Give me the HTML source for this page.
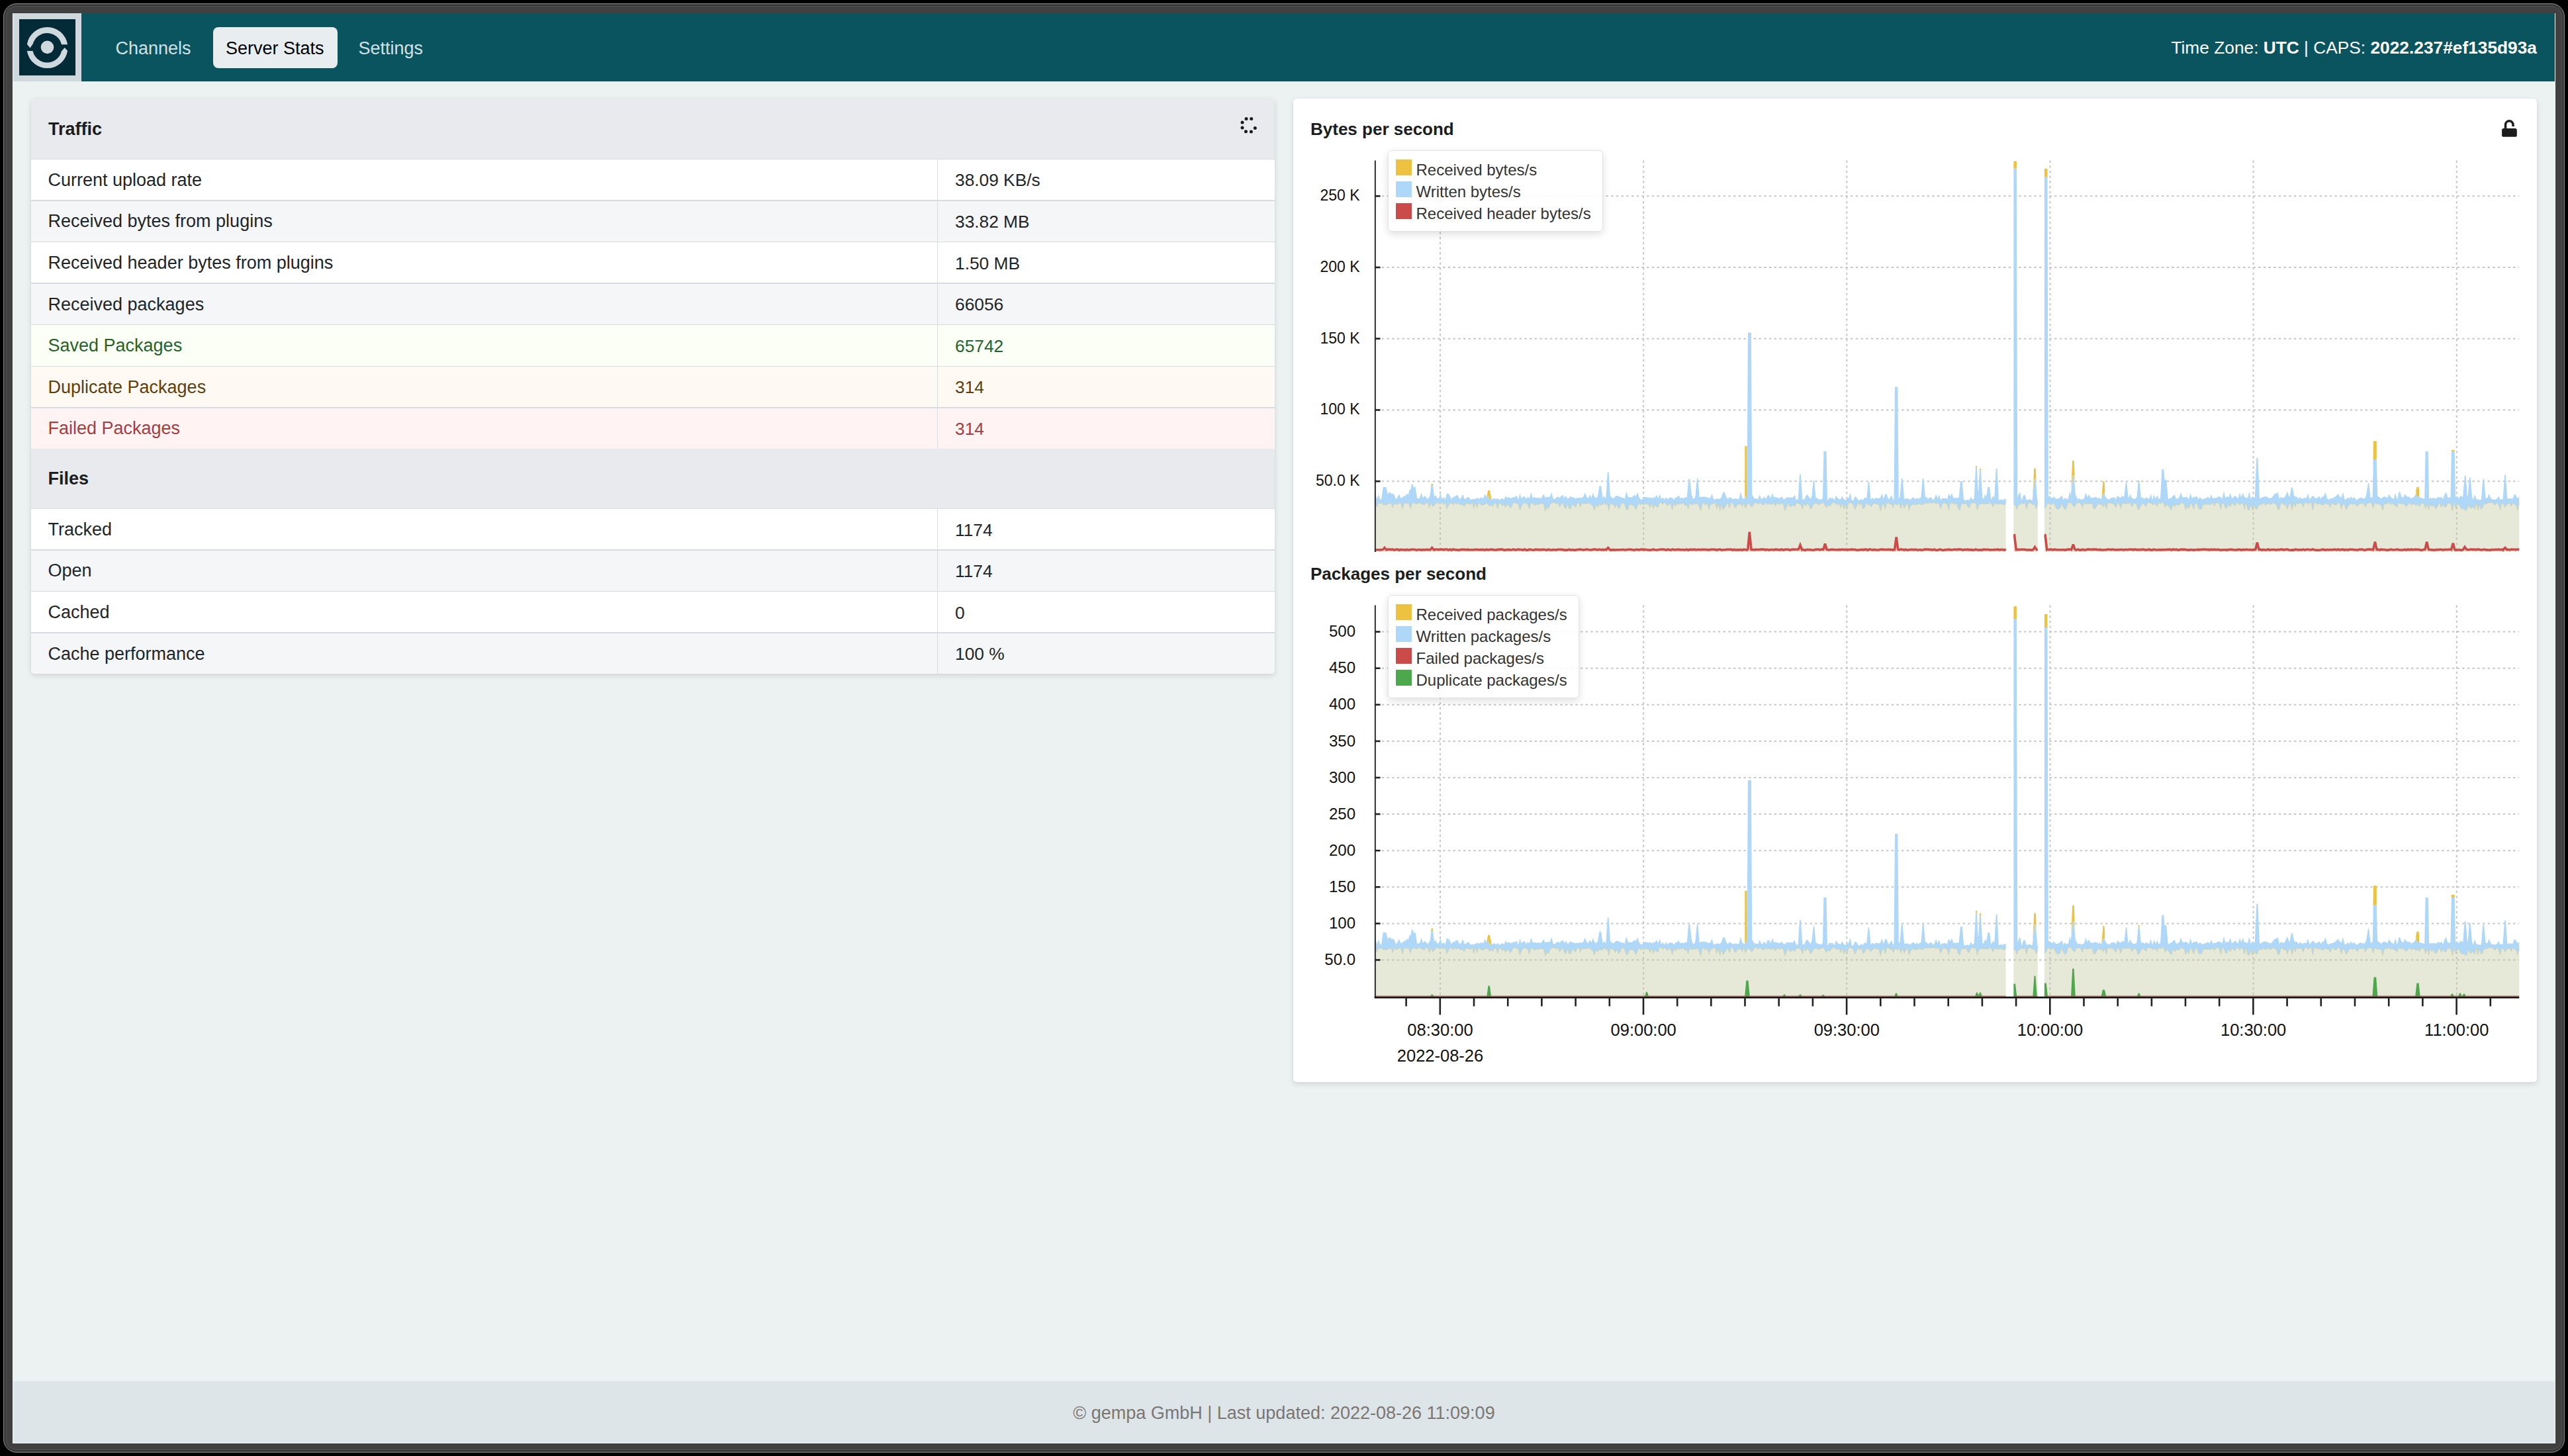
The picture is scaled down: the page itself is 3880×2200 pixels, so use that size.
<!DOCTYPE html>
<html><head><meta charset="utf-8"><style>
html,body{margin:0;padding:0;width:3880px;height:2200px;overflow:hidden;background:#000;}
body{position:relative;font-family:"Liberation Sans",sans-serif;}
.t{position:absolute;white-space:nowrap;}
.r{position:absolute;}
</style></head><body>
<div class="r" style="left:4.60px;top:4.60px;width:3870.80px;height:2190.80px;background:#404040;border-radius:20px;border:1.2px solid #808080;box-sizing:border-box;"></div>
<div class="r" style="left:7.60px;top:7.60px;width:3864.80px;height:2184.80px;background:transparent;border-radius:17px;border:1px solid #303030;box-sizing:border-box;"></div>
<div class="r" style="left:8.80px;top:8.80px;width:3862.40px;height:2182.40px;background:transparent;border-radius:16px;border:1px solid #555555;box-sizing:border-box;"></div>
<div class="r" style="left:19.40px;top:20.00px;width:3841.20px;height:2160.60px;background:#f6fafa;"></div>
<div class="r" style="left:20.00px;top:20.00px;width:3840.00px;height:2160.00px;background:#ecf2f2;"></div>
<div class="r" style="left:20.00px;top:20.00px;width:3840.00px;height:103.00px;background:#0a5460;"></div>
<div class="r" style="left:20.00px;top:20.00px;width:103.00px;height:103.00px;background:#cfd8dc;"></div>
<div class="r" style="left:29.00px;top:29.00px;width:85.00px;height:85.00px;background:#022b37;"></div>
<svg class="r" style="left:29px;top:29px" width="85" height="85" viewBox="29 29 85 85">
<circle cx="71.5" cy="71.4" r="9.8" fill="#cfd8dc"/>
<g transform="translate(0 0.45)"><path d="M40.85 66.4 A31 31 0 0 1 102.1 66.9 L92.9 66.9 A22.2 22.2 0 0 0 49.85 65.7 L45.4 72.0 Z" fill="#cfd8dc"/>
<path d="M102.1 76.3 A31 31 0 0 1 40.85 76.65 L49.6 76.65 A22.2 22.2 0 0 0 92.9 77.05 L97.6 71.6 Z" fill="#cfd8dc"/></g>
</svg>
<div class="r" style="left:322.00px;top:41.00px;width:188.00px;height:62.00px;background:#e8eef0;border-radius:8px;"></div>
<div class="t" style="left:174.50px;top:60.14px;font-size:27px;line-height:27px;color:#d2e1e4;font-weight:400;">Channels</div>
<div class="t" style="left:341.00px;top:60.14px;font-size:27px;line-height:27px;color:#000;font-weight:400;">Server Stats</div>
<div class="t" style="left:541.50px;top:60.14px;font-size:27px;line-height:27px;color:#d2e1e4;font-weight:400;">Settings</div>
<div class="t" style="right:47.00px;text-align:right;top:59.24px;font-size:26.3px;line-height:26.3px;color:#ffffff;font-weight:400;">Time Zone: <b>UTC</b> | CAPS: <b>2022.237#ef135d93a</b></div>
<div class="r" style="left:20.00px;top:2087.00px;width:3840.00px;height:93.00px;background:#dee5e8;"></div>
<div class="t" style="left:1340.00px;width:1200px;text-align:center;top:2121.64px;font-size:27px;line-height:27px;color:#7a7672;font-weight:400;">© gempa GmbH | Last updated: 2022-08-26 11:09:09</div>
<div class="r" style="left:47.00px;top:149.00px;width:1879.00px;height:869.00px;background:#ffffff;border-radius:5px;box-shadow:0 3px 9px rgba(0,0,0,0.12),0 0 2px rgba(0,0,0,0.07);overflow:hidden;"></div>
<div class="r" style="left:47.00px;top:149.00px;width:1879.00px;height:90.50px;background:#e9eaed;border-radius:5px 5px 0 0;"></div>
<div class="t" style="left:73.00px;top:182.14px;font-size:27px;line-height:27px;color:#1b1e21;font-weight:700;">Traffic</div>
<div class="r" style="left:47.00px;top:239.50px;width:1879.00px;height:62.61px;background:#ffffff;"></div>
<div class="r" style="left:47.00px;top:239.50px;width:1879.00px;height:1.50px;background:#d8dce1;"></div>
<div class="r" style="left:1415.70px;top:239.50px;width:1.50px;height:62.61px;background:#d8dce1;"></div>
<div class="t" style="left:72.50px;top:258.74px;font-size:27px;line-height:27px;color:#212529;font-weight:400;">Current upload rate</div>
<div class="t" style="left:1443.00px;top:259.34px;font-size:26.3px;line-height:26.3px;color:#212529;font-weight:400;">38.09 KB/s</div>
<div class="r" style="left:47.00px;top:302.11px;width:1879.00px;height:62.61px;background:#f5f6f8;"></div>
<div class="r" style="left:47.00px;top:302.11px;width:1879.00px;height:1.50px;background:#d8dce1;"></div>
<div class="r" style="left:1415.70px;top:302.11px;width:1.50px;height:62.61px;background:#d8dce1;"></div>
<div class="t" style="left:72.50px;top:321.35px;font-size:27px;line-height:27px;color:#212529;font-weight:400;">Received bytes from plugins</div>
<div class="t" style="left:1443.00px;top:321.95px;font-size:26.3px;line-height:26.3px;color:#212529;font-weight:400;">33.82 MB</div>
<div class="r" style="left:47.00px;top:364.72px;width:1879.00px;height:62.61px;background:#ffffff;"></div>
<div class="r" style="left:47.00px;top:364.72px;width:1879.00px;height:1.50px;background:#d8dce1;"></div>
<div class="r" style="left:1415.70px;top:364.72px;width:1.50px;height:62.61px;background:#d8dce1;"></div>
<div class="t" style="left:72.50px;top:383.96px;font-size:27px;line-height:27px;color:#212529;font-weight:400;">Received header bytes from plugins</div>
<div class="t" style="left:1443.00px;top:384.56px;font-size:26.3px;line-height:26.3px;color:#212529;font-weight:400;">1.50 MB</div>
<div class="r" style="left:47.00px;top:427.33px;width:1879.00px;height:62.61px;background:#f5f6f8;"></div>
<div class="r" style="left:47.00px;top:427.33px;width:1879.00px;height:1.50px;background:#d8dce1;"></div>
<div class="r" style="left:1415.70px;top:427.33px;width:1.50px;height:62.61px;background:#d8dce1;"></div>
<div class="t" style="left:72.50px;top:446.57px;font-size:27px;line-height:27px;color:#212529;font-weight:400;">Received packages</div>
<div class="t" style="left:1443.00px;top:447.17px;font-size:26.3px;line-height:26.3px;color:#212529;font-weight:400;">66056</div>
<div class="r" style="left:47.00px;top:489.94px;width:1879.00px;height:62.61px;background:#fcfff5;"></div>
<div class="r" style="left:47.00px;top:489.94px;width:1879.00px;height:1.50px;background:#d8dce1;"></div>
<div class="r" style="left:1415.70px;top:489.94px;width:1.50px;height:62.61px;background:#d8dce1;"></div>
<div class="t" style="left:72.50px;top:509.18px;font-size:27px;line-height:27px;color:#24632c;font-weight:400;">Saved Packages</div>
<div class="t" style="left:1443.00px;top:509.78px;font-size:26.3px;line-height:26.3px;color:#24632c;font-weight:400;">65742</div>
<div class="r" style="left:47.00px;top:552.55px;width:1879.00px;height:62.61px;background:#fff9f3;"></div>
<div class="r" style="left:47.00px;top:552.55px;width:1879.00px;height:1.50px;background:#d8dce1;"></div>
<div class="r" style="left:1415.70px;top:552.55px;width:1.50px;height:62.61px;background:#d8dce1;"></div>
<div class="t" style="left:72.50px;top:571.79px;font-size:27px;line-height:27px;color:#5e400d;font-weight:400;">Duplicate Packages</div>
<div class="t" style="left:1443.00px;top:572.39px;font-size:26.3px;line-height:26.3px;color:#5e400d;font-weight:400;">314</div>
<div class="r" style="left:47.00px;top:615.16px;width:1879.00px;height:62.61px;background:#fff4f3;"></div>
<div class="r" style="left:47.00px;top:615.16px;width:1879.00px;height:1.50px;background:#d8dce1;"></div>
<div class="r" style="left:1415.70px;top:615.16px;width:1.50px;height:62.61px;background:#d8dce1;"></div>
<div class="t" style="left:72.50px;top:634.40px;font-size:27px;line-height:27px;color:#a63c3f;font-weight:400;">Failed Packages</div>
<div class="t" style="left:1443.00px;top:635.00px;font-size:26.3px;line-height:26.3px;color:#a63c3f;font-weight:400;">314</div>
<div class="r" style="left:47.00px;top:677.80px;width:1879.00px;height:89.90px;background:#e9eaed;"></div>
<div class="t" style="left:72.50px;top:709.64px;font-size:27px;line-height:27px;color:#1b1e21;font-weight:700;">Files</div>
<div class="r" style="left:47.00px;top:767.70px;width:1879.00px;height:62.55px;background:#ffffff;"></div>
<div class="r" style="left:47.00px;top:767.70px;width:1879.00px;height:1.50px;background:#d8dce1;"></div>
<div class="r" style="left:1415.70px;top:767.70px;width:1.50px;height:62.55px;background:#d8dce1;"></div>
<div class="t" style="left:72.50px;top:786.94px;font-size:27px;line-height:27px;color:#212529;font-weight:400;">Tracked</div>
<div class="t" style="left:1443.00px;top:787.54px;font-size:26.3px;line-height:26.3px;color:#212529;font-weight:400;">1174</div>
<div class="r" style="left:47.00px;top:830.25px;width:1879.00px;height:62.55px;background:#f5f6f8;"></div>
<div class="r" style="left:47.00px;top:830.25px;width:1879.00px;height:1.50px;background:#d8dce1;"></div>
<div class="r" style="left:1415.70px;top:830.25px;width:1.50px;height:62.55px;background:#d8dce1;"></div>
<div class="t" style="left:72.50px;top:849.49px;font-size:27px;line-height:27px;color:#212529;font-weight:400;">Open</div>
<div class="t" style="left:1443.00px;top:850.09px;font-size:26.3px;line-height:26.3px;color:#212529;font-weight:400;">1174</div>
<div class="r" style="left:47.00px;top:892.80px;width:1879.00px;height:62.55px;background:#ffffff;"></div>
<div class="r" style="left:47.00px;top:892.80px;width:1879.00px;height:1.50px;background:#d8dce1;"></div>
<div class="r" style="left:1415.70px;top:892.80px;width:1.50px;height:62.55px;background:#d8dce1;"></div>
<div class="t" style="left:72.50px;top:912.04px;font-size:27px;line-height:27px;color:#212529;font-weight:400;">Cached</div>
<div class="t" style="left:1443.00px;top:912.64px;font-size:26.3px;line-height:26.3px;color:#212529;font-weight:400;">0</div>
<div class="r" style="left:47.00px;top:955.35px;width:1879.00px;height:62.55px;background:#f5f6f8;border-radius:0 0 5px 5px;"></div>
<div class="r" style="left:47.00px;top:955.35px;width:1879.00px;height:1.50px;background:#d8dce1;"></div>
<div class="r" style="left:1415.70px;top:955.35px;width:1.50px;height:62.55px;background:#d8dce1;"></div>
<div class="t" style="left:72.50px;top:974.59px;font-size:27px;line-height:27px;color:#212529;font-weight:400;">Cache performance</div>
<div class="t" style="left:1443.00px;top:975.19px;font-size:26.3px;line-height:26.3px;color:#212529;font-weight:400;">100 %</div>
<svg class="r" style="left:0;top:0" width="3880" height="300"><circle cx="1883.0" cy="179.4" r="2.5" fill="#1a1a1a"/><circle cx="1890.7" cy="179.4" r="2.5" fill="#1a1a1a"/><circle cx="1877.0" cy="185.1" r="2.5" fill="#1a1a1a"/><circle cx="1877.0" cy="193.0" r="2.5" fill="#1a1a1a"/><circle cx="1896.3" cy="193.4" r="2.5" fill="#1a1a1a"/><circle cx="1882.4" cy="198.7" r="2.5" fill="#1a1a1a"/><circle cx="1890.4" cy="199.0" r="2.5" fill="#1a1a1a"/></svg>
<div class="r" style="left:1954.00px;top:149.00px;width:1879.00px;height:1486.00px;background:#ffffff;border-radius:5px;box-shadow:0 3px 9px rgba(0,0,0,0.12),0 0 2px rgba(0,0,0,0.07);"></div>
<div class="t" style="left:1980.00px;top:182.29px;font-size:26px;line-height:26px;color:#1b1e21;font-weight:700;">Bytes per second</div>
<div class="t" style="left:1980.00px;top:853.99px;font-size:26px;line-height:26px;color:#1b1e21;font-weight:700;">Packages per second</div>
<svg class="r" style="left:0;top:0" width="3880" height="2200" viewBox="0 0 3880 2200">
<g stroke="#c6c6c6" stroke-width="2" stroke-dasharray="3.4 4.3"><line x1="2080" y1="727.2" x2="3806" y2="727.2"/><line x1="2080" y1="619.5" x2="3806" y2="619.5"/><line x1="2080" y1="511.7" x2="3806" y2="511.7"/><line x1="2080" y1="404.0" x2="3806" y2="404.0"/><line x1="2080" y1="296.3" x2="3806" y2="296.3"/><line x1="2176.0" y1="242.5" x2="2176.0" y2="834.0"/><line x1="2483.2" y1="242.5" x2="2483.2" y2="834.0"/><line x1="2790.3" y1="242.5" x2="2790.3" y2="834.0"/><line x1="3097.5" y1="242.5" x2="3097.5" y2="834.0"/><line x1="3404.6" y1="242.5" x2="3404.6" y2="834.0"/><line x1="3711.8" y1="242.5" x2="3711.8" y2="834.0"/></g>
<path d="M2078 834l0 -73.6 2.4 5.5 2.4 -5.3 2.4 0.2 2 -0.7 0.4 -0.1 2 2.6 0.4 0.5 2 -0.4 0.4 0 2 0 0.4 0 2 -0.5 0.4 -0.2 2.4 -1.9 2.4 1.2 2.4 5.8 2.4 -7.7 2.4 3.5 2.4 -1 2.4 -1.4 2.4 -0.5 2.4 9.3 2.4 -8 2.4 -1.4 2.4 0.9 1.2 -0.3 1.2 -0.3 1.2 4.2 0.9 3.1 0.3 1 0.6 -1.6 1.5 -4.1 0.3 -0.8 0.6 -0.5 0.2 -0.2 1.1 -0.9 0.5 -0.4 0.8 0.2 1.1 0.2 0.5 0.1 0.6 0.4 1.8 1 0.6 -0.3 1.8 -0.9 2.4 -1.2 2.4 2.4 2.4 0.2 2.4 0.8 2.4 -3.6 2.4 0.6 2.4 7.8 0.6 -2.1 1.8 -6.1 0.6 1.6 1.1 2.9 0.7 1.9 0.4 -0.3 2 -1.4 0.4 -0.6 2 -3 2.4 -1 2.4 1.2 2.4 0.8 2.4 -2.3 2.4 3.2 2.4 -3.1 2.4 9.7 2.4 -5 2.4 -4 2.4 0.1 2.4 2.6 2.4 -3 2.4 2.5 2.4 -2.2 2.4 1.9 2.4 0.7 2.4 0.1 2.4 2.8 2.4 -5.7 2.4 1.6 2.4 -0.2 2.4 1.5 2.4 -3.5 2.4 9.5 2.4 -9.5 2.4 8.5 2.4 -7.8 2.4 1.8 2.4 1.4 2.4 -0.1 2.4 -1.1 2.3 -1.5 0.1 0 2.3 1.2 0.1 0.1 1.3 1.9 1.1 1.6 0.3 -0.3 2.1 -2.1 0.3 0.3 2.1 2 2.4 -4.6 2.4 0.1 2.4 7.8 2.4 -8.4 2.4 1.1 2.4 3.6 2.4 -2.9 2.4 5.3 2.4 -5.5 2.4 2.6 2.4 3.6 2.4 -3.3 2.4 -5.2 2.4 0.7 2.4 0.6 2.4 1.2 2.4 8.9 2.4 -5.9 2.4 -3.8 2.4 -1.3 2.4 1.6 2.4 0.6 2.4 7.5 2.4 -9.6 2.4 0.9 2.4 2.8 2.4 -1.4 2.4 0.2 2.4 0 2.4 -2 2.4 1.3 2.4 -0.1 2.4 10.9 2.4 -6.2 2.4 2.9 2.4 -6.7 2.4 -2.4 2.4 -0.5 2.4 0.2 2.4 1.9 2.4 -1.9 2.4 6.4 2.4 -3.7 2.4 -2.9 2.4 7.1 2.4 2 2.4 -7.8 2.4 7.9 2.4 0.2 2.4 -7.2 2.4 2.1 2.4 2.8 2.4 -5.8 2.4 -1.4 2.4 6.9 2.4 -5.8 2.4 0.7 2.4 -0.3 2.4 -0.1 2.4 -0.4 2.4 0.1 2.4 2.5 2.4 1.8 2.4 6 2.4 -8.4 2.4 3.8 0 -0.1 2.4 -4.1 0 0.1 1.4 0.5 1 0.4 0.4 -0.1 2 0 0.4 -0.6 2 -2.7 2.4 3.4 0.4 -0.4 2 -2 0.4 2 0.9 3.9 0.9 3.9 0.2 0.7 2.2 -9.9 0.2 -0.7 2.4 1.7 2.4 0.1 2.4 5 2.4 -5.8 2.4 7.2 2.4 -2.1 2.4 -6.2 2.4 -0.5 2.4 2.7 2.4 7.6 2.4 -0.2 2.4 -8 2.4 0.8 2.4 0.1 2.4 2.5 2.4 5 2.4 -5.6 2.4 -5.3 2.4 3.6 2.4 -2.3 2.4 2 2.4 -1.7 2.4 0.6 2.4 0.1 2.4 5.3 2.4 -7.2 2.4 8.9 2.4 -6.2 2.4 3.3 2.4 -0.1 2.4 -6.6 2.4 0.3 2.4 2.8 2.4 -3 2.4 2.2 2.4 2.8 2.4 -3.7 2.4 1.9 2.4 7.9 2.4 -10.3 2.4 5 2.4 -4.9 2.4 2.6 2.4 -2.7 2.4 1.9 2.4 -2.5 2.4 4.7 2.4 -1.9 0.4 1.2 2 5.5 0.4 -1.6 1.1 -3.9 0.9 -3.1 0.2 0.2 2.1 1.5 0.3 0.1 2.1 0.6 2.4 -2.3 1.3 1.1 1.1 1 1.3 -1.4 0.7 -0.8 0.4 -0.5 0.3 0.7 2.1 5.8 0.3 0.6 2.1 5.3 2.4 -12.7 2.4 1.6 2.4 2.3 2.4 -3.9 2.4 10.2 2.4 -7.1 2.4 -1.1 2.4 -0.8 2.4 -1.5 2.4 9.7 2.4 -7.7 2.4 10.2 2.4 -9.3 2.4 8.3 2.4 -3.3 2.4 -4.3 2.4 -2.7 2.4 7.7 2.4 -8 2.4 -0.7 2.4 6.3 2.4 1.6 2.4 -4.9 2.4 -0.4 2.4 -0.3 2.4 4 2.4 -5.6 0.2 0.5 1.4 4.6 0.8 2.8 1.2 -2.5 1.2 -2.6 0 -0.1 0.8 -0.6 0.6 -0.4 0.8 -0.6 0.2 -0.2 1.5 1.2 0.9 0.9 1.6 2.2 0.8 1.2 0.6 -0.8 1.8 -2.7 2.4 -3.5 2.4 0 2.4 3.1 2.4 -2.7 2.4 1.4 2.4 1.8 2.4 -0.4 2.4 -2.5 2.4 2.3 2.4 -1.5 2.4 1.6 2.4 -0.9 2.4 -0.9 2.4 4.1 2.4 -4.6 2.4 1.2 2.4 0.9 2.4 -2.2 2.4 2.8 2.4 9 2.4 -6.7 2.4 -4.8 2.4 5 2.4 -0.1 2.4 -2.3 2.4 2.7 2.4 -4.8 2.4 -0.7 0.4 0.2 2 1.1 0.4 0.2 0.9 0.4 0.9 0.5 0.2 0.1 2.2 6.1 0.2 0.6 2.4 -9.5 2.4 5.4 2.4 -4.5 2.4 2.3 2.4 6.3 1.9 -2.1 0.5 -0.6 1.9 -4.1 0.5 -1.2 0.2 0 0.7 -0.3 1.5 -0.4 0.9 0.1 1.5 0.2 2.4 1.4 2.4 -0.1 2.4 -2.1 1.7 -0.5 0.7 -0.2 0.7 1 1.7 2.4 0.4 0.7 2 3.8 0.1 -0.1 1.4 -2.6 0.9 -1.7 2.4 2.3 2.4 -2.7 2.4 -3.1 2.4 0.2 2.4 2.2 2.4 0.6 2.4 -1.7 2.4 7 2.4 -7.7 2.4 9.4 2.4 -6.3 2.4 5.3 2.4 -8.5 2.4 -0.5 2.4 1 2.4 2.7 2.4 6.7 2.4 -4.7 2.4 -5.8 2.4 4.2 2.4 -3.7 2.4 8.8 2.4 -1.5 2.4 -6.8 0.9 0.8 1.5 1.4 0.9 -0.3 0.7 -0.2 0.7 -0.2 0.1 0 2.3 3.7 0.1 0.2 2.4 -2.7 2.4 -2.7 2.4 0.9 2.4 0.8 2.4 -0.5 2.4 10.8 2.4 -8.1 2.4 -4.1 2.4 9.2 2.4 -8.9 2.4 -1.1 2.4 3.1 2.4 -1.6 2.4 6.5 1.3 -3.4 1.1 -2.9 0.3 0.2 2.1 1.1 0.1 0.1 2.2 0.2 0.1 0 1.3 -0.9 1.1 -0.7 0.6 1.8 1.8 5.5 0.6 -1.9 0.9 -3 0.9 -3 0 -0.1 2.4 7.7 0 0.1 2.4 -4.5 2.4 -4.2 2.4 11.4 2.4 -6.3 2.4 -2.2 2.4 -0.6 2.4 1 2.4 -0.2 2.4 -1 2.4 -0.3 1.3 1 1.1 0.8 1.3 -0.6 0.9 -0.4 0.2 -0.1 0.7 -0.3 1.7 -0.7 0.7 -0.4 1.7 -1 2.4 1.3 2.4 -1.4 2.4 0.8 2.4 -0.3 2.4 -0.5 2.4 2.3 2.4 -2.4 2.4 2.9 2.4 6.1 2.4 -6.1 2.4 -2.8 2.4 1.6 2.4 0.4 2.4 9.2 2.4 -10.5 2.4 0.3 2.4 -0.1 2.4 1.8 2.4 -1.8 2.4 7.9 0.9 1.1 1.5 1.8 0.9 -3.9 1.4 -6.2 0.1 -0.4 1.3 0.6 1.1 0.6 1.3 -0.4 1.1 -0.3 2.4 -0.5 2.4 5.2 2.4 1.4 2.4 -7.3 2.4 -0.1 2.4 0 0 0 2.4 0.6 0 0 0.9 3.8 0.9 3.9 0.6 2.6 1.2 -3.9 0.6 -2 0.6 -2 1.2 -0.9 0.9 -0.6 0.3 -0.2 0.6 0 1.8 0 0.6 0 1.8 0 2.4 0.9 1.4 -0.7 1 -0.5 1.4 0.5 1 0.4 0.4 -0.4 1.4 -1.4 0.6 -0.6 1.8 1.8 0.6 0.7 2.4 4.2 1.8 -4.5 0.6 -1.5 1.8 1.9 0.6 0.7 0.3 -0.2 0.9 -0.5 1.2 -0.8 1.2 0.4 1.2 0.3 2.4 -0.7 2.4 1.1 2.4 0.9 2.4 -3 0 73.8Z" fill="rgba(190,196,150,0.38)"/>
<path d="M3042.4 834l0 -71.5 1.7 0.2 0.7 0.1 2.1 6.2 0.3 1.1 1.1 -3.2 1.4 -4.2 2.4 0.1 2.4 -2.8 2.4 2 2.5 -2.8 2.4 10.6 2.4 -9 2.4 -1.2 2.5 1.2 1.8 1.5 0.6 0.4 1.8 -0.7 0.6 -0.3 0.6 1.9 1.2 3.8 0.6 1.9 1.8 -4.3 0.7 -1.5 0 70.5Z" fill="rgba(190,196,150,0.38)"/>
<path d="M3088.9 834l0 -65.2 1.8 -1.6 0.6 -0.5 2.2 -6.3 0.2 -0.5 1.2 0.7 1.2 0.7 2.4 1.9 2.4 -2.2 2.4 -0.4 2.4 5.8 2.4 3.2 2.4 -0.4 2.4 -2.1 2.4 -6.4 2.4 6.2 2.4 3.3 2.4 -2.9 2.4 -7.8 2.4 0 1.4 0.5 1 0.3 1.4 2.3 1 1.5 0.3 0.3 1.3 1.1 0.8 0.7 1.6 -3.2 0.8 -1.6 2.4 -1.8 2.4 0 2.4 2.1 2.4 5.2 2.4 -7.5 2.4 2.7 2.4 -0.3 2.4 -0.5 2.4 -0.1 2.4 -0.8 2.4 8.7 2.4 -0.3 2.4 -4.6 2.4 -3.4 2.4 2 2.2 -0.9 0.2 -0.1 2.2 4 0.2 0.3 0.7 -1.6 0.9 -2 0.8 -1.7 1.6 6 0.8 2.8 2.4 -9.9 2.4 0.7 2.4 -0.4 2.4 1.4 2.4 1.1 2.4 4.5 2.4 -7 2.4 1.3 2.4 7 2.4 -7.4 2.4 -0.4 0.5 0.3 1.9 0.8 0.5 -0.3 0.7 -0.4 0.7 -0.4 0.5 -0.3 1.9 1.1 0.5 0.2 2.4 -2.3 2.4 6.7 2.4 -3.8 2.4 -1.5 2.4 1.7 0.2 0.8 2.2 7.4 0.2 -0.3 0.9 -1 0.9 -1 0.4 -0.4 2 -4 0.4 -0.8 2.4 -2.2 2.4 1.9 2.4 2.8 2.4 -5.7 2.4 -0.1 2.4 0.8 2.4 1.3 2.4 0.9 2.4 -2.1 2.4 4.9 2.4 -6.1 2.3 2.2 0.1 0.1 2.3 -2.2 0.1 0 1.3 0.1 0.4 0 0.6 0.1 0.4 1 1.4 4.2 0.6 1.9 0.4 -0.6 0.4 -0.8 1.4 -2.6 0.2 -0.5 2.2 1.8 0.2 0.2 2.4 3.5 2.4 3.1 2.4 -9.1 2.4 4.1 2.4 -2.8 2.4 -0.5 2.4 0.6 2.4 -3.4 2.4 0.3 2.4 2.3 2.4 8 2.4 -5.7 2.4 4.2 2.4 -8.6 2.4 2.6 2.4 6.6 2.4 -8.4 2.4 -0.7 2.4 7.8 2.4 1.2 2.4 -0.6 2.4 -6.8 2.4 0.7 2.4 -1.1 2.4 0.9 2.4 -0.5 2.4 1 2.4 -3.7 2.4 5.7 2.4 -5.2 2.4 0.1 2.4 0.6 2.4 9.5 2.4 -10.5 2.4 1.7 2.4 6.7 2.4 -0.3 2.4 -6.4 2.4 4.9 2.4 -5.3 2.4 0.9 2.4 3.1 2.4 -5 2.4 0.2 2.4 3.6 2.4 -3.4 2.4 1.1 2.4 8.2 2.4 -10.1 2.4 10.7 2.4 0.9 2.4 -8.4 2.4 9 2.4 -8.4 1.3 3.1 1.1 2.7 1.3 0.3 1.1 0.3 0 0 1.1 -3 1.3 -3.7 1.1 -0.3 1.3 -0.4 2.4 0.4 2.4 -3 2.4 3.4 2.4 -0.8 2.4 -2.1 2.4 2.4 2.4 -0.7 2.4 -2.2 2.4 1.8 2.4 0.4 2.4 8.1 2.4 -0.5 2.4 -10 2.4 1.5 2.4 2 2.4 -0.4 2.4 7 2.4 -8 1.1 0 1.3 -0.1 1.1 4.5 0.9 3.7 0.4 1.6 0.5 -2.4 1.9 -9.3 0.5 1.4 1.9 5.3 2.4 -6.3 2.4 1.4 2.4 -0.7 2.4 0.2 2.4 5.7 2.4 -6.8 2.4 -0.2 2.4 3 2.4 -2.4 2.4 -0.8 2.4 11.4 2.4 -10.9 2.4 -0.2 2.4 2.8 2.4 -1.5 2.4 1.2 2.4 0.9 2.4 0 2.4 -2.7 2.4 1.7 2.4 -0.3 2.4 5.2 2.4 -7.3 2.4 2.4 2.4 0.7 2.4 0 2.4 -3.5 2.4 1.7 2.4 8.3 2.4 -7.6 2.4 1 2.4 7.7 2.4 -3.6 2.4 -4.8 2.4 -1 2.4 2 2.4 -1.9 2.4 1.5 2.4 3.2 2.4 -3.7 2.4 -1.4 2.4 0.9 2.4 -1.5 2.4 6.5 1.9 -3.6 0.5 -0.9 1.9 -1.3 0.5 -0.3 0.2 -0.1 0.7 -0.2 1.5 -0.6 0.9 0.5 1.5 0.7 1.4 4.2 1 2.8 0.4 -1.4 2 -6.3 0.4 0.3 2 1.4 0.4 -0.1 1.4 -0.1 0.6 0 2.4 0.6 2.4 0.7 2.4 9.1 2.4 -10.4 2.4 -0.4 2.4 0.1 2.4 -1.9 2.4 3.5 2.4 -2.8 2.4 3.1 2.4 -0.2 2.4 4 0.7 -2.2 1.7 -4.9 0.7 0.4 0.7 0.4 0.7 0.4 0.3 0.2 2.1 0 0.2 0 2.4 0.6 2.4 0.9 2.4 3 2.4 -3.4 2.4 -2.5 2.4 3.2 2.4 -1 2.4 -0.8 1.3 1.6 1.1 1.4 1.3 -1.4 1.1 -1.3 0.3 0.4 1.4 2.5 0.7 1.3 1.7 -2.6 0.7 -1.2 2.4 -2.1 2.4 1.9 0.9 2.4 1.4 4.1 0.1 0.4 2 -5.7 0.4 -1.3 1.7 6.2 0.7 2.8 0.7 -2.6 1.7 -6.8 2.4 4.8 2.4 -3.3 2.4 5 2.4 0.4 2.4 -5.5 2.4 -2.1 2.4 6.5 2.4 -4.6 2.4 3.8 2.4 -0.2 2.4 -5.4 2.4 0 1.8 1.2 0.6 0.5 0.8 3.2 1.6 6.9 0.8 -4.3 1.6 -8.9 0.8 2.9 1.4 5.3 0.2 0.8 2.4 -5.6 2.4 -0.6 2.4 5.5 2.4 1.5 1.4 -0.1 1 -0.1 1.4 1.3 0.9 0.8 0.1 0.2 0.8 -0.1 1.6 -0.2 0.8 -2.6 0.6 -2 1 -3.4 1.4 3 0.9 2 0.1 0.2 0.8 -0.2 1.6 -0.4 0.8 -0.5 1.6 -1 2.4 3.7 2.4 -10.2 2.4 11.6 2.4 -9.2 2.4 8.1 0.3 -0.3 2.1 -2.4 0.3 -0.7 0.9 -2.4 0.9 -2.3 0.3 -0.9 2.1 0.9 0.3 0.1 2.4 -1.4 2.4 -0.8 2.4 -0.1 2.4 0 2.4 2.9 2.4 0.4 2.4 -3.3 2.4 3.3 2.4 7.6 2.4 -9.9 1.8 0.3 0.6 0.1 1.8 4.4 0.6 1.5 0.3 -0.6 0.9 -1.7 1.2 -2.3 1.2 -0.4 1.2 -0.3 2.4 -1.5 2.4 5.5 2.4 -5.6 2.4 2.3 2.4 0.8 2.4 8.3 2.4 -10.9 0 73.5Z" fill="rgba(190,196,150,0.38)"/>
<path d="M2078 745.6l2.4 8.7 2.4 -7.6 2.4 8 2 -0.3 0.4 -3.1 2 -15.3 0.4 0 2 0 0.4 0 2 0 0.4 2.2 2 8.3 0.4 -0.6 2.4 -2.8 2.4 3.1 2.4 -0.4 2.4 2.3 2.4 6.3 2.4 -3.1 2.4 -5.1 2.4 6.6 2.4 -1.3 2.4 -1.9 2.4 -0.4 2.4 -3.7 1.2 2.4 1.2 -2.7 1.2 -5.2 0.9 0 0.3 0 0.6 0 1.5 -8 0.3 0 0.6 0 0.2 0 1.1 0 0.5 4.6 0.8 -0.6 1.1 0 0.5 0 0.6 0 1.8 12.1 0.6 4.4 1.8 1 2.4 -1.5 2.4 -7.8 2.4 8.4 2.4 -3.6 2.4 2.8 2.4 2 2.4 -3.2 0.6 -0.7 1.8 -13.1 0.6 -3.8 1.1 0 0.7 0 0.4 0 2 15.1 0.4 2.6 2 -2.6 2.4 5.4 2.4 -1.2 2.4 -6.7 2.4 8.5 2.4 -3.1 2.4 3.8 2.4 -9.4 2.4 0.5 2.4 3.3 2.4 5.1 2.4 -3.7 2.4 0.2 2.4 -2.9 2.4 0.8 2.4 5.4 2.4 -1.5 2.4 -6.3 2.4 7.1 2.4 0.4 2.4 -3 2.4 0.8 2.4 3.5 2.4 -0.8 2.4 0 2.4 -0.2 2.4 -2.4 2.4 2.2 2.4 -1.7 2.4 -0.5 2.4 1.2 2.4 -6.7 2.3 5.2 0.1 0.2 2.3 -2.7 0.1 -0.1 1.3 3 1.1 2.5 0.3 0 2.1 0.3 0.3 -0.1 2.1 -0.6 2.4 -1.3 2.4 2 2.4 -1.9 2.4 2.5 2.4 -1 2.4 -1.7 2.4 2.5 2.4 -5.8 2.4 3.3 2.4 -1.8 2.4 2.4 2.4 -1.1 2.4 -0.8 2.4 -0.3 2.4 -1.9 2.4 5.8 2.4 -9.4 2.4 7.8 2.4 -3 2.4 -0.1 2.4 4 2.4 -3.6 2.4 2.5 2.4 -8.9 2.4 7.8 2.4 -0.6 2.4 0.8 2.4 0.4 2.4 -1.1 2.4 1.8 2.4 -2.9 2.4 -3.5 2.4 5.1 2.4 -1.3 2.4 0.7 2.4 -1.3 2.4 -6 2.4 9.9 2.4 -0.2 2.4 -1.8 2.4 -1.8 2.4 2.2 2.4 -2.7 2.4 -1.8 2.4 4.6 2.4 -3.3 2.4 4.7 2.4 -1.7 2.4 -2.5 2.4 2.1 2.4 -0.2 2.4 1.6 2.4 -1.1 2.4 0.6 2.4 -1 2.4 0.8 2.4 -2.2 2.4 -5.9 2.4 6.2 2.4 2.3 2.4 -5.4 2.4 4.5 2.4 -7.1 2.4 6.1 2.4 1.6 2.4 -2.7 0 0 2.4 -15 0 -0.3 1.4 0 1 0 0.4 0 2 15.5 0.4 2.8 2 -3.1 2.4 2.9 0.4 -0.2 2 -32.3 0.4 -6.9 0.9 0 0.9 0 0.2 2.2 2.2 34.1 0.2 0.3 2.4 2.2 2.4 1.1 2.4 -2.7 2.4 -1.7 2.4 1.2 2.4 0.5 2.4 1.4 2.4 0.1 2.4 2 2.4 -11.9 2.4 8.3 2.4 1.1 2.4 0 2.4 -0.8 2.4 -3.1 2.4 2.4 2.4 -6.5 2.4 7.3 2.4 3.8 2.4 -0.1 2.4 -3.3 2.4 -0.2 2.4 0.3 2.4 0.9 2.4 -0.9 2.4 1.8 2.4 -1.7 2.4 0.6 2.4 -4.1 2.4 5.4 2.4 -6.8 2.4 7.9 2.4 -2.7 2.4 3.5 2.4 -4.4 2.4 4.1 2.4 -2.7 2.4 -0.3 2.4 0.3 2.4 3 2.4 -3.4 2.4 -0.6 2.4 -2.5 2.4 4.5 2.4 -1.6 2.4 1.7 2.4 -2 2.4 0.2 0.4 -0.3 2 -22.4 0.4 -4.9 1.1 0 0.9 0 0.2 0 2.1 20.1 0.3 3.2 2.1 6.7 2.4 -0.9 1.3 -3.6 1.1 -14.4 1.3 -11.9 0.7 0 0.4 0 0.3 0 2.1 25.6 0.3 2.8 2.1 -0.9 2.4 0.2 2.4 -0.3 2.4 0.4 2.4 0.8 2.4 1 2.4 -0.9 2.4 -5.6 2.4 8.5 2.4 -0.2 2.4 -1.2 2.4 0.2 2.4 0.7 2.4 -3.4 2.4 -7.5 2.4 1 2.4 7.1 2.4 2.9 2.4 -3 2.4 0.8 2.4 2.2 2.4 -0.5 2.4 -0.7 2.4 1.2 2.4 -0.4 2.4 -11 2.4 9 2.4 2.3 0.2 -0.1 1.4 -0.9 0.8 -0.5 1.2 -2 1.2 -2 0 -7.3 0.8 -133 0.6 -105.8 0.8 0 0.2 0 1.5 0 0.9 0 1.6 0 0.8 146 0.6 98.5 1.8 3.8 2.4 2.9 2.4 -0.5 2.4 0.9 2.4 -6.6 2.4 6.5 2.4 -0.9 2.4 -3.2 2.4 4.2 2.4 -5.8 2.4 -0.1 2.4 4.8 2.4 -8.2 2.4 6.8 2.4 -0.8 2.4 1.1 2.4 0.7 2.4 -0.2 2.4 -2.6 2.4 4.4 2.4 -0.1 2.4 -3.2 2.4 0.9 2.4 -0.5 2.4 0.6 2.4 -0.2 2.4 -4.1 2.4 7.5 2.4 -0.4 0.4 -0.5 2 -32.2 0.4 -5.4 0.9 0 0.9 0 0.2 3.7 2.2 34.1 0.2 -0.1 2.4 0.6 2.4 -5.5 2.4 -2.4 2.4 3.6 2.4 3.3 1.9 -4.5 0.5 -6.1 1.9 -17.3 0.5 0 0.2 0 0.7 0 1.5 17.1 0.9 9.4 1.5 -0.5 2.4 2.4 2.4 -0.2 2.4 0.7 1.7 -2.5 0.7 -37.2 0.7 -33.2 1.7 0 0.4 0 2 0 0.1 0 1.4 73.5 0.9 0.3 2.4 -4 2.4 1 2.4 -0.5 2.4 3.6 2.4 -7.4 2.4 3.7 2.4 2 2.4 -0.1 2.4 -4.5 2.4 4.7 2.4 1.4 2.4 -3.1 2.4 0.1 2.4 -8.5 2.4 11.9 2.4 -0.1 2.4 -5.9 2.4 1.5 2.4 4 2.4 0.4 2.4 -2.5 2.4 2.2 2.4 -3.7 2.4 0.5 0.9 -0.8 1.5 -15.6 0.9 -8.1 0.7 0 0.7 0 0.1 1.2 2.3 25.6 0.1 0.2 2.4 -3.2 2.4 2.8 2.4 -2.6 2.4 0.5 2.4 0.6 2.4 -1 2.4 -6.4 2.4 8.1 2.4 -7 2.4 0.3 2.4 7.1 2.4 -1.5 2.4 -5 2.4 7.2 1.3 -1.1 1.1 -135.3 0.3 -33.9 2.1 0 0.1 0 2.2 0 0.1 14.3 1.3 154.1 1.1 -1.8 0.6 0.4 1.8 -21.3 0.6 -7.3 0.9 0 0.9 0 0 0.2 2.4 29.7 0 0 2.4 1 2.4 -1.1 2.4 1.4 2.4 0.7 2.4 -2.9 2.4 -0.6 2.4 3 2.4 -2.5 2.4 2.1 2.4 -2.4 1.3 1.1 1.1 -13.3 1.3 -16.4 0.9 0 0.2 0 0.7 0 1.7 20.5 0.7 8.1 1.7 -0.5 2.4 3 2.4 -2.1 2.4 -0.7 2.4 3.9 2.4 -1.5 2.4 -7.4 2.4 6.9 2.4 -5.7 2.4 8 2.4 -2.5 2.4 0.1 2.4 -0.5 2.4 1.8 2.4 -8.6 2.4 4.3 2.4 -4.9 2.4 7.3 2.4 -0.2 2.4 0.2 2.4 -0.8 0.9 0.7 1.5 -15.5 0.9 -9.9 1.4 0 0.1 0 1.3 0 1.1 13.3 1.3 15.6 1.1 0 2.4 -0.2 2.4 -0.6 2.4 0.7 2.4 -5 2.4 4.3 2.4 -1.9 0 -0.1 2.4 -47.1 0 0 0.9 0 0.9 0 0.6 12.5 1.2 23.4 0.6 0.4 0.6 -11.2 1.2 -21.1 0.9 0 0.3 0 0.6 0 1.8 31.6 0.6 10.8 1.8 0.8 2.4 -6.8 1.4 4 1 -4.4 1.4 -10.2 1 0 0.4 0 1.4 0 0.6 5 1.8 13.5 0.6 -0.4 2.4 -5.3 1.8 3.8 0.6 -10.2 1.8 -34.2 0.6 0 0.3 0 0.9 0 1.2 23 1.2 23.9 1.2 0.9 2.4 -1.5 2.4 1.4 2.4 -1.7 2.4 -0.3 0 6.5 -2.4 3 -2.4 -0.9 -2.4 -1.1 -2.4 0.7 -1.2 -0.3 -1.2 -0.4 -1.2 0.8 -0.9 0.5 -0.3 0.2 -0.6 -0.7 -1.8 -1.9 -0.6 1.5 -1.8 4.5 -2.4 -4.2 -0.6 -0.7 -1.8 -1.8 -0.6 0.6 -1.4 1.4 -0.4 0.4 -1 -0.4 -1.4 -0.5 -1 0.5 -1.4 0.7 -2.4 -0.9 -1.8 0 -0.6 0 -1.8 0 -0.6 0 -0.3 0.2 -0.9 0.6 -1.2 0.9 -0.6 2 -0.6 2 -1.2 3.9 -0.6 -2.6 -0.9 -3.9 -0.9 -3.8 0 0 -2.4 -0.6 0 0 -2.4 0 -2.4 0.1 -2.4 7.3 -2.4 -1.4 -2.4 -5.2 -2.4 0.5 -1.1 0.3 -1.3 0.4 -1.1 -0.6 -1.3 -0.6 -0.1 0.4 -1.4 6.2 -0.9 3.9 -1.5 -1.8 -0.9 -1.1 -2.4 -7.9 -2.4 1.8 -2.4 -1.8 -2.4 0.1 -2.4 -0.3 -2.4 10.5 -2.4 -9.2 -2.4 -0.4 -2.4 -1.6 -2.4 2.8 -2.4 6.1 -2.4 -6.1 -2.4 -2.9 -2.4 2.4 -2.4 -2.3 -2.4 0.5 -2.4 0.3 -2.4 -0.8 -2.4 1.4 -2.4 -1.3 -1.7 1 -0.7 0.4 -1.7 0.7 -0.7 0.3 -0.2 0.1 -0.9 0.4 -1.3 0.6 -1.1 -0.8 -1.3 -1 -2.4 0.3 -2.4 1 -2.4 0.2 -2.4 -1 -2.4 0.6 -2.4 2.2 -2.4 6.3 -2.4 -11.4 -2.4 4.2 -2.4 4.5 0 -0.1 -2.4 -7.7 0 0.1 -0.9 3 -0.9 3 -0.6 1.9 -1.8 -5.5 -0.6 -1.8 -1.1 0.7 -1.3 0.9 -0.1 0 -2.2 -0.2 -0.1 -0.1 -2.1 -1.1 -0.3 -0.2 -1.1 2.9 -1.3 3.4 -2.4 -6.5 -2.4 1.6 -2.4 -3.1 -2.4 1.1 -2.4 8.9 -2.4 -9.2 -2.4 4.1 -2.4 8.1 -2.4 -10.8 -2.4 0.5 -2.4 -0.8 -2.4 -0.9 -2.4 2.7 -2.4 2.7 -0.1 -0.2 -2.3 -3.7 -0.1 0 -0.7 0.2 -0.7 0.2 -0.9 0.3 -1.5 -1.4 -0.9 -0.8 -2.4 6.8 -2.4 1.5 -2.4 -8.8 -2.4 3.7 -2.4 -4.2 -2.4 5.8 -2.4 4.7 -2.4 -6.7 -2.4 -2.7 -2.4 -1 -2.4 0.5 -2.4 8.5 -2.4 -5.3 -2.4 6.3 -2.4 -9.4 -2.4 7.7 -2.4 -7 -2.4 1.7 -2.4 -0.6 -2.4 -2.2 -2.4 -0.2 -2.4 3.1 -2.4 2.7 -2.4 -2.3 -0.9 1.7 -1.4 2.6 -0.1 0.1 -2 -3.8 -0.4 -0.7 -1.7 -2.4 -0.7 -1 -0.7 0.2 -1.7 0.5 -2.4 2.1 -2.4 0.1 -2.4 -1.4 -1.5 -0.2 -0.9 -0.1 -1.5 0.4 -0.7 0.3 -0.2 0 -0.5 1.2 -1.9 4.1 -0.5 0.6 -1.9 2.1 -2.4 -6.3 -2.4 -2.3 -2.4 4.5 -2.4 -5.4 -2.4 9.5 -0.2 -0.6 -2.2 -6.1 -0.2 -0.1 -0.9 -0.5 -0.9 -0.4 -0.4 -0.2 -2 -1.1 -0.4 -0.2 -2.4 0.7 -2.4 4.8 -2.4 -2.7 -2.4 2.3 -2.4 0.1 -2.4 -5 -2.4 4.8 -2.4 6.7 -2.4 -9 -2.4 -2.8 -2.4 2.2 -2.4 -0.9 -2.4 -1.2 -2.4 4.6 -2.4 -4.1 -2.4 0.9 -2.4 0.9 -2.4 -1.6 -2.4 1.5 -2.4 -2.3 -2.4 2.5 -2.4 0.4 -2.4 -1.8 -2.4 -1.4 -2.4 2.7 -2.4 -3.1 -2.4 0 -2.4 3.5 -1.8 2.7 -0.6 0.8 -0.8 -1.2 -1.6 -2.2 -0.9 -0.9 -1.5 -1.2 -0.2 0.2 -0.8 0.6 -0.6 0.4 -0.8 0.6 0 0.1 -1.2 2.6 -1.2 2.5 -0.8 -2.8 -1.4 -4.6 -0.2 -0.5 -2.4 5.6 -2.4 -4 -2.4 0.3 -2.4 0.4 -2.4 4.9 -2.4 -1.6 -2.4 -6.3 -2.4 0.7 -2.4 8 -2.4 -7.7 -2.4 2.7 -2.4 4.3 -2.4 3.3 -2.4 -8.3 -2.4 9.3 -2.4 -10.2 -2.4 7.7 -2.4 -9.7 -2.4 1.5 -2.4 0.8 -2.4 1.1 -2.4 7.1 -2.4 -10.2 -2.4 3.9 -2.4 -2.3 -2.4 -1.6 -2.4 12.7 -2.1 -5.3 -0.3 -0.6 -2.1 -5.8 -0.3 -0.7 -0.4 0.5 -0.7 0.8 -1.3 1.4 -1.1 -1 -1.3 -1.1 -2.4 2.3 -2.1 -0.6 -0.3 -0.1 -2.1 -1.5 -0.2 -0.2 -0.9 3.1 -1.1 3.9 -0.4 1.6 -2 -5.5 -0.4 -1.2 -2.4 1.9 -2.4 -4.7 -2.4 2.5 -2.4 -1.9 -2.4 2.7 -2.4 -2.6 -2.4 4.9 -2.4 -5 -2.4 10.3 -2.4 -7.9 -2.4 -1.9 -2.4 3.7 -2.4 -2.8 -2.4 -2.2 -2.4 3 -2.4 -2.8 -2.4 -0.3 -2.4 6.6 -2.4 0.1 -2.4 -3.3 -2.4 6.2 -2.4 -8.9 -2.4 7.2 -2.4 -5.3 -2.4 -0.1 -2.4 -0.6 -2.4 1.7 -2.4 -2 -2.4 2.3 -2.4 -3.6 -2.4 5.3 -2.4 5.6 -2.4 -5 -2.4 -2.5 -2.4 -0.1 -2.4 -0.8 -2.4 8 -2.4 0.2 -2.4 -7.6 -2.4 -2.7 -2.4 0.5 -2.4 6.2 -2.4 2.1 -2.4 -7.2 -2.4 5.8 -2.4 -5 -2.4 -0.1 -2.4 -1.7 -0.2 0.7 -2.2 9.9 -0.2 -0.7 -0.9 -3.9 -0.9 -3.9 -0.4 -2 -2 2 -0.4 0.4 -2.4 -3.4 -2 2.7 -0.4 0.6 -2 0 -0.4 0.1 -1 -0.4 -1.4 -0.5 0 -0.1 -2.4 4.1 0 0.1 -2.4 -3.8 -2.4 8.4 -2.4 -6 -2.4 -1.8 -2.4 -2.5 -2.4 -0.1 -2.4 0.4 -2.4 0.1 -2.4 0.3 -2.4 -0.7 -2.4 5.8 -2.4 -6.9 -2.4 1.4 -2.4 5.8 -2.4 -2.8 -2.4 -2.1 -2.4 7.2 -2.4 -0.2 -2.4 -7.9 -2.4 7.8 -2.4 -2 -2.4 -7.1 -2.4 2.9 -2.4 3.7 -2.4 -6.4 -2.4 1.9 -2.4 -1.9 -2.4 -0.2 -2.4 0.5 -2.4 2.4 -2.4 6.7 -2.4 -2.9 -2.4 6.2 -2.4 -10.9 -2.4 0.1 -2.4 -1.3 -2.4 2 -2.4 0 -2.4 -0.2 -2.4 1.4 -2.4 -2.8 -2.4 -0.9 -2.4 9.6 -2.4 -7.5 -2.4 -0.6 -2.4 -1.6 -2.4 1.3 -2.4 3.8 -2.4 5.9 -2.4 -8.9 -2.4 -1.2 -2.4 -0.6 -2.4 -0.7 -2.4 5.2 -2.4 3.3 -2.4 -3.6 -2.4 -2.6 -2.4 5.5 -2.4 -5.3 -2.4 2.9 -2.4 -3.6 -2.4 -1.1 -2.4 8.4 -2.4 -7.8 -2.4 -0.1 -2.4 4.6 -2.1 -2 -0.3 -0.3 -2.1 2.1 -0.3 0.3 -1.1 -1.6 -1.3 -1.9 -0.1 -0.1 -2.3 -1.2 -0.1 0 -2.3 1.5 -2.4 1.1 -2.4 0.1 -2.4 -1.4 -2.4 -1.8 -2.4 7.8 -2.4 -8.5 -2.4 9.5 -2.4 -9.5 -2.4 3.5 -2.4 -1.5 -2.4 0.2 -2.4 -1.6 -2.4 5.7 -2.4 -2.8 -2.4 -0.1 -2.4 -0.7 -2.4 -1.9 -2.4 2.2 -2.4 -2.5 -2.4 3 -2.4 -2.6 -2.4 -0.1 -2.4 4 -2.4 5 -2.4 -9.7 -2.4 3.1 -2.4 -3.2 -2.4 2.3 -2.4 -0.8 -2.4 -1.2 -2.4 1 -2 3 -0.4 0.6 -2 1.4 -0.4 0.3 -0.7 -1.9 -1.1 -2.9 -0.6 -1.6 -1.8 6.1 -0.6 2.1 -2.4 -7.8 -2.4 -0.6 -2.4 3.6 -2.4 -0.8 -2.4 -0.2 -2.4 -2.4 -2.4 1.2 -1.8 0.9 -0.6 0.3 -1.8 -1 -0.6 -0.4 -0.5 -0.1 -1.1 -0.2 -0.8 -0.2 -0.5 0.4 -1.1 0.9 -0.2 0.2 -0.6 0.5 -0.3 0.8 -1.5 4.1 -0.6 1.6 -0.3 -1 -0.9 -3.1 -1.2 -4.2 -1.2 0.3 -1.2 0.3 -2.4 -0.9 -2.4 1.4 -2.4 8 -2.4 -9.3 -2.4 0.5 -2.4 1.4 -2.4 1 -2.4 -3.5 -2.4 7.7 -2.4 -5.8 -2.4 -1.2 -2.4 1.9 -0.4 0.2 -2 0.5 -0.4 0 -2 0 -0.4 0 -2 0.4 -0.4 -0.5 -2 -2.6 -0.4 0.1 -2 0.7 -2.4 -0.2 -2.4 5.3 -2.4 -5.5Z" fill="#afd8f8"/>
<path d="M2078 760.4l2.4 5.5 2.4 -5.3 2.4 0.2 2 -0.7 0.4 -0.1 2 2.6 0.4 0.5 2 -0.4 0.4 0 2 0 0.4 0 2 -0.5 0.4 -0.2 2.4 -1.9 2.4 1.2 2.4 5.8 2.4 -7.7 2.4 3.5 2.4 -1 2.4 -1.4 2.4 -0.5 2.4 9.3 2.4 -8 2.4 -1.4 2.4 0.9 1.2 -0.3 1.2 -0.3 1.2 4.2 0.9 3.1 0.3 1 0.6 -1.6 1.5 -4.1 0.3 -0.8 0.6 -0.5 0.2 -0.2 1.1 -0.9 0.5 -0.4 0.8 0.2 1.1 0.2 0.5 0.1 0.6 0.4 1.8 1 0.6 -0.3 1.8 -0.9 2.4 -1.2 2.4 2.4 2.4 0.2 2.4 0.8 2.4 -3.6 2.4 0.6 2.4 7.8 0.6 -2.1 1.8 -6.1 0.6 1.6 1.1 2.9 0.7 1.9 0.4 -0.3 2 -1.4 0.4 -0.6 2 -3 2.4 -1 2.4 1.2 2.4 0.8 2.4 -2.3 2.4 3.2 2.4 -3.1 2.4 9.7 2.4 -5 2.4 -4 2.4 0.1 2.4 2.6 2.4 -3 2.4 2.5 2.4 -2.2 2.4 1.9 2.4 0.7 2.4 0.1 2.4 2.8 2.4 -5.7 2.4 1.6 2.4 -0.2 2.4 1.5 2.4 -3.5 2.4 9.5 2.4 -9.5 2.4 8.5 2.4 -7.8 2.4 1.8 2.4 1.4 2.4 -0.1 2.4 -1.1 2.3 -1.5 0.1 0 2.3 1.2 0.1 0.1 1.3 1.9 1.1 1.6 0.3 -0.3 2.1 -2.1 0.3 0.3 2.1 2 2.4 -4.6 2.4 0.1 2.4 7.8 2.4 -8.4 2.4 1.1 2.4 3.6 2.4 -2.9 2.4 5.3 2.4 -5.5 2.4 2.6 2.4 3.6 2.4 -3.3 2.4 -5.2 2.4 0.7 2.4 0.6 2.4 1.2 2.4 8.9 2.4 -5.9 2.4 -3.8 2.4 -1.3 2.4 1.6 2.4 0.6 2.4 7.5 2.4 -9.6 2.4 0.9 2.4 2.8 2.4 -1.4 2.4 0.2 2.4 0 2.4 -2 2.4 1.3 2.4 -0.1 2.4 10.9 2.4 -6.2 2.4 2.9 2.4 -6.7 2.4 -2.4 2.4 -0.5 2.4 0.2 2.4 1.9 2.4 -1.9 2.4 6.4 2.4 -3.7 2.4 -2.9 2.4 7.1 2.4 2 2.4 -7.8 2.4 7.9 2.4 0.2 2.4 -7.2 2.4 2.1 2.4 2.8 2.4 -5.8 2.4 -1.4 2.4 6.9 2.4 -5.8 2.4 0.7 2.4 -0.3 2.4 -0.1 2.4 -0.4 2.4 0.1 2.4 2.5 2.4 1.8 2.4 6 2.4 -8.4 2.4 3.8 0 -0.1 2.4 -4.1 0 0.1 1.4 0.5 1 0.4 0.4 -0.1 2 0 0.4 -0.6 2 -2.7 2.4 3.4 0.4 -0.4 2 -2 0.4 2 0.9 3.9 0.9 3.9 0.2 0.7 2.2 -9.9 0.2 -0.7 2.4 1.7 2.4 0.1 2.4 5 2.4 -5.8 2.4 7.2 2.4 -2.1 2.4 -6.2 2.4 -0.5 2.4 2.7 2.4 7.6 2.4 -0.2 2.4 -8 2.4 0.8 2.4 0.1 2.4 2.5 2.4 5 2.4 -5.6 2.4 -5.3 2.4 3.6 2.4 -2.3 2.4 2 2.4 -1.7 2.4 0.6 2.4 0.1 2.4 5.3 2.4 -7.2 2.4 8.9 2.4 -6.2 2.4 3.3 2.4 -0.1 2.4 -6.6 2.4 0.3 2.4 2.8 2.4 -3 2.4 2.2 2.4 2.8 2.4 -3.7 2.4 1.9 2.4 7.9 2.4 -10.3 2.4 5 2.4 -4.9 2.4 2.6 2.4 -2.7 2.4 1.9 2.4 -2.5 2.4 4.7 2.4 -1.9 0.4 1.2 2 5.5 0.4 -1.6 1.1 -3.9 0.9 -3.1 0.2 0.2 2.1 1.5 0.3 0.1 2.1 0.6 2.4 -2.3 1.3 1.1 1.1 1 1.3 -1.4 0.7 -0.8 0.4 -0.5 0.3 0.7 2.1 5.8 0.3 0.6 2.1 5.3 2.4 -12.7 2.4 1.6 2.4 2.3 2.4 -3.9 2.4 10.2 2.4 -7.1 2.4 -1.1 2.4 -0.8 2.4 -1.5 2.4 9.7 2.4 -7.7 2.4 10.2 2.4 -9.3 2.4 8.3 2.4 -3.3 2.4 -4.3 2.4 -2.7 2.4 7.7 2.4 -8 2.4 -0.7 2.4 6.3 2.4 1.6 2.4 -4.9 2.4 -0.4 2.4 -0.3 2.4 4 2.4 -5.6 0.2 0.5 1.4 4.6 0.8 2.8 1.2 -2.5 1.2 -2.6 0 -0.1 0.8 -0.6 0.6 -0.4 0.8 -0.6 0.2 -0.2 1.5 1.2 0.9 0.9 1.6 2.2 0.8 1.2 0.6 -0.8 1.8 -2.7 2.4 -3.5 2.4 0 2.4 3.1 2.4 -2.7 2.4 1.4 2.4 1.8 2.4 -0.4 2.4 -2.5 2.4 2.3 2.4 -1.5 2.4 1.6 2.4 -0.9 2.4 -0.9 2.4 4.1 2.4 -4.6 2.4 1.2 2.4 0.9 2.4 -2.2 2.4 2.8 2.4 9 2.4 -6.7 2.4 -4.8 2.4 5 2.4 -0.1 2.4 -2.3 2.4 2.7 2.4 -4.8 2.4 -0.7 0.4 0.2 2 1.1 0.4 0.2 0.9 0.4 0.9 0.5 0.2 0.1 2.2 6.1 0.2 0.6 2.4 -9.5 2.4 5.4 2.4 -4.5 2.4 2.3 2.4 6.3 1.9 -2.1 0.5 -0.6 1.9 -4.1 0.5 -1.2 0.2 0 0.7 -0.3 1.5 -0.4 0.9 0.1 1.5 0.2 2.4 1.4 2.4 -0.1 2.4 -2.1 1.7 -0.5 0.7 -0.2 0.7 1 1.7 2.4 0.4 0.7 2 3.8 0.1 -0.1 1.4 -2.6 0.9 -1.7 2.4 2.3 2.4 -2.7 2.4 -3.1 2.4 0.2 2.4 2.2 2.4 0.6 2.4 -1.7 2.4 7 2.4 -7.7 2.4 9.4 2.4 -6.3 2.4 5.3 2.4 -8.5 2.4 -0.5 2.4 1 2.4 2.7 2.4 6.7 2.4 -4.7 2.4 -5.8 2.4 4.2 2.4 -3.7 2.4 8.8 2.4 -1.5 2.4 -6.8 0.9 0.8 1.5 1.4 0.9 -0.3 0.7 -0.2 0.7 -0.2 0.1 0 2.3 3.7 0.1 0.2 2.4 -2.7 2.4 -2.7 2.4 0.9 2.4 0.8 2.4 -0.5 2.4 10.8 2.4 -8.1 2.4 -4.1 2.4 9.2 2.4 -8.9 2.4 -1.1 2.4 3.1 2.4 -1.6 2.4 6.5 1.3 -3.4 1.1 -2.9 0.3 0.2 2.1 1.1 0.1 0.1 2.2 0.2 0.1 0 1.3 -0.9 1.1 -0.7 0.6 1.8 1.8 5.5 0.6 -1.9 0.9 -3 0.9 -3 0 -0.1 2.4 7.7 0 0.1 2.4 -4.5 2.4 -4.2 2.4 11.4 2.4 -6.3 2.4 -2.2 2.4 -0.6 2.4 1 2.4 -0.2 2.4 -1 2.4 -0.3 1.3 1 1.1 0.8 1.3 -0.6 0.9 -0.4 0.2 -0.1 0.7 -0.3 1.7 -0.7 0.7 -0.4 1.7 -1 2.4 1.3 2.4 -1.4 2.4 0.8 2.4 -0.3 2.4 -0.5 2.4 2.3 2.4 -2.4 2.4 2.9 2.4 6.1 2.4 -6.1 2.4 -2.8 2.4 1.6 2.4 0.4 2.4 9.2 2.4 -10.5 2.4 0.3 2.4 -0.1 2.4 1.8 2.4 -1.8 2.4 7.9 0.9 1.1 1.5 1.8 0.9 -3.9 1.4 -6.2 0.1 -0.4 1.3 0.6 1.1 0.6 1.3 -0.4 1.1 -0.3 2.4 -0.5 2.4 5.2 2.4 1.4 2.4 -7.3 2.4 -0.1 2.4 0 0 0 2.4 0.6 0 0 0.9 3.8 0.9 3.9 0.6 2.6 1.2 -3.9 0.6 -2 0.6 -2 1.2 -0.9 0.9 -0.6 0.3 -0.2 0.6 0 1.8 0 0.6 0 1.8 0 2.4 0.9 1.4 -0.7 1 -0.5 1.4 0.5 1 0.4 0.4 -0.4 1.4 -1.4 0.6 -0.6 1.8 1.8 0.6 0.7 2.4 4.2 1.8 -4.5 0.6 -1.5 1.8 1.9 0.6 0.7 0.3 -0.2 0.9 -0.5 1.2 -0.8 1.2 0.4 1.2 0.3 2.4 -0.7 2.4 1.1 2.4 0.9 2.4 -3" fill="none" stroke="#dcc26a" stroke-opacity="0.45" stroke-width="1"/>
<path d="M2162 735.3l0.6 -4.3 1.1 0 0.7 0 0.4 0 2 16.7 0 0.4 -2 -15.1 -0.4 0 -0.7 0 -1.1 0 -0.6 3.8Z" fill="#edc240"/>
<path d="M2246 751.2l2.3 -10.2 0.1 0 1.3 0 1.1 0 0.3 0 2.1 11.8 0 1.8 -2.1 -0.3 -0.3 0 -1.1 -2.5 -1.3 -3 -0.1 0.1 -2.3 2.7Z" fill="#edc240"/>
<path d="M2636.3 674l0.8 0 1.2 0 1.2 0 0 0 0 67.3 0 7.3 -1.2 2 -1.2 2 -0.8 0.5Z" fill="#edc240"/>
<path d="M2985.1 704l0 0 0.9 0 0.9 0 0.6 13 1.2 24.4 0.6 0.4 0.6 -11.7 1.2 -22.1 0.9 0 0.3 0 0.6 0 1.8 33.1 0 0.5 -1.8 -31.6 -0.6 0 -0.3 0 -0.9 0 -1.2 21.1 -0.6 11.2 -0.6 -0.4 -1.2 -23.4 -0.6 -12.5 -0.9 0 -0.9 0 0 0Z" fill="#edc240"/>
<path d="M3042.4 254.7l1.7 0 0.7 0 2.1 0 0.3 123.9 1.1 373.3 1.4 -4.1 2.4 -4.7 2.4 13.2 2.4 -7.4 2.5 -1.6 2.4 8.5 2.4 -0.8 2.4 -0.9 2.5 1.7 1.8 -0.7 0.6 -7.7 1.8 -23.6 0.6 0 0.6 0 1.2 0 0.6 6.9 1.8 23.5 0.7 1.5 0 7.8 -0.7 1.5 -1.8 4.3 -0.6 -1.9 -1.2 -3.8 -0.6 -1.9 -0.6 0.3 -1.8 0.7 -0.6 -0.4 -1.8 -1.5 -2.5 -1.2 -2.4 1.2 -2.4 9 -2.4 -10.6 -2.5 2.8 -2.4 -2 -2.4 2.8 -2.4 -0.1 -1.4 4.2 -1.1 3.2 -0.3 -1.1 -2.1 -6.2 -0.7 -0.1 -1.7 -0.2Z" fill="#afd8f8"/>
<path d="M3042.4 762.5l1.7 0.2 0.7 0.1 2.1 6.2 0.3 1.1 1.1 -3.2 1.4 -4.2 2.4 0.1 2.4 -2.8 2.4 2 2.5 -2.8 2.4 10.6 2.4 -9 2.4 -1.2 2.5 1.2 1.8 1.5 0.6 0.4 1.8 -0.7 0.6 -0.3 0.6 1.9 1.2 3.8 0.6 1.9 1.8 -4.3 0.7 -1.5" fill="none" stroke="#dcc26a" stroke-opacity="0.45" stroke-width="1"/>
<path d="M3042.4 243.5l1.7 0 0.7 0 2.1 0 0.3 126.7 0 8.4 -0.3 -123.9 -2.1 0 -0.7 0 -1.7 0Z" fill="#edc240"/>
<path d="M3071.5 743.5l1.8 -35.9 0.6 0 0.6 0 1.2 0 0.6 11.1 0 12 -0.6 -6.9 -1.2 0 -0.6 0 -0.6 0 -1.8 23.6Z" fill="#edc240"/>
<path d="M3088.9 267.8l1.8 0 0.6 0 2.2 0 0.2 68.7 1.2 413.9 1.2 -1.3 2.4 2.5 2.4 1 2.4 -2.6 2.4 3.4 2.4 0.5 2.4 -1.4 2.4 -1.1 2.4 -3.2 2.4 6.9 2.4 -3.2 2.4 2.6 2.4 -0.9 2.4 -11.7 1.4 6.6 1 -9.6 1.4 -20.2 1 0 0.3 0 1.3 0 0.8 11.1 1.6 19.9 0.8 -1.4 2.4 6.5 2.4 -1.7 2.4 1.6 2.4 -0.5 2.4 -1 2.4 -9.1 2.4 6.8 2.4 -3.9 2.4 4.5 2.4 1 2.4 -0.7 2.4 -0.9 2.4 0.7 2.4 2.1 2.4 -1.9 2.2 2.7 0.2 -0.5 2.2 -9 0.2 0 0.7 0 0.9 0 0.8 1.8 1.6 4.7 0.8 0.4 2.4 2.7 2.4 -0.3 2.4 -2.3 2.4 -0.1 2.4 -0.8 2.4 3.4 2.4 -6 2.4 2.4 2.4 1.1 2.4 -2.8 2.4 1.3 0.5 0.1 1.9 -17.5 0.5 -5.1 0.7 0 0.7 0 0.5 5 1.9 19.3 0.5 -0.4 2.4 -4.9 2.4 5 2.4 1.7 2.4 0.1 2.4 -1.8 0.2 0.3 2.2 -22.6 0.2 -2.7 0.9 0 0.9 0 0.4 3.6 2 21.4 0.4 0.2 2.4 -0.6 2.4 2.3 2.4 -2.6 2.4 1.4 2.4 1.2 2.4 -7.9 2.4 9.1 2.4 -7.6 2.4 6.1 2.4 -5.4 2.4 5.7 2.3 -1.1 0.1 -1 2.3 -42.8 0.1 0 1.3 0 0.4 0 0.6 0 0.4 0 1.4 16 0.6 0 0.4 0 0.4 0 1.4 0 0.2 3 2.2 26.2 0.2 0.1 2.4 -1.4 2.4 -1.1 2.4 -2.5 2.4 -2 2.4 6.4 2.4 -0.8 2.4 -1.8 2.4 -7.1 2.4 7.2 2.4 0.3 2.4 -0.8 2.4 0.8 2.4 2.5 2.4 -8.8 2.4 7.7 2.4 -2.2 2.4 0.4 2.4 -1.3 2.4 4.4 2.4 -3.3 2.4 3 2.4 0.1 2.4 -0.9 2.4 -0.7 2.4 -1.9 2.4 3 2.4 -6.5 2.4 6.3 2.4 -1.3 2.4 0.7 2.4 -2.2 2.4 -0.3 2.4 0.9 2.4 2.1 2.4 -11.1 2.4 10.2 2.4 -2.4 2.4 1.6 2.4 -6.5 2.4 7.4 2.4 -0.7 2.4 -3 2.4 2.3 2.4 2.3 2.4 -8.5 2.4 6.5 2.4 -6.7 2.4 6.6 2.4 0.3 2.4 0.9 2.4 -9.6 2.4 10.9 2.4 -3.9 2.4 3.2 1.3 -1.6 1.1 -28.2 1.3 -31.2 1.1 0 0 0 1.1 0 1.3 32.2 1.1 28 1.3 1.3 2.4 -1.9 2.4 -0.9 2.4 -0.7 2.4 0.5 2.4 1.2 2.4 1.4 2.4 -1 2.4 -2.5 2.4 -3.7 2.4 0 2.4 -2.6 2.4 10.2 2.4 -2.8 2.4 1.4 2.4 -0.2 2.4 -4.1 2.4 -5.3 2.4 7.4 1.1 0.7 1.3 -7.2 1.1 -6.8 0.9 0 0.4 0 0.5 0 1.9 9.4 0.5 3 1.9 1.6 2.4 0 2.4 3.4 2.4 -3.4 2.4 3.1 2.4 -0.6 2.4 -1.1 2.4 0.5 2.4 -6.9 2.4 8.9 2.4 -3 2.4 -2.7 2.4 2.6 2.4 1.7 2.4 -1 2.4 -2.7 2.4 4.2 2.4 -3 2.4 -1 2.4 -5.9 2.4 9.2 2.4 2 2.4 -1.7 2.4 0 2.4 -1.4 2.4 -0.9 2.4 -2.5 2.4 -2.5 2.4 4.5 2.4 1.3 2.4 -8 2.4 10.4 2.4 0.6 2.4 -3.5 2.4 2.8 2.4 -3.9 2.4 3.5 2.4 -2.8 2.4 3.5 2.4 0.7 2.4 -1.8 2.4 -1.7 2.4 1.1 2.4 0.8 2.4 -1 1.9 -5.8 0.5 -4.3 1.9 -12.3 0.5 0 0.2 0 0.7 0 1.5 14.1 0.9 8.2 1.5 -1.3 1.4 0.9 1 -39.6 0.4 -18.3 2 0 0.4 0 2 0 0.4 0 1.4 54.9 0.6 1 2.4 1.1 2.4 2.7 2.4 -2.3 2.4 -1.1 2.4 0.7 2.4 1.6 2.4 -6.1 2.4 3.9 2.4 2.4 2.4 0.9 2.4 -8.6 2.4 9.2 0.7 -0.4 1.7 -7.8 0.7 -3.1 0.7 0 0.7 0 0.3 1.1 2.1 6.6 0.2 -0.3 2.4 1.3 2.4 -5.8 2.4 4.1 2.4 0.6 2.4 -0.2 2.4 3 2.4 -1.6 2.4 -1.2 1.3 -2.5 1.1 -2.3 1.3 4.2 1.1 0 0.3 0 1.4 0 0.7 0.3 1.7 1.5 0.7 0.5 2.4 0.3 2.4 0.8 0.9 0.2 1.4 -71.6 0.1 0 2 0 0.4 0 1.7 0 0.7 38 0.7 33.5 1.7 -1.6 2.4 1.7 2.4 -1.5 2.4 1.2 2.4 -0.4 2.4 -2.4 2.4 1.5 2.4 -1.6 2.4 3.8 2.4 -6.7 2.4 -4.2 2.4 8.2 2.4 0.6 1.8 -0.9 0.6 -31.3 0.8 -37.9 1.6 0 0.8 0 1.6 0 0.8 0 1.4 68.7 0.2 0 2.4 -1 2.4 3.3 2.4 -4.2 2.4 1.8 1.4 0 1 -13.6 1.4 -18.3 0.9 0 0.1 0 0.8 0 1.6 19.9 0.8 10.9 0.6 1.1 1 -11.3 1.4 -17.6 0.9 0 0.1 0 0.8 0 1.6 18.2 0.8 10.8 1.6 4.4 2.4 -8.1 2.4 7.1 2.4 0.4 2.4 0.6 2.4 0.2 0.3 -1.3 2.1 -27.5 0.3 -2.5 0.9 0 0.9 0 0.3 3.7 2.1 24.9 0.3 0 2.4 -0.2 2.4 -6.3 2.4 6.2 2.4 2.3 2.4 -0.1 2.4 0.6 2.4 -1.5 2.4 -4.2 2.4 5.3 2.4 -0.3 1.8 -0.1 0.6 -9.3 1.8 -27.6 0.6 0 0.3 0 0.9 0 1.2 17.9 1.2 18.1 1.2 0.4 2.4 -1 2.4 0.8 2.4 -0.3 2.4 -7 2.4 2.4 2.4 4.2 2.4 -2.4 0 10 -2.4 10.9 -2.4 -8.3 -2.4 -0.8 -2.4 -2.3 -2.4 5.6 -2.4 -5.5 -2.4 1.5 -1.2 0.3 -1.2 0.4 -1.2 2.3 -0.9 1.7 -0.3 0.6 -0.6 -1.5 -1.8 -4.4 -0.6 -0.1 -1.8 -0.3 -2.4 9.9 -2.4 -7.6 -2.4 -3.3 -2.4 3.3 -2.4 -0.4 -2.4 -2.9 -2.4 0 -2.4 0.1 -2.4 0.8 -2.4 1.4 -0.3 -0.1 -2.1 -0.9 -0.3 0.9 -0.9 2.3 -0.9 2.4 -0.3 0.7 -2.1 2.4 -0.3 0.3 -2.4 -8.1 -2.4 9.2 -2.4 -11.6 -2.4 10.2 -2.4 -3.7 -1.6 1 -0.8 0.5 -1.6 0.4 -0.8 0.2 -0.1 -0.2 -0.9 -2 -1.4 -3 -1 3.4 -0.6 2 -0.8 2.6 -1.6 0.2 -0.8 0.1 -0.1 -0.2 -0.9 -0.8 -1.4 -1.3 -1 0.1 -1.4 0.1 -2.4 -1.5 -2.4 -5.5 -2.4 0.6 -2.4 5.6 -0.2 -0.8 -1.4 -5.3 -0.8 -2.9 -1.6 8.9 -0.8 4.3 -1.6 -6.9 -0.8 -3.2 -0.6 -0.5 -1.8 -1.2 -2.4 0 -2.4 5.4 -2.4 0.2 -2.4 -3.8 -2.4 4.6 -2.4 -6.5 -2.4 2.1 -2.4 5.5 -2.4 -0.4 -2.4 -5 -2.4 3.3 -2.4 -4.8 -1.7 6.8 -0.7 2.6 -0.7 -2.8 -1.7 -6.2 -0.4 1.3 -2 5.7 -0.1 -0.4 -1.4 -4.1 -0.9 -2.4 -2.4 -1.9 -2.4 2.1 -0.7 1.2 -1.7 2.6 -0.7 -1.3 -1.4 -2.5 -0.3 -0.4 -1.1 1.3 -1.3 1.4 -1.1 -1.4 -1.3 -1.6 -2.4 0.8 -2.4 1 -2.4 -3.2 -2.4 2.5 -2.4 3.4 -2.4 -3 -2.4 -0.9 -2.4 -0.6 -0.2 0 -2.1 0 -0.3 -0.2 -0.7 -0.4 -0.7 -0.4 -0.7 -0.4 -1.7 4.9 -0.7 2.2 -2.4 -4 -2.4 0.2 -2.4 -3.1 -2.4 2.8 -2.4 -3.5 -2.4 1.9 -2.4 -0.1 -2.4 0.4 -2.4 10.4 -2.4 -9.1 -2.4 -0.7 -2.4 -0.6 -0.6 0 -1.4 0.1 -0.4 0.1 -2 -1.4 -0.4 -0.3 -2 6.3 -0.4 1.4 -1 -2.8 -1.4 -4.2 -1.5 -0.7 -0.9 -0.5 -1.5 0.6 -0.7 0.2 -0.2 0.1 -0.5 0.3 -1.9 1.3 -0.5 0.9 -1.9 3.6 -2.4 -6.5 -2.4 1.5 -2.4 -0.9 -2.4 1.4 -2.4 3.7 -2.4 -3.2 -2.4 -1.5 -2.4 1.9 -2.4 -2 -2.4 1 -2.4 4.8 -2.4 3.6 -2.4 -7.7 -2.4 -1 -2.4 7.6 -2.4 -8.3 -2.4 -1.7 -2.4 3.5 -2.4 0 -2.4 -0.7 -2.4 -2.4 -2.4 7.3 -2.4 -5.2 -2.4 0.3 -2.4 -1.7 -2.4 2.7 -2.4 0 -2.4 -0.9 -2.4 -1.2 -2.4 1.5 -2.4 -2.8 -2.4 0.2 -2.4 10.9 -2.4 -11.4 -2.4 0.8 -2.4 2.4 -2.4 -3 -2.4 0.2 -2.4 6.8 -2.4 -5.7 -2.4 -0.2 -2.4 0.7 -2.4 -1.4 -2.4 6.3 -1.9 -5.3 -0.5 -1.4 -1.9 9.3 -0.5 2.4 -0.4 -1.6 -0.9 -3.7 -1.1 -4.5 -1.3 0.1 -1.1 0 -2.4 8 -2.4 -7 -2.4 0.4 -2.4 -2 -2.4 -1.5 -2.4 10 -2.4 0.5 -2.4 -8.1 -2.4 -0.4 -2.4 -1.8 -2.4 2.2 -2.4 0.7 -2.4 -2.4 -2.4 2.1 -2.4 0.8 -2.4 -3.4 -2.4 3 -2.4 -0.4 -1.3 0.4 -1.1 0.3 -1.3 3.7 -1.1 3 0 0 -1.1 -0.3 -1.3 -0.3 -1.1 -2.7 -1.3 -3.1 -2.4 8.4 -2.4 -9 -2.4 8.4 -2.4 -0.9 -2.4 -10.7 -2.4 10.1 -2.4 -8.2 -2.4 -1.1 -2.4 3.4 -2.4 -3.6 -2.4 -0.2 -2.4 5 -2.4 -3.1 -2.4 -0.9 -2.4 5.3 -2.4 -4.9 -2.4 6.4 -2.4 0.3 -2.4 -6.7 -2.4 -1.7 -2.4 10.5 -2.4 -9.5 -2.4 -0.6 -2.4 -0.1 -2.4 5.2 -2.4 -5.7 -2.4 3.7 -2.4 -1 -2.4 0.5 -2.4 -0.9 -2.4 1.1 -2.4 -0.7 -2.4 6.8 -2.4 0.6 -2.4 -1.2 -2.4 -7.8 -2.4 0.7 -2.4 8.4 -2.4 -6.6 -2.4 -2.6 -2.4 8.6 -2.4 -4.2 -2.4 5.7 -2.4 -8 -2.4 -2.3 -2.4 -0.3 -2.4 3.4 -2.4 -0.6 -2.4 0.5 -2.4 2.8 -2.4 -4.1 -2.4 9.1 -2.4 -3.1 -2.4 -3.5 -0.2 -0.2 -2.2 -1.8 -0.2 0.5 -1.4 2.6 -0.4 0.8 -0.4 0.6 -0.6 -1.9 -1.4 -4.2 -0.4 -1 -0.6 -0.1 -0.4 0 -1.3 -0.1 -0.1 0 -2.3 2.2 -0.1 -0.1 -2.3 -2.2 -2.4 6.1 -2.4 -4.9 -2.4 2.1 -2.4 -0.9 -2.4 -1.3 -2.4 -0.8 -2.4 0.1 -2.4 5.7 -2.4 -2.8 -2.4 -1.9 -2.4 2.2 -0.4 0.8 -2 4 -0.4 0.4 -0.9 1 -0.9 1 -0.2 0.3 -2.2 -7.4 -0.2 -0.8 -2.4 -1.7 -2.4 1.5 -2.4 3.8 -2.4 -6.7 -2.4 2.3 -0.5 -0.2 -1.9 -1.1 -0.5 0.3 -0.7 0.4 -0.7 0.4 -0.5 0.3 -1.9 -0.8 -0.5 -0.3 -2.4 0.4 -2.4 7.4 -2.4 -7 -2.4 -1.3 -2.4 7 -2.4 -4.5 -2.4 -1.1 -2.4 -1.4 -2.4 0.4 -2.4 -0.7 -2.4 9.9 -0.8 -2.8 -1.6 -6 -0.8 1.7 -0.9 2 -0.7 1.6 -0.2 -0.3 -2.2 -4 -0.2 0.1 -2.2 0.9 -2.4 -2 -2.4 3.4 -2.4 4.6 -2.4 0.3 -2.4 -8.7 -2.4 0.8 -2.4 0.1 -2.4 0.5 -2.4 0.3 -2.4 -2.7 -2.4 7.5 -2.4 -5.2 -2.4 -2.1 -2.4 0 -2.4 1.8 -0.8 1.6 -1.6 3.2 -0.8 -0.7 -1.3 -1.1 -0.3 -0.3 -1 -1.5 -1.4 -2.3 -1 -0.3 -1.4 -0.5 -2.4 0 -2.4 7.8 -2.4 2.9 -2.4 -3.3 -2.4 -6.2 -2.4 6.4 -2.4 2.1 -2.4 0.4 -2.4 -3.2 -2.4 -5.8 -2.4 0.4 -2.4 2.2 -2.4 -1.9 -1.2 -0.7 -1.2 -0.7 -0.2 0.5 -2.2 6.3 -0.6 0.5 -1.8 1.6Z" fill="#afd8f8"/>
<path d="M3088.9 768.8l1.8 -1.6 0.6 -0.5 2.2 -6.3 0.2 -0.5 1.2 0.7 1.2 0.7 2.4 1.9 2.4 -2.2 2.4 -0.4 2.4 5.8 2.4 3.2 2.4 -0.4 2.4 -2.1 2.4 -6.4 2.4 6.2 2.4 3.3 2.4 -2.9 2.4 -7.8 2.4 0 1.4 0.5 1 0.3 1.4 2.3 1 1.5 0.3 0.3 1.3 1.1 0.8 0.7 1.6 -3.2 0.8 -1.6 2.4 -1.8 2.4 0 2.4 2.1 2.4 5.2 2.4 -7.5 2.4 2.7 2.4 -0.3 2.4 -0.5 2.4 -0.1 2.4 -0.8 2.4 8.7 2.4 -0.3 2.4 -4.6 2.4 -3.4 2.4 2 2.2 -0.9 0.2 -0.1 2.2 4 0.2 0.3 0.7 -1.6 0.9 -2 0.8 -1.7 1.6 6 0.8 2.8 2.4 -9.9 2.4 0.7 2.4 -0.4 2.4 1.4 2.4 1.1 2.4 4.5 2.4 -7 2.4 1.3 2.4 7 2.4 -7.4 2.4 -0.4 0.5 0.3 1.9 0.8 0.5 -0.3 0.7 -0.4 0.7 -0.4 0.5 -0.3 1.9 1.1 0.5 0.2 2.4 -2.3 2.4 6.7 2.4 -3.8 2.4 -1.5 2.4 1.7 0.2 0.8 2.2 7.4 0.2 -0.3 0.9 -1 0.9 -1 0.4 -0.4 2 -4 0.4 -0.8 2.4 -2.2 2.4 1.9 2.4 2.8 2.4 -5.7 2.4 -0.1 2.4 0.8 2.4 1.3 2.4 0.9 2.4 -2.1 2.4 4.9 2.4 -6.1 2.3 2.2 0.1 0.1 2.3 -2.2 0.1 0 1.3 0.1 0.4 0 0.6 0.1 0.4 1 1.4 4.2 0.6 1.9 0.4 -0.6 0.4 -0.8 1.4 -2.6 0.2 -0.5 2.2 1.8 0.2 0.2 2.4 3.5 2.4 3.1 2.4 -9.1 2.4 4.1 2.4 -2.8 2.4 -0.5 2.4 0.6 2.4 -3.4 2.4 0.3 2.4 2.3 2.4 8 2.4 -5.7 2.4 4.2 2.4 -8.6 2.4 2.6 2.4 6.6 2.4 -8.4 2.4 -0.7 2.4 7.8 2.4 1.2 2.4 -0.6 2.4 -6.8 2.4 0.7 2.4 -1.1 2.4 0.9 2.4 -0.5 2.4 1 2.4 -3.7 2.4 5.7 2.4 -5.2 2.4 0.1 2.4 0.6 2.4 9.5 2.4 -10.5 2.4 1.7 2.4 6.7 2.4 -0.3 2.4 -6.4 2.4 4.9 2.4 -5.3 2.4 0.9 2.4 3.1 2.4 -5 2.4 0.2 2.4 3.6 2.4 -3.4 2.4 1.1 2.4 8.2 2.4 -10.1 2.4 10.7 2.4 0.9 2.4 -8.4 2.4 9 2.4 -8.4 1.3 3.1 1.1 2.7 1.3 0.3 1.1 0.3 0 0 1.1 -3 1.3 -3.7 1.1 -0.3 1.3 -0.4 2.4 0.4 2.4 -3 2.4 3.4 2.4 -0.8 2.4 -2.1 2.4 2.4 2.4 -0.7 2.4 -2.2 2.4 1.8 2.4 0.4 2.4 8.1 2.4 -0.5 2.4 -10 2.4 1.5 2.4 2 2.4 -0.4 2.4 7 2.4 -8 1.1 0 1.3 -0.1 1.1 4.5 0.9 3.7 0.4 1.6 0.5 -2.4 1.9 -9.3 0.5 1.4 1.9 5.3 2.4 -6.3 2.4 1.4 2.4 -0.7 2.4 0.2 2.4 5.7 2.4 -6.8 2.4 -0.2 2.4 3 2.4 -2.4 2.4 -0.8 2.4 11.4 2.4 -10.9 2.4 -0.2 2.4 2.8 2.4 -1.5 2.4 1.2 2.4 0.9 2.4 0 2.4 -2.7 2.4 1.7 2.4 -0.3 2.4 5.2 2.4 -7.3 2.4 2.4 2.4 0.7 2.4 0 2.4 -3.5 2.4 1.7 2.4 8.3 2.4 -7.6 2.4 1 2.4 7.7 2.4 -3.6 2.4 -4.8 2.4 -1 2.4 2 2.4 -1.9 2.4 1.5 2.4 3.2 2.4 -3.7 2.4 -1.4 2.4 0.9 2.4 -1.5 2.4 6.5 1.9 -3.6 0.5 -0.9 1.9 -1.3 0.5 -0.3 0.2 -0.1 0.7 -0.2 1.5 -0.6 0.9 0.5 1.5 0.7 1.4 4.2 1 2.8 0.4 -1.4 2 -6.3 0.4 0.3 2 1.4 0.4 -0.1 1.4 -0.1 0.6 0 2.4 0.6 2.4 0.7 2.4 9.1 2.4 -10.4 2.4 -0.4 2.4 0.1 2.4 -1.9 2.4 3.5 2.4 -2.8 2.4 3.1 2.4 -0.2 2.4 4 0.7 -2.2 1.7 -4.9 0.7 0.4 0.7 0.4 0.7 0.4 0.3 0.2 2.1 0 0.2 0 2.4 0.6 2.4 0.9 2.4 3 2.4 -3.4 2.4 -2.5 2.4 3.2 2.4 -1 2.4 -0.8 1.3 1.6 1.1 1.4 1.3 -1.4 1.1 -1.3 0.3 0.4 1.4 2.5 0.7 1.3 1.7 -2.6 0.7 -1.2 2.4 -2.1 2.4 1.9 0.9 2.4 1.4 4.1 0.1 0.4 2 -5.7 0.4 -1.3 1.7 6.2 0.7 2.8 0.7 -2.6 1.7 -6.8 2.4 4.8 2.4 -3.3 2.4 5 2.4 0.4 2.4 -5.5 2.4 -2.1 2.4 6.5 2.4 -4.6 2.4 3.8 2.4 -0.2 2.4 -5.4 2.4 0 1.8 1.2 0.6 0.5 0.8 3.2 1.6 6.9 0.8 -4.3 1.6 -8.9 0.8 2.9 1.4 5.3 0.2 0.8 2.4 -5.6 2.4 -0.6 2.4 5.5 2.4 1.5 1.4 -0.1 1 -0.1 1.4 1.3 0.9 0.8 0.1 0.2 0.8 -0.1 1.6 -0.2 0.8 -2.6 0.6 -2 1 -3.4 1.4 3 0.9 2 0.1 0.2 0.8 -0.2 1.6 -0.4 0.8 -0.5 1.6 -1 2.4 3.7 2.4 -10.2 2.4 11.6 2.4 -9.2 2.4 8.1 0.3 -0.3 2.1 -2.4 0.3 -0.7 0.9 -2.4 0.9 -2.3 0.3 -0.9 2.1 0.9 0.3 0.1 2.4 -1.4 2.4 -0.8 2.4 -0.1 2.4 0 2.4 2.9 2.4 0.4 2.4 -3.3 2.4 3.3 2.4 7.6 2.4 -9.9 1.8 0.3 0.6 0.1 1.8 4.4 0.6 1.5 0.3 -0.6 0.9 -1.7 1.2 -2.3 1.2 -0.4 1.2 -0.3 2.4 -1.5 2.4 5.5 2.4 -5.6 2.4 2.3 2.4 0.8 2.4 8.3 2.4 -10.9" fill="none" stroke="#dcc26a" stroke-opacity="0.45" stroke-width="1"/>
<path d="M3088.9 255.1l1.8 0 0.6 0 2.2 0 0.2 70.5 0 10.9 -0.2 -68.7 -2.2 0 -0.6 0 -1.8 0Z" fill="#edc240"/>
<path d="M3129.7 729.5l1.4 -33.5 1 0 0.3 0 1.3 0 0.8 18.6 0 15.2 -0.8 -11.1 -1.3 0 -0.3 0 -1 0 -1.4 20.2Z" fill="#edc240"/>
<path d="M3175.3 752.6l2.2 -25.6 0.2 0 0.7 0 0.9 0 0.8 7.6 0 12.2 -0.8 -1.8 -0.9 0 -0.7 0 -0.2 0 -2.2 9Z" fill="#edc240"/>
<path d="M3230.5 728.8l0.2 -2.8 0.9 0 0.9 0 0.4 3.7 0 0.9 -0.4 -3.6 -0.9 0 -0.9 0 -0.2 2.7Z" fill="#edc240"/>
<path d="M3585.6 693.3l0.4 -26.9 2 0 0.4 0 2 0 0.4 0 0 27.6 -0.4 0 -2 0 -0.4 0 -2 0 -0.4 18.3Z" fill="#edc240"/>
<path d="M3650.3 741l1.3 -5.2 1.1 0 0.3 0 1.4 0 0.7 4.7 0 9.8 -0.7 -0.3 -1.4 0 -0.3 0 -1.1 0 -1.3 -4.2Z" fill="#edc240"/>
<path d="M3703.1 719l0.8 -39 1.6 0 0.8 0 1.6 0 0.8 0 0 2 -0.8 0 -1.6 0 -0.8 0 -1.6 0 -0.8 37.9Z" fill="#edc240"/>
<path d="M2078 830.9l2.4 -0.2 2.4 0.1 2.4 0.1 2.4 -0.1 1.8 -0.5 0.6 -0.4 2 -2.3 0.4 0.5 2.2 2.5 0.2 0.3 2.4 -0.9 2.4 0.1 2.4 0.3 2.4 -0.3 2.4 1 2.4 -0.8 2.4 -0.2 2.4 1.1 2.4 -0.8 2.4 0.4 2.4 -0.3 2.4 0.6 2.4 -0.7 2.4 0.5 2.4 -0.3 2.4 -0.4 2.4 0 2.4 0.3 2.4 0.7 2.4 -0.7 2.4 0 2.4 0.6 2.4 -0.6 2.4 0.4 2.4 -0.6 2.4 0.3 2.4 -0.1 1.5 0.1 0.9 -1 1.7 -2 0.7 0.8 1.9 2.2 0.5 0.4 2.4 -0.9 2.4 0.2 2.4 0.3 2.4 -0.5 2.4 0 2.4 0.7 2.4 -0.8 2.4 0 2.4 1.1 2.4 -0.9 2.4 1 2.4 -1.2 2.4 0.5 2.4 0.4 2.4 0 2.4 0.3 2.4 -0.8 2.4 -0.2 2.4 0.2 2.4 0.3 2.4 -0.3 2.4 0.2 2.4 0.1 2.4 0 2.4 0.1 2.4 -0.4 2.4 0 2.4 0.4 2.4 -0.2 2.4 0 2.4 -0.1 2.4 0.6 2.4 -0.9 2.4 0.7 2.4 -0.4 2.4 -0.4 2.4 0.3 2.4 0.6 2.4 -0.1 2.4 -0.5 2.4 0 2.4 -0.3 2.4 0 2.4 1.1 2.4 -0.3 2.4 -0.1 2.4 -0.4 2.4 0.6 2.4 -0.2 2.4 -0.7 2.4 0.8 2.4 -0.2 2.4 -0.6 2.4 0.4 2.4 0 2.4 0.6 2.4 -1.1 2.4 1.1 2.4 0 2.4 -1 2.4 0.4 2.4 0.5 2.4 0 2.4 -0.8 2.4 0.3 2.4 0.1 2.4 -0.1 2.4 0.1 2.4 -0.3 2.4 0.4 2.4 0.5 2.4 -1.1 2.4 0.9 2.4 0 2.4 -0.4 2.4 0.2 2.4 0.1 2.4 -0.7 2.4 0 2.4 0.2 2.4 0.2 2.4 0.5 2.4 0 2.4 -0.2 2.4 -0.7 2.4 1 2.4 -0.7 2.4 0.6 2.4 0 2.4 -0.6 2.4 -0.1 2.4 -0.3 2.4 0.5 2.4 0.4 2.4 -0.4 2.4 -0.5 2.4 0.4 2.4 0.3 2.4 0.2 2.4 -0.8 2.4 -0.1 2.4 0.1 2.4 0.7 2.4 -0.8 2.4 0.6 2.4 -0.3 2.4 0.5 2.4 -0.7 1.1 0.4 1.3 -1.5 1.3 -1.5 1.1 1.2 1.5 1.8 0.9 0.6 2.4 -0.3 2.4 -0.3 2.4 0.4 2.4 -0.3 2.4 0 2.4 0 2.4 0.1 2.4 -0.5 2.4 0.7 2.4 -0.3 2.4 -0.5 2.4 0.1 2.4 0.1 2.4 0.3 2.4 0.4 2.4 -0.6 2.4 -0.1 2.4 0.5 2.4 -0.6 2.4 -0.2 2.4 0.7 2.4 -0.5 2.4 0.5 2.4 0.2 2.4 0.1 2.4 -0.3 2.4 -0.6 2.4 0.6 2.4 0.2 2.4 -0.3 2.4 -0.5 2.4 0.1 2.4 -0.3 2.4 0.2 2.4 0.9 2.4 -0.9 2.4 0.4 2.4 0.5 2.4 -1 2.4 0.5 2.4 0.2 2.4 -0.4 2.4 0 2.4 0.3 2.4 -0.1 2.4 0.2 2.4 0.2 2.4 -0.9 2.4 1.1 2.4 -0.9 2.3 0.1 2.4 0.2 2.4 -0.5 2.4 0.8 2.4 -0.6 2.4 0.2 2.4 0.1 2.4 -0.2 2.4 -0.1 2.4 0.2 2.4 0.1 2.4 0.3 2.4 -0.5 2.4 -0.1 2.4 0 2.4 0.1 2.4 0.7 2.4 -0.7 2.4 -0.4 2.4 1.2 2.4 -0.5 2.4 0 2.4 -0.3 2.4 -0.2 2.4 0 2.4 -0.2 2.4 1.1 2.4 -0.7 2.4 0.6 2.4 -0.4 2.4 0.4 2.4 -0.6 2.4 0.8 2.4 -1.1 2.4 0.3 2.4 0.6 1.3 -0.7 1.1 -11.5 1.5 -15.2 0.9 9.8 1.7 17.1 0.7 0.2 2.4 -0.1 2.4 0 2.4 -0.2 2.4 0.1 2.4 -0.1 2.4 -0.3 2.4 -0.1 2.4 0.4 2.4 0.4 2.4 -0.5 2.4 0.9 2.4 -0.7 2.4 0 2.4 0.4 2.4 -0.8 2.4 0.3 2.4 0.2 2.4 0.4 2.4 -1 2.4 1.1 2.4 -0.9 2.4 0.1 2.4 0 2.4 0.8 2.4 -0.7 2.4 -0.4 2.4 0.2 2.4 0.1 2.4 0 1.1 -0.3 1.3 -3 1.3 -3.4 1.1 3 1.5 4 0.9 -0.5 2.4 1 2.4 0 2.4 -0.8 2.4 0.5 2.4 -0.2 2.4 0.4 2.4 0.2 2.4 -0.8 2.4 -0.1 2.4 -0.2 2.4 0.8 2.4 -0.9 2.4 0.6 0.2 -0.2 2.2 -7.5 0.4 -1.3 2 7 0.6 1.8 1.8 0.4 2.4 0.1 2.4 -0.6 2.4 0.1 2.4 0.1 2.4 0.2 2.4 0.1 2.4 -0.4 2.4 0.3 2.4 -0.6 2.4 0.6 2.4 -0.4 2.4 0.6 2.4 -0.4 2.4 -0.1 2.4 -0.3 2.4 0.4 2.4 -0.1 2.4 0.8 2.4 -0.2 2.4 -0.1 2.4 -0.6 2.4 0.5 2.4 -0.4 2.4 -0.3 2.4 1.1 2.4 -1.1 2.4 0.2 2.4 0.7 2.4 -0.6 2.4 0.3 2.4 0.3 2.4 0 2.4 -0.8 2.4 -0.1 2.4 0.3 2.4 0.1 2.4 0 2.4 -0.1 2.4 0 2.4 0.2 2.4 0.3 2.3 -0.3 0.1 -0.9 2.4 -17.5 0.1 -0.6 2.3 16.9 0.3 1.8 2.1 0.4 2.4 -0.6 2.4 0.1 2.4 0.8 2.4 -0.8 2.4 0.9 2.4 -0.3 2.4 -0.3 2.4 -0.2 2.4 0.6 2.4 -0.8 2.4 0.9 2.4 0 2.4 -0.5 2.4 0.7 2.4 -0.4 2.4 -0.7 2.4 0 2.4 0.1 2.4 0.2 2.4 0.2 2.4 0.3 2.4 -0.8 2.4 1.1 2.4 0 2.4 -0.9 2.4 0.1 2.4 0.8 2.4 0 2.4 -0.7 2.4 0.2 2.4 -0.5 2.4 0.4 2.4 0.1 2.4 -0.2 2.4 -0.5 2.4 0.7 2.4 -0.7 2.4 0.1 2.4 0.1 2.4 0.9 2.4 -0.8 2.4 0.4 2.4 -0.5 2.4 0.7 2.4 -0.5 2.4 0.7 2.4 -0.1 2.4 -0.8 2.4 0.5 2.4 0.4 2.4 -0.4 2.4 0.4 2.4 -1 2.4 0.4 2.4 -0.1 2.4 0.1 2.4 0.4 2.4 -0.2 2.4 0.1 2.4 -0.2 2.4 -0.1 2.4 -0.4 2.4 0.8 2.4 -0.5 2.4 0.1 2.4 0.6 2.4 -1.1" fill="none" stroke="#cb4b4b" stroke-width="3.6" stroke-linejoin="miter" stroke-miterlimit="3"/>
<path d="M3042.4 808.6l0.6 0 0.6 0 1.2 10.4 1.4 11.6 1 0 2.5 -0.2 2.4 0.1 2.4 -0.2 2.4 -0.1 2.5 0 2.4 0.8 2.4 -0.1 2.4 -0.1 2.5 0.3 2.4 -0.2 0.4 -0.3 2 -3.1 0.6 -0.9 1.8 2.8 0.8 1.2 1.7 -0.2" fill="none" stroke="#cb4b4b" stroke-width="3.6" stroke-linejoin="miter" stroke-miterlimit="3"/>
<path d="M3088.9 808.6l0.6 0 0.6 0 1.2 10.1 1.4 11.9 1 -0.4 2.4 0.5 2.4 -0.6 2.4 0.7 2.4 -0.4 2.4 0 2.4 0.3 2.4 0 2.4 0 2.4 0.1 2.4 -0.3 2.4 0.6 2.4 -0.6 2.4 -0.4 2.4 -0.1 2.4 0.6 0.1 -0.3 2.3 -6.7 0.3 -1 2.1 6.4 0.5 1.4 1.9 0.6 2.4 -0.9 2.4 0.8 2.4 0.2 2.4 -0.9 2.4 0.7 2.4 0 2.4 -0.9 2.4 0.1 2.4 0.2 2.4 0.1 2.4 -0.3 2.4 0 2.4 0.3 2.4 0.3 2.4 -0.3 2.4 0.6 2.4 0 2.4 -0.2 2.4 0 2.4 -0.8 2.4 0.3 2.4 0.3 2.4 -0.6 2.4 0.8 2.4 0 2.4 -0.3 2.4 0.2 2.4 -0.5 2.4 0.3 2.4 0.5 2.4 -0.7 2.4 0.4 2.4 -0.4 2.4 0 2.4 -0.2 2.4 0.7 2.4 -0.7 2.4 0.5 2.4 -0.1 2.4 0.1 2.4 -0.1 2.4 -0.4 2.4 0.5 2.4 0.3 2.4 -0.3 2.4 -0.4 2.4 0.9 2.4 -0.2 2.4 -0.7 2.4 0.5 2.4 0.3 2.4 -0.5 2.4 0.4 2.4 -0.3 2.3 -0.1 2.4 0.2 2.4 -0.3 2.4 0 2.4 -0.4 2.4 1 2.4 -1 2.4 0.7 2.4 -0.5 2.4 0.8 2.4 -0.1 2.4 -0.9 2.4 0.4 2.4 -0.3 2.4 0.4 2.4 0.4 2.4 0.2 2.4 -0.5 2.4 0.2 2.4 0.3 2.4 -0.4 2.4 0.1 2.4 -0.4 2.4 0.2 2.4 -0.4 2.4 0 2.4 -0.2 2.4 0.5 2.4 -0.1 2.4 0.4 2.4 -0.6 2.4 0.5 2.4 -0.5 2.4 0.5 2.4 -0.4 2.4 0.3 2.4 0.6 2.4 -0.3 2.4 -0.1 2.4 0 2.4 0.3 2.4 -0.6 2.4 -0.2 2.4 0.1 2.4 0.3 2.4 0.3 2.4 -0.1 2.4 -0.5 2.4 -0.1 2.4 0.8 2.4 -0.7 2.4 0.4 2.4 -0.4 2.4 0.1 2.4 0.2 2.4 -0.2 2.4 0.5 2.4 -0.4 2.2 -0.2 0.2 -0.7 2.4 -10.1 0 0 2.4 10.2 0.2 0.6 2.2 -0.2 2.4 0.9 2.4 -0.7 2.4 0.5 2.4 0.1 2.4 -1 2.4 1 2.4 -0.5 2.4 0 2.4 0.1 2.4 0.6 2.4 -0.8 2.4 0.3 2.4 -0.7 2.4 0.4 2.4 0.4 2.4 -0.5 2.4 -0.3 2.4 1 2.4 0.2 2.4 -0.3 2.4 0.2 2.4 -1 2.4 0.4 2.4 0.5 2.4 -0.5 2.4 0.4 2.4 -0.8 2.4 1 2.4 -0.8 2.4 0 2.4 0.3 2.4 0.1 2.4 -0.7 2.4 0.7 2.4 0.5 2.4 -0.1 2.4 0.1 2.4 -0.2 2.4 -0.8 2.4 0.4 2.4 0.5 2.4 -0.6 2.4 0.3 2.4 -0.2 2.4 0.2 2.4 -0.4 2.4 -0.1 2.4 0.5 2.4 -0.7 2.4 0.7 2.4 -0.3 2.4 -0.3 2.4 0.9 2.4 -0.8 2.4 0.8 2.4 -0.8 2.4 -0.1 2.4 0.1 2.4 0.3 2.4 0.1 2.4 0.5 2.4 -0.8 2.4 -0.2 2.4 -0.1 2.4 0.9 2.4 0.1 2.4 -0.9 2.4 -0.1 2.4 0 2.4 0.3 2.4 0.4 0.2 -0.8 2.2 -9.4 0.4 -2 2 9 0.6 2.7 1.8 -0.2 2.4 0.9 2.4 -0.8 2.4 0.3 2.4 0 2.4 0.5 2.4 0.1 2.4 -0.1 2.4 -0.9 2.4 0.7 2.4 0 2.4 -0.1 2.4 -0.6 2.4 0.5 2.4 0.3 2.3 0.1 2.4 0 2.4 -0.8 2.4 0.9 2.4 -1.1 2.4 0.9 2.4 -0.7 2.4 0.4 2.4 -0.2 2.4 -0.3 2.4 0.4 2.4 -0.2 2.4 0.8 2.4 0.1 2.4 -1 1.8 0 0.6 -2.6 2 -9 0.4 2 2.2 9.6 0.2 0.2 2.4 0.1 2.4 0.4 2.4 0 2.4 0.3 2.4 -0.8 2.4 0.3 2.4 -0.5 2.4 0 2.4 0.9 2.4 -0.8 2.4 0.2 2.4 -0.1 2.4 -0.2 2.4 0 0.6 0.3 1.8 -6.9 0.8 -3 1.6 6.3 1 3.6 1.4 0.6 2.4 -0.1 2.4 -0.4 2.4 0.5 2.4 0 1.5 -0.5 0.9 -1.4 1.7 -2.6 0.7 1.1 1.9 2.5 0.5 0.2 2.4 0.3 2.4 -0.4 2.4 -0.2 2.4 0.3 2.4 -0.2 2.4 0.4 2.4 -0.6 2.4 0.2 2.4 0.7 2.4 -0.2 2.4 -0.6 2.4 0.8 2.4 -0.1 2.4 0.2 2.4 0.1 2.4 -0.8 2.4 0.4 2.4 -0.4 2.4 0.2 2.4 -0.4 2.4 0.6 2.4 -0.3 2.4 -0.3 0.1 0.4 2.3 -2.6 0.3 -0.3 2.1 2.4 0.5 0.6 1.9 -0.3 2.4 0.6 2.4 -0.8 2.4 0.2 2.4 -0.1 2.4 0.4 2.4 -0.5 2.4 0.5" fill="none" stroke="#cb4b4b" stroke-width="3.6" stroke-linejoin="miter" stroke-miterlimit="3"/>
<line x1="2077.8" y1="242.5" x2="2077.8" y2="834.0" stroke="#222" stroke-width="1.9"/>
<line x1="2077" y1="727.2" x2="2085.5" y2="727.2" stroke="#222" stroke-width="2.6"/>
<line x1="2077" y1="619.5" x2="2085.5" y2="619.5" stroke="#222" stroke-width="2.6"/>
<line x1="2077" y1="511.7" x2="2085.5" y2="511.7" stroke="#222" stroke-width="2.6"/>
<line x1="2077" y1="404.0" x2="2085.5" y2="404.0" stroke="#222" stroke-width="2.6"/>
<line x1="2077" y1="296.3" x2="2085.5" y2="296.3" stroke="#222" stroke-width="2.6"/>
<g stroke="#c6c6c6" stroke-width="2" stroke-dasharray="3.4 4.3"><line x1="2080" y1="1450.5" x2="3806" y2="1450.5"/><line x1="2080" y1="1395.4" x2="3806" y2="1395.4"/><line x1="2080" y1="1340.3" x2="3806" y2="1340.3"/><line x1="2080" y1="1285.2" x2="3806" y2="1285.2"/><line x1="2080" y1="1230.1" x2="3806" y2="1230.1"/><line x1="2080" y1="1175.0" x2="3806" y2="1175.0"/><line x1="2080" y1="1119.9" x2="3806" y2="1119.9"/><line x1="2080" y1="1064.8" x2="3806" y2="1064.8"/><line x1="2080" y1="1009.7" x2="3806" y2="1009.7"/><line x1="2080" y1="954.6" x2="3806" y2="954.6"/><line x1="2176.0" y1="914.6" x2="2176.0" y2="1505.6"/><line x1="2483.2" y1="914.6" x2="2483.2" y2="1505.6"/><line x1="2790.3" y1="914.6" x2="2790.3" y2="1505.6"/><line x1="3097.5" y1="914.6" x2="3097.5" y2="1505.6"/><line x1="3404.6" y1="914.6" x2="3404.6" y2="1505.6"/><line x1="3711.8" y1="914.6" x2="3711.8" y2="1505.6"/></g>
<path d="M2078 1505.6l0 -72.9 2.4 5.5 2.4 -5.2 2.4 0.2 2 -0.8 0.4 -0.1 2 2.6 0.4 0.5 2 -0.3 0.4 -0.1 2 0 0.4 0.1 2 -0.6 0.4 -0.1 2.4 -2 2.4 1.2 2.4 5.8 2.4 -7.7 2.4 3.5 2.4 -1 2.4 -1.4 2.4 -0.5 2.4 9.2 2.4 -7.8 2.4 -1.4 2.4 0.9 1.2 -0.4 1.2 -0.3 1.2 4.2 0.9 3.1 0.3 1 0.6 -1.6 1.5 -4.1 0.3 -0.8 0.6 -0.5 0.2 -0.2 1.1 -0.9 0.5 -0.4 0.8 0.2 1.1 0.2 0.5 0.2 0.6 0.3 1.8 1 0.6 -0.3 1.8 -0.9 2.4 -1.2 2.4 2.5 2.4 0.2 2.4 0.7 2.4 -3.5 2.4 0.6 2.4 7.7 0.6 -2.1 1.8 -6 0.6 1.6 1.1 2.8 0.7 1.8 0.4 -0.2 2 -1.4 0.4 -0.6 2 -2.9 2.4 -1.1 2.4 1.3 2.4 0.7 2.4 -2.3 2.4 3.2 2.4 -3.1 2.4 9.6 2.4 -4.9 2.4 -4 2.4 0.1 2.4 2.6 2.4 -2.9 2.4 2.5 2.4 -2.2 2.4 1.8 2.4 0.7 2.4 0.2 2.4 2.7 2.4 -5.7 2.4 1.6 2.4 -0.2 2.4 1.5 2.4 -3.4 2.4 9.3 2.4 -9.4 2.4 8.4 2.4 -7.6 2.4 1.7 2.4 1.4 2.4 -0.1 2.4 -1.1 2.3 -1.5 0.1 0 2.3 1.2 0.1 0.1 1.3 1.9 1.1 1.6 0.3 -0.3 2.1 -2.1 0.3 0.3 2.1 2 2.4 -4.6 2.4 0.1 2.4 7.8 2.4 -8.3 2.4 1 2.4 3.6 2.4 -2.8 2.4 5.2 2.4 -5.5 2.4 2.6 2.4 3.6 2.4 -3.3 2.4 -5.2 2.4 0.8 2.4 0.5 2.4 1.2 2.4 8.8 2.4 -5.8 2.4 -3.8 2.4 -1.3 2.4 1.6 2.4 0.6 2.4 7.4 2.4 -9.4 2.4 0.9 2.4 2.7 2.4 -1.4 2.4 0.2 2.4 0 2.4 -1.9 2.4 1.2 2.4 -0.1 2.4 10.8 2.4 -6.1 2.4 2.9 2.4 -6.7 2.4 -2.4 2.4 -0.5 2.4 0.3 2.4 1.9 2.4 -2 2.4 6.3 2.4 -3.6 2.4 -2.8 2.4 6.9 2.4 2 2.4 -7.7 2.4 7.9 2.4 0.2 2.4 -7.2 2.4 2.1 2.4 2.8 2.4 -5.8 2.4 -1.3 2.4 6.7 2.4 -5.7 2.4 0.8 2.4 -0.3 2.4 -0.2 2.4 -0.4 2.4 0.1 2.4 2.5 2.4 1.8 2.4 5.9 2.4 -8.3 2.4 3.8 0 -0.1 2.4 -4 0 0 1.4 0.5 1 0.4 0.4 0 2 -0.1 0.4 -0.6 2 -2.7 2.4 3.4 0.4 -0.4 2 -1.9 0.4 1.9 0.9 3.9 0.9 3.9 0.2 0.7 2.2 -9.9 0.2 -0.7 2.4 1.7 2.4 0.2 2.4 4.9 2.4 -5.8 2.4 7.1 2.4 -2 2.4 -6.2 2.4 -0.5 2.4 2.8 2.4 7.5 2.4 -0.3 2.4 -7.9 2.4 0.8 2.4 0.2 2.4 2.4 2.4 5 2.4 -5.6 2.4 -5.3 2.4 3.6 2.4 -2.3 2.4 2 2.4 -1.6 2.4 0.5 2.4 0.1 2.4 5.3 2.4 -7.2 2.4 8.8 2.4 -6 2.4 3.1 2.4 0 2.4 -6.6 2.4 0.3 2.4 2.8 2.4 -3 2.4 2.2 2.4 2.8 2.4 -3.6 2.4 1.8 2.4 7.8 2.4 -10.2 2.4 5 2.4 -4.9 2.4 2.6 2.4 -2.7 2.4 1.9 2.4 -2.5 2.4 4.7 2.4 -1.9 0.4 1.2 2 5.4 0.4 -1.5 1.1 -3.9 0.9 -3 0.2 0.1 2.1 1.5 0.3 0.1 2.1 0.6 2.4 -2.2 1.3 1 1.1 1 1.3 -1.4 0.7 -0.8 0.4 -0.5 0.3 0.7 2.1 5.8 0.3 0.6 2.1 5.2 2.4 -12.5 2.4 1.5 2.4 2.3 2.4 -3.8 2.4 10 2.4 -7 2.4 -1.1 2.4 -0.7 2.4 -1.6 2.4 9.7 2.4 -7.7 2.4 10.2 2.4 -9.2 2.4 8.2 2.4 -3.4 2.4 -4.2 2.4 -2.6 2.4 7.5 2.4 -7.9 2.4 -0.7 2.4 6.3 2.4 1.6 2.4 -4.9 2.4 -0.4 2.4 -0.3 2.4 4 2.4 -5.6 0.2 0.5 1.4 4.6 0.8 2.8 1.2 -2.5 1.2 -2.6 0 -0.1 0.8 -0.6 0.6 -0.4 0.8 -0.6 0.2 -0.2 1.5 1.3 0.9 0.8 1.6 2.2 0.8 1.2 0.6 -0.8 1.8 -2.7 2.4 -3.5 2.4 0 2.4 3.1 2.4 -2.7 2.4 1.4 2.4 1.8 2.4 -0.3 2.4 -2.6 2.4 2.3 2.4 -1.4 2.4 1.5 2.4 -0.8 2.4 -0.9 2.4 4 2.4 -4.6 2.4 1.2 2.4 0.9 2.4 -2.1 2.4 2.7 2.4 8.9 2.4 -6.7 2.4 -4.6 2.4 4.9 2.4 -0.1 2.4 -2.3 2.4 2.7 2.4 -4.7 2.4 -0.7 0.4 0.1 2 1.1 0.4 0.2 0.9 0.4 0.9 0.5 0.2 0.1 2.2 6 0.2 0.7 2.4 -9.4 2.4 5.3 2.4 -4.5 2.4 2.3 2.4 6.2 1.9 -2 0.5 -0.6 1.9 -4.1 0.5 -1.2 0.2 0 0.7 -0.2 1.5 -0.5 0.9 0.1 1.5 0.2 2.4 1.4 2.4 -0.1 2.4 -2.1 1.7 -0.4 0.7 -0.2 0.7 0.9 1.7 2.4 0.4 0.7 2 3.8 0.1 -0.1 1.4 -2.6 0.9 -1.6 2.4 2.2 2.4 -2.6 2.4 -3.2 2.4 0.3 2.4 2.1 2.4 0.6 2.4 -1.7 2.4 6.9 2.4 -7.5 2.4 9.3 2.4 -6.3 2.4 5.2 2.4 -8.4 2.4 -0.4 2.4 0.9 2.4 2.7 2.4 6.6 2.4 -4.7 2.4 -5.6 2.4 4.1 2.4 -3.6 2.4 8.7 2.4 -1.5 2.4 -6.8 0.9 0.8 1.5 1.4 0.9 -0.3 0.7 -0.2 0.7 -0.1 0.1 -0.1 2.3 3.7 0.1 0.2 2.4 -2.7 2.4 -2.7 2.4 0.9 2.4 0.8 2.4 -0.4 2.4 10.6 2.4 -8 2.4 -4.1 2.4 9.1 2.4 -8.8 2.4 -1.1 2.4 3.1 2.4 -1.6 2.4 6.4 1.3 -3.3 1.1 -2.8 0.3 0.1 2.1 1.2 0.1 0 2.2 0.2 0.1 0 1.3 -0.8 1.1 -0.8 0.6 1.8 1.8 5.5 0.6 -1.9 0.9 -3 0.9 -3 0 0 2.4 7.6 0 0 2.4 -4.4 2.4 -4.2 2.4 11.3 2.4 -6.2 2.4 -2.2 2.4 -0.6 2.4 1.1 2.4 -0.3 2.4 -0.9 2.4 -0.4 1.3 1 1.1 0.8 1.3 -0.6 0.9 -0.4 0.2 -0.1 0.7 -0.3 1.7 -0.7 0.7 -0.4 1.7 -0.9 2.4 1.3 2.4 -1.4 2.4 0.7 2.4 -0.3 2.4 -0.5 2.4 2.3 2.4 -2.3 2.4 2.8 2.4 6.1 2.4 -6.1 2.4 -2.8 2.4 1.6 2.4 0.4 2.4 9.2 2.4 -10.4 2.4 0.2 2.4 -0.1 2.4 1.8 2.4 -1.8 2.4 7.9 0.9 1 1.5 1.8 0.9 -3.9 1.4 -6 0.1 -0.5 1.3 0.7 1.1 0.5 1.3 -0.3 1.1 -0.4 2.4 -0.5 2.4 5.2 2.4 1.4 2.4 -7.3 2.4 -0.1 2.4 0 0 0 2.4 0.7 0 0 0.9 3.7 0.9 3.8 0.6 2.6 1.2 -3.9 0.6 -1.9 0.6 -2 1.2 -0.8 0.9 -0.7 0.3 -0.2 0.6 0 1.8 0 0.6 0 1.8 0 2.4 0.9 1.4 -0.7 1 -0.4 1.4 0.5 1 0.3 0.4 -0.4 1.4 -1.4 0.6 -0.6 1.8 1.9 0.6 0.6 2.4 4.1 1.8 -4.4 0.6 -1.4 1.8 1.8 0.6 0.7 0.3 -0.2 0.9 -0.5 1.2 -0.7 1.2 0.3 1.2 0.3 2.4 -0.7 2.4 1.1 2.4 0.9 2.4 -3 0 73.1Z" fill="rgba(190,196,150,0.38)"/>
<path d="M3042.4 1505.6l0 -70.8 1.7 0.2 0.7 0.1 2.1 6.2 0.3 1 1.1 -3.1 1.4 -4.1 2.4 0 2.4 -2.8 2.4 2 2.5 -2.7 2.4 10.5 2.4 -9 2.4 -1.2 2.5 1.3 1.8 1.4 0.6 0.4 1.8 -0.7 0.6 -0.3 0.6 1.9 1.2 3.7 0.6 2 1.8 -4.3 0.7 -1.5 0 69.8Z" fill="rgba(190,196,150,0.38)"/>
<path d="M3088.9 1505.6l0 -64.6 1.8 -1.5 0.6 -0.5 2.2 -6.2 0.2 -0.6 1.2 0.7 1.2 0.7 2.4 1.9 2.4 -2.2 2.4 -0.4 2.4 5.8 2.4 3.1 2.4 -0.4 2.4 -2 2.4 -6.3 2.4 6.1 2.4 3.2 2.4 -2.8 2.4 -7.8 2.4 0 1.4 0.5 1 0.4 1.4 2.2 1 1.5 0.3 0.3 1.3 1.1 0.8 0.7 1.6 -3.2 0.8 -1.5 2.4 -1.9 2.4 0 2.4 2.1 2.4 5.2 2.4 -7.4 2.4 2.6 2.4 -0.3 2.4 -0.5 2.4 0 2.4 -0.9 2.4 8.7 2.4 -0.4 2.4 -4.5 2.4 -3.3 2.4 1.9 2.2 -0.9 0.2 -0.1 2.2 4 0.2 0.3 0.7 -1.6 0.9 -2 0.8 -1.7 1.6 6 0.8 2.8 2.4 -9.8 2.4 0.6 2.4 -0.3 2.4 1.3 2.4 1.1 2.4 4.5 2.4 -7 2.4 1.4 2.4 6.9 2.4 -7.3 2.4 -0.5 0.5 0.3 1.9 0.8 0.5 -0.3 0.7 -0.4 0.7 -0.4 0.5 -0.3 1.9 1.1 0.5 0.2 2.4 -2.2 2.4 6.6 2.4 -3.8 2.4 -1.5 2.4 1.7 0.2 0.8 2.2 7.3 0.2 -0.2 0.9 -1 0.9 -1 0.4 -0.4 2 -4 0.4 -0.8 2.4 -2.1 2.4 1.8 2.4 2.7 2.4 -5.5 2.4 -0.2 2.4 0.9 2.4 1.2 2.4 0.9 2.4 -2.1 2.4 4.8 2.4 -5.9 2.3 2.2 0.1 0 2.3 -2.1 0.1 -0.1 1.3 0.1 0.4 0.1 0.6 0 0.4 1 1.4 4.2 0.6 1.9 0.4 -0.6 0.4 -0.8 1.4 -2.6 0.2 -0.5 2.2 1.8 0.2 0.2 2.4 3.5 2.4 3 2.4 -9 2.4 4.1 2.4 -2.8 2.4 -0.5 2.4 0.6 2.4 -3.4 2.4 0.3 2.4 2.3 2.4 8 2.4 -5.7 2.4 4.2 2.4 -8.6 2.4 2.6 2.4 6.6 2.4 -8.3 2.4 -0.7 2.4 7.7 2.4 1.1 2.4 -0.6 2.4 -6.7 2.4 0.7 2.4 -1.1 2.4 0.9 2.4 -0.5 2.4 1 2.4 -3.6 2.4 5.5 2.4 -5 2.4 0 2.4 0.7 2.4 9.4 2.4 -10.5 2.4 1.8 2.4 6.6 2.4 -0.4 2.4 -6.3 2.4 4.9 2.4 -5.2 2.4 0.8 2.4 3.1 2.4 -4.9 2.4 0.1 2.4 3.6 2.4 -3.4 2.4 1.1 2.4 8.2 2.4 -10 2.4 10.6 2.4 0.8 2.4 -8.3 2.4 9 2.4 -8.4 1.3 3.1 1.1 2.6 1.3 0.4 1.1 0.3 0 0 1.1 -3.1 1.3 -3.6 1.1 -0.3 1.3 -0.4 2.4 0.4 2.4 -2.9 2.4 3.3 2.4 -0.8 2.4 -2.1 2.4 2.5 2.4 -0.8 2.4 -2.2 2.4 1.8 2.4 0.4 2.4 8.1 2.4 -0.5 2.4 -10 2.4 1.5 2.4 2.1 2.4 -0.5 2.4 6.9 2.4 -7.9 1.1 0 1.3 -0.1 1.1 4.5 0.9 3.6 0.4 1.6 0.5 -2.4 1.9 -9.1 0.5 1.4 1.9 5.1 2.4 -6.1 2.4 1.4 2.4 -0.8 2.4 0.2 2.4 5.6 2.4 -6.7 2.4 -0.2 2.4 3 2.4 -2.4 2.4 -0.8 2.4 11.3 2.4 -10.8 2.4 -0.2 2.4 2.8 2.4 -1.4 2.4 1.2 2.4 0.8 2.4 0 2.4 -2.6 2.4 1.7 2.4 -0.4 2.4 5.2 2.4 -7.3 2.4 2.4 2.4 0.8 2.4 -0.1 2.4 -3.4 2.4 1.6 2.4 8.3 2.4 -7.6 2.4 1 2.4 7.6 2.4 -3.5 2.4 -4.8 2.4 -0.9 2.4 1.9 2.4 -1.9 2.4 1.5 2.4 3.2 2.4 -3.7 2.4 -1.4 2.4 0.9 2.4 -1.5 2.4 6.4 1.9 -3.5 0.5 -0.9 1.9 -1.2 0.5 -0.3 0.2 -0.1 0.7 -0.3 1.5 -0.5 0.9 0.4 1.5 0.7 1.4 4.2 1 2.7 0.4 -1.4 2 -6.2 0.4 0.3 2 1.4 0.4 0 1.4 -0.1 0.6 -0.1 2.4 0.6 2.4 0.7 2.4 9 2.4 -10.3 2.4 -0.4 2.4 0.1 2.4 -1.8 2.4 3.4 2.4 -2.7 2.4 3 2.4 -0.2 2.4 3.9 0.7 -2.1 1.7 -4.9 0.7 0.5 0.7 0.4 0.7 0.4 0.3 0.1 2.1 0.1 0.2 0 2.4 0.5 2.4 0.9 2.4 3 2.4 -3.3 2.4 -2.6 2.4 3.2 2.4 -1 2.4 -0.8 1.3 1.6 1.1 1.4 1.3 -1.4 1.1 -1.3 0.3 0.5 1.4 2.4 0.7 1.3 1.7 -2.6 0.7 -1.2 2.4 -2.1 2.4 1.9 0.9 2.4 1.4 4 0.1 0.4 2 -5.6 0.4 -1.3 1.7 6.2 0.7 2.7 0.7 -2.6 1.7 -6.7 2.4 4.8 2.4 -3.3 2.4 5 2.4 0.4 2.4 -5.4 2.4 -2.2 2.4 6.5 2.4 -4.5 2.4 3.7 2.4 -0.2 2.4 -5.4 2.4 0 1.8 1.2 0.6 0.5 0.8 3.2 1.6 6.8 0.8 -4.2 1.6 -8.8 0.8 2.8 1.4 5.3 0.2 0.8 2.4 -5.5 2.4 -0.7 2.4 5.5 2.4 1.4 1.4 -0.1 1 -0.1 1.4 1.3 0.9 0.9 0.1 0.1 0.8 -0.1 1.6 -0.2 0.8 -2.6 0.6 -1.9 1 -3.4 1.4 3 0.9 1.9 0.1 0.3 0.8 -0.2 1.6 -0.4 0.8 -0.5 1.6 -1 2.4 3.7 2.4 -10.2 2.4 11.6 2.4 -9.1 2.4 7.9 0.3 -0.3 2.1 -2.3 0.3 -0.7 0.9 -2.4 0.9 -2.3 0.3 -0.8 2.1 0.8 0.3 0.2 2.4 -1.4 2.4 -0.8 2.4 -0.2 2.4 0 2.4 2.9 2.4 0.4 2.4 -3.2 2.4 3.2 2.4 7.5 2.4 -9.7 1.8 0.2 0.6 0.1 1.8 4.4 0.6 1.5 0.3 -0.6 0.9 -1.7 1.2 -2.3 1.2 -0.3 1.2 -0.4 2.4 -1.5 2.4 5.5 2.4 -5.6 2.4 2.3 2.4 0.9 2.4 8.2 2.4 -10.9 0 72.8Z" fill="rgba(190,196,150,0.38)"/>
<path d="M2078 1418.1l2.4 8.6 2.4 -7.5 2.4 7.9 2 -0.3 0.4 -3 2 -14.7 0.4 0 2 0 0.4 0 2 0 0.4 2.1 2 7.8 0.4 -0.6 2.4 -2.8 2.4 3.1 2.4 -0.5 2.4 2.4 2.4 6.2 2.4 -3.1 2.4 -5 2.4 6.5 2.4 -1.2 2.4 -1.9 2.4 -0.5 2.4 -3.6 1.2 2.4 1.2 -2.5 1.2 -4.9 0.9 0 0.3 0 0.6 0 1.5 -7.9 0.3 0 0.6 0 0.2 0 1.1 0 0.5 4.5 0.8 -0.5 1.1 0 0.5 0 0.6 0 1.8 11.6 0.6 4.2 1.8 1 2.4 -1.4 2.4 -7.8 2.4 8.3 2.4 -3.5 2.4 2.8 2.4 1.9 2.4 -3.1 0.6 -0.7 1.8 -12.7 0.6 -3.6 1.1 0 0.7 0 0.4 0 2 14.5 0.4 2.5 2 -2.5 2.4 5.3 2.4 -1.2 2.4 -6.6 2.4 8.4 2.4 -3.1 2.4 3.8 2.4 -9.4 2.4 0.6 2.4 3.2 2.4 5.1 2.4 -3.7 2.4 0.3 2.4 -3 2.4 0.9 2.4 5.3 2.4 -1.5 2.4 -6.3 2.4 7.1 2.4 0.4 2.4 -2.9 2.4 0.8 2.4 3.4 2.4 -0.8 2.4 0 2.4 -0.2 2.4 -2.3 2.4 2.1 2.4 -1.7 2.4 -0.5 2.4 1.2 2.4 -6.6 2.3 5.1 0.1 0.2 2.3 -2.6 0.1 -0.1 1.3 2.9 1.1 2.5 0.3 0 2.1 0.3 0.3 -0.1 2.1 -0.6 2.4 -1.3 2.4 2 2.4 -1.9 2.4 2.5 2.4 -1 2.4 -1.7 2.4 2.4 2.4 -5.7 2.4 3.3 2.4 -1.8 2.4 2.4 2.4 -1.1 2.4 -0.8 2.4 -0.3 2.4 -1.8 2.4 5.7 2.4 -9.3 2.4 7.7 2.4 -3 2.4 -0.1 2.4 4 2.4 -3.6 2.4 2.5 2.4 -8.8 2.4 7.7 2.4 -0.6 2.4 0.8 2.4 0.4 2.4 -1.1 2.4 1.8 2.4 -2.9 2.4 -3.5 2.4 5.2 2.4 -1.3 2.4 0.6 2.4 -1.2 2.4 -6 2.4 9.8 2.4 -0.2 2.4 -1.8 2.4 -1.7 2.4 2.2 2.4 -2.7 2.4 -1.9 2.4 4.6 2.4 -3.3 2.4 4.7 2.4 -1.7 2.4 -2.4 2.4 2.1 2.4 -0.3 2.4 1.6 2.4 -1.1 2.4 0.6 2.4 -1 2.4 0.8 2.4 -2.1 2.4 -5.9 2.4 6.2 2.4 2.2 2.4 -5.3 2.4 4.4 2.4 -7 2.4 6 2.4 1.6 2.4 -2.7 0 0.1 2.4 -14.4 0 -0.3 1.4 0 1 0 0.4 0 2 14.9 0.4 2.7 2 -3.1 2.4 2.9 0.4 -0.2 2 -31.5 0.4 -6.7 0.9 0 0.9 0 0.2 2.2 2.2 33.1 0.2 0.3 2.4 2.2 2.4 1.1 2.4 -2.6 2.4 -1.7 2.4 1.2 2.4 0.5 2.4 1.3 2.4 0.1 2.4 2 2.4 -11.8 2.4 8.3 2.4 1.1 2.4 -0.1 2.4 -0.8 2.4 -3 2.4 2.3 2.4 -6.4 2.4 7.3 2.4 3.7 2.4 -0.1 2.4 -3.3 2.4 -0.2 2.4 0.3 2.4 0.9 2.4 -0.9 2.4 1.8 2.4 -1.6 2.4 0.5 2.4 -4 2.4 5.3 2.4 -6.8 2.4 7.9 2.4 -2.7 2.4 3.5 2.4 -4.4 2.4 4.1 2.4 -2.7 2.4 -0.3 2.4 0.3 2.4 3 2.4 -3.4 2.4 -0.6 2.4 -2.5 2.4 4.5 2.4 -1.6 2.4 1.7 2.4 -1.9 2.4 0.1 0.4 -0.2 2 -21.8 0.4 -4.7 1.1 0 0.9 0 0.2 0 2.1 19.4 0.3 3 2.1 6.7 2.4 -0.8 1.3 -3.7 1.1 -13.9 1.3 -11.5 0.7 0 0.4 0 0.3 0 2.1 24.8 0.3 2.8 2.1 -1 2.4 0.2 2.4 -0.3 2.4 0.4 2.4 0.8 2.4 1.1 2.4 -1 2.4 -5.6 2.4 8.5 2.4 -0.2 2.4 -1.2 2.4 0.2 2.4 0.7 2.4 -3.4 2.4 -7.4 2.4 1 2.4 7 2.4 2.9 2.4 -3 2.4 0.8 2.4 2.2 2.4 -0.5 2.4 -0.6 2.4 1.1 2.4 -0.4 2.4 -10.9 2.4 8.9 2.4 2.3 0.2 -0.1 1.4 -0.9 0.8 -0.5 1.2 -1.9 1.2 -2.1 0 -7.2 0.8 -130.7 0.6 -104 0.8 0 0.2 0 1.5 0 0.9 0 1.6 0 0.8 143.6 0.6 96.8 1.8 3.8 2.4 2.8 2.4 -0.5 2.4 0.9 2.4 -6.5 2.4 6.4 2.4 -0.9 2.4 -3.1 2.4 4.1 2.4 -5.8 2.4 -0.1 2.4 4.8 2.4 -8.1 2.4 6.7 2.4 -0.8 2.4 1.1 2.4 0.7 2.4 -0.1 2.4 -2.6 2.4 4.3 2.4 -0.1 2.4 -3.2 2.4 1 2.4 -0.6 2.4 0.6 2.4 -0.2 2.4 -4 2.4 7.4 2.4 -0.4 0.4 -0.5 2 -31.4 0.4 -5.2 0.9 0 0.9 0 0.2 3.6 2.2 33.2 0.2 -0.1 2.4 0.6 2.4 -5.5 2.4 -2.3 2.4 3.5 2.4 3.3 1.9 -4.4 0.5 -6 1.9 -16.7 0.5 0 0.2 0 0.7 0 1.5 16.6 0.9 9.2 1.5 -0.6 2.4 2.4 2.4 -0.2 2.4 0.7 1.7 -2.5 0.7 -36.4 0.7 -32.5 1.7 0 0.4 0 2 0 0.1 0 1.4 72 0.9 0.3 2.4 -4 2.4 1 2.4 -0.5 2.4 3.6 2.4 -7.3 2.4 3.6 2.4 2 2.4 -0.1 2.4 -4.5 2.4 4.7 2.4 1.4 2.4 -3.1 2.4 0.1 2.4 -8.4 2.4 11.8 2.4 -0.1 2.4 -5.8 2.4 1.5 2.4 3.9 2.4 0.4 2.4 -2.5 2.4 2.2 2.4 -3.7 2.4 0.5 0.9 -0.8 1.5 -15.1 0.9 -7.8 0.7 0 0.7 0 0.1 1.2 2.3 24.8 0.1 0.2 2.4 -3.2 2.4 2.8 2.4 -2.6 2.4 0.5 2.4 0.6 2.4 -1 2.4 -6.4 2.4 8.1 2.4 -6.9 2.4 0.2 2.4 7.1 2.4 -1.5 2.4 -4.9 2.4 7.1 1.3 -1.1 1.1 -132.9 0.3 -33.4 2.1 0 0.1 0 2.2 0 0.1 14.1 1.3 151.4 1.1 -1.8 0.6 0.4 1.8 -20.7 0.6 -7 0.9 0 0.9 0 0 0.2 2.4 28.8 0 0 2.4 1 2.4 -1 2.4 1.3 2.4 0.7 2.4 -2.8 2.4 -0.7 2.4 3 2.4 -2.5 2.4 2.1 2.4 -2.3 1.3 1 1.1 -12.9 1.3 -15.9 0.9 0 0.2 0 0.7 0 1.7 19.9 0.7 7.8 1.7 -0.4 2.4 2.9 2.4 -2.1 2.4 -0.7 2.4 3.9 2.4 -1.5 2.4 -7.3 2.4 6.8 2.4 -5.7 2.4 8 2.4 -2.5 2.4 0.1 2.4 -0.5 2.4 1.8 2.4 -8.5 2.4 4.3 2.4 -4.9 2.4 7.2 2.4 -0.2 2.4 0.2 2.4 -0.8 0.9 0.7 1.5 -15 0.9 -9.6 1.4 0 0.1 0 1.3 0 1.1 13 1.3 15.1 1.1 0 2.4 -0.2 2.4 -0.6 2.4 0.7 2.4 -5 2.4 4.3 2.4 -1.9 0 -0.1 2.4 -46 0 0 0.9 0 0.9 0 0.6 12.2 1.2 22.9 0.6 0.4 0.6 -11 1.2 -20.5 0.9 0 0.3 0 0.6 0 1.8 30.8 0.6 10.5 1.8 0.8 2.4 -6.8 1.4 4 1 -4.1 1.4 -9.8 1 0 0.4 0 1.4 0 0.6 4.8 1.8 13 0.6 -0.4 2.4 -5.2 1.8 3.7 0.6 -9.9 1.8 -33.4 0.6 0 0.3 0 0.9 0 1.2 22.5 1.2 23.3 1.2 0.9 2.4 -1.5 2.4 1.4 2.4 -1.7 2.4 -0.3 0 6.4 -2.4 3 -2.4 -0.9 -2.4 -1.1 -2.4 0.7 -1.2 -0.3 -1.2 -0.3 -1.2 0.7 -0.9 0.5 -0.3 0.2 -0.6 -0.7 -1.8 -1.8 -0.6 1.4 -1.8 4.4 -2.4 -4.1 -0.6 -0.6 -1.8 -1.9 -0.6 0.6 -1.4 1.4 -0.4 0.4 -1 -0.3 -1.4 -0.5 -1 0.4 -1.4 0.7 -2.4 -0.9 -1.8 0 -0.6 0 -1.8 0 -0.6 0 -0.3 0.2 -0.9 0.7 -1.2 0.8 -0.6 2 -0.6 1.9 -1.2 3.9 -0.6 -2.6 -0.9 -3.8 -0.9 -3.7 0 0 -2.4 -0.7 0 0 -2.4 0 -2.4 0.1 -2.4 7.3 -2.4 -1.4 -2.4 -5.2 -2.4 0.5 -1.1 0.4 -1.3 0.3 -1.1 -0.5 -1.3 -0.7 -0.1 0.5 -1.4 6 -0.9 3.9 -1.5 -1.8 -0.9 -1 -2.4 -7.9 -2.4 1.8 -2.4 -1.8 -2.4 0.1 -2.4 -0.2 -2.4 10.4 -2.4 -9.2 -2.4 -0.4 -2.4 -1.6 -2.4 2.8 -2.4 6.1 -2.4 -6.1 -2.4 -2.8 -2.4 2.3 -2.4 -2.3 -2.4 0.5 -2.4 0.3 -2.4 -0.7 -2.4 1.4 -2.4 -1.3 -1.7 0.9 -0.7 0.4 -1.7 0.7 -0.7 0.3 -0.2 0.1 -0.9 0.4 -1.3 0.6 -1.1 -0.8 -1.3 -1 -2.4 0.4 -2.4 0.9 -2.4 0.3 -2.4 -1.1 -2.4 0.6 -2.4 2.2 -2.4 6.2 -2.4 -11.3 -2.4 4.2 -2.4 4.4 0 0 -2.4 -7.6 0 0 -0.9 3 -0.9 3 -0.6 1.9 -1.8 -5.5 -0.6 -1.8 -1.1 0.8 -1.3 0.8 -0.1 0 -2.2 -0.2 -0.1 0 -2.1 -1.2 -0.3 -0.1 -1.1 2.8 -1.3 3.3 -2.4 -6.4 -2.4 1.6 -2.4 -3.1 -2.4 1.1 -2.4 8.8 -2.4 -9.1 -2.4 4.1 -2.4 8 -2.4 -10.6 -2.4 0.4 -2.4 -0.8 -2.4 -0.9 -2.4 2.7 -2.4 2.7 -0.1 -0.2 -2.3 -3.7 -0.1 0.1 -0.7 0.1 -0.7 0.2 -0.9 0.3 -1.5 -1.4 -0.9 -0.8 -2.4 6.8 -2.4 1.5 -2.4 -8.7 -2.4 3.6 -2.4 -4.1 -2.4 5.6 -2.4 4.7 -2.4 -6.6 -2.4 -2.7 -2.4 -0.9 -2.4 0.4 -2.4 8.4 -2.4 -5.2 -2.4 6.3 -2.4 -9.3 -2.4 7.5 -2.4 -6.9 -2.4 1.7 -2.4 -0.6 -2.4 -2.1 -2.4 -0.3 -2.4 3.2 -2.4 2.6 -2.4 -2.2 -0.9 1.6 -1.4 2.6 -0.1 0.1 -2 -3.8 -0.4 -0.7 -1.7 -2.4 -0.7 -0.9 -0.7 0.2 -1.7 0.4 -2.4 2.1 -2.4 0.1 -2.4 -1.4 -1.5 -0.2 -0.9 -0.1 -1.5 0.5 -0.7 0.2 -0.2 0 -0.5 1.2 -1.9 4.1 -0.5 0.6 -1.9 2 -2.4 -6.2 -2.4 -2.3 -2.4 4.5 -2.4 -5.3 -2.4 9.4 -0.2 -0.7 -2.2 -6 -0.2 -0.1 -0.9 -0.5 -0.9 -0.4 -0.4 -0.2 -2 -1.1 -0.4 -0.1 -2.4 0.7 -2.4 4.7 -2.4 -2.7 -2.4 2.3 -2.4 0.1 -2.4 -4.9 -2.4 4.6 -2.4 6.7 -2.4 -8.9 -2.4 -2.7 -2.4 2.1 -2.4 -0.9 -2.4 -1.2 -2.4 4.6 -2.4 -4 -2.4 0.9 -2.4 0.8 -2.4 -1.5 -2.4 1.4 -2.4 -2.3 -2.4 2.6 -2.4 0.3 -2.4 -1.8 -2.4 -1.4 -2.4 2.7 -2.4 -3.1 -2.4 0 -2.4 3.5 -1.8 2.7 -0.6 0.8 -0.8 -1.2 -1.6 -2.2 -0.9 -0.8 -1.5 -1.3 -0.2 0.2 -0.8 0.6 -0.6 0.4 -0.8 0.6 0 0.1 -1.2 2.6 -1.2 2.5 -0.8 -2.8 -1.4 -4.6 -0.2 -0.5 -2.4 5.6 -2.4 -4 -2.4 0.3 -2.4 0.4 -2.4 4.9 -2.4 -1.6 -2.4 -6.3 -2.4 0.7 -2.4 7.9 -2.4 -7.5 -2.4 2.6 -2.4 4.2 -2.4 3.4 -2.4 -8.2 -2.4 9.2 -2.4 -10.2 -2.4 7.7 -2.4 -9.7 -2.4 1.6 -2.4 0.7 -2.4 1.1 -2.4 7 -2.4 -10 -2.4 3.8 -2.4 -2.3 -2.4 -1.5 -2.4 12.5 -2.1 -5.2 -0.3 -0.6 -2.1 -5.8 -0.3 -0.7 -0.4 0.5 -0.7 0.8 -1.3 1.4 -1.1 -1 -1.3 -1 -2.4 2.2 -2.1 -0.6 -0.3 -0.1 -2.1 -1.5 -0.2 -0.1 -0.9 3 -1.1 3.9 -0.4 1.5 -2 -5.4 -0.4 -1.2 -2.4 1.9 -2.4 -4.7 -2.4 2.5 -2.4 -1.9 -2.4 2.7 -2.4 -2.6 -2.4 4.9 -2.4 -5 -2.4 10.2 -2.4 -7.8 -2.4 -1.8 -2.4 3.6 -2.4 -2.8 -2.4 -2.2 -2.4 3 -2.4 -2.8 -2.4 -0.3 -2.4 6.6 -2.4 0 -2.4 -3.1 -2.4 6 -2.4 -8.8 -2.4 7.2 -2.4 -5.3 -2.4 -0.1 -2.4 -0.5 -2.4 1.6 -2.4 -2 -2.4 2.3 -2.4 -3.6 -2.4 5.3 -2.4 5.6 -2.4 -5 -2.4 -2.4 -2.4 -0.2 -2.4 -0.8 -2.4 7.9 -2.4 0.3 -2.4 -7.5 -2.4 -2.8 -2.4 0.5 -2.4 6.2 -2.4 2 -2.4 -7.1 -2.4 5.8 -2.4 -4.9 -2.4 -0.2 -2.4 -1.7 -0.2 0.7 -2.2 9.9 -0.2 -0.7 -0.9 -3.9 -0.9 -3.9 -0.4 -1.9 -2 1.9 -0.4 0.4 -2.4 -3.4 -2 2.7 -0.4 0.6 -2 0.1 -0.4 0 -1 -0.4 -1.4 -0.5 0 0 -2.4 4 0 0.1 -2.4 -3.8 -2.4 8.3 -2.4 -5.9 -2.4 -1.8 -2.4 -2.5 -2.4 -0.1 -2.4 0.4 -2.4 0.2 -2.4 0.3 -2.4 -0.8 -2.4 5.7 -2.4 -6.7 -2.4 1.3 -2.4 5.8 -2.4 -2.8 -2.4 -2.1 -2.4 7.2 -2.4 -0.2 -2.4 -7.9 -2.4 7.7 -2.4 -2 -2.4 -6.9 -2.4 2.8 -2.4 3.6 -2.4 -6.3 -2.4 2 -2.4 -1.9 -2.4 -0.3 -2.4 0.5 -2.4 2.4 -2.4 6.7 -2.4 -2.9 -2.4 6.1 -2.4 -10.8 -2.4 0.1 -2.4 -1.2 -2.4 1.9 -2.4 0 -2.4 -0.2 -2.4 1.4 -2.4 -2.7 -2.4 -0.9 -2.4 9.4 -2.4 -7.4 -2.4 -0.6 -2.4 -1.6 -2.4 1.3 -2.4 3.8 -2.4 5.8 -2.4 -8.8 -2.4 -1.2 -2.4 -0.5 -2.4 -0.8 -2.4 5.2 -2.4 3.3 -2.4 -3.6 -2.4 -2.6 -2.4 5.5 -2.4 -5.2 -2.4 2.8 -2.4 -3.6 -2.4 -1 -2.4 8.3 -2.4 -7.8 -2.4 -0.1 -2.4 4.6 -2.1 -2 -0.3 -0.3 -2.1 2.1 -0.3 0.3 -1.1 -1.6 -1.3 -1.9 -0.1 -0.1 -2.3 -1.2 -0.1 0 -2.3 1.5 -2.4 1.1 -2.4 0.1 -2.4 -1.4 -2.4 -1.7 -2.4 7.6 -2.4 -8.4 -2.4 9.4 -2.4 -9.3 -2.4 3.4 -2.4 -1.5 -2.4 0.2 -2.4 -1.6 -2.4 5.7 -2.4 -2.7 -2.4 -0.2 -2.4 -0.7 -2.4 -1.8 -2.4 2.2 -2.4 -2.5 -2.4 2.9 -2.4 -2.6 -2.4 -0.1 -2.4 4 -2.4 4.9 -2.4 -9.6 -2.4 3.1 -2.4 -3.2 -2.4 2.3 -2.4 -0.7 -2.4 -1.3 -2.4 1.1 -2 2.9 -0.4 0.6 -2 1.4 -0.4 0.2 -0.7 -1.8 -1.1 -2.8 -0.6 -1.6 -1.8 6 -0.6 2.1 -2.4 -7.7 -2.4 -0.6 -2.4 3.5 -2.4 -0.7 -2.4 -0.2 -2.4 -2.5 -2.4 1.2 -1.8 0.9 -0.6 0.3 -1.8 -1 -0.6 -0.3 -0.5 -0.2 -1.1 -0.2 -0.8 -0.2 -0.5 0.4 -1.1 0.9 -0.2 0.2 -0.6 0.5 -0.3 0.8 -1.5 4.1 -0.6 1.6 -0.3 -1 -0.9 -3.1 -1.2 -4.2 -1.2 0.3 -1.2 0.4 -2.4 -0.9 -2.4 1.4 -2.4 7.8 -2.4 -9.2 -2.4 0.5 -2.4 1.4 -2.4 1 -2.4 -3.5 -2.4 7.7 -2.4 -5.8 -2.4 -1.2 -2.4 2 -0.4 0.1 -2 0.6 -0.4 -0.1 -2 0 -0.4 0.1 -2 0.3 -0.4 -0.5 -2 -2.6 -0.4 0.1 -2 0.8 -2.4 -0.2 -2.4 5.2 -2.4 -5.5Z" fill="#afd8f8"/>
<path d="M2078 1432.7l2.4 5.5 2.4 -5.2 2.4 0.2 2 -0.8 0.4 -0.1 2 2.6 0.4 0.5 2 -0.3 0.4 -0.1 2 0 0.4 0.1 2 -0.6 0.4 -0.1 2.4 -2 2.4 1.2 2.4 5.8 2.4 -7.7 2.4 3.5 2.4 -1 2.4 -1.4 2.4 -0.5 2.4 9.2 2.4 -7.8 2.4 -1.4 2.4 0.9 1.2 -0.4 1.2 -0.3 1.2 4.2 0.9 3.1 0.3 1 0.6 -1.6 1.5 -4.1 0.3 -0.8 0.6 -0.5 0.2 -0.2 1.1 -0.9 0.5 -0.4 0.8 0.2 1.1 0.2 0.5 0.2 0.6 0.3 1.8 1 0.6 -0.3 1.8 -0.9 2.4 -1.2 2.4 2.5 2.4 0.2 2.4 0.7 2.4 -3.5 2.4 0.6 2.4 7.7 0.6 -2.1 1.8 -6 0.6 1.6 1.1 2.8 0.7 1.8 0.4 -0.2 2 -1.4 0.4 -0.6 2 -2.9 2.4 -1.1 2.4 1.3 2.4 0.7 2.4 -2.3 2.4 3.2 2.4 -3.1 2.4 9.6 2.4 -4.9 2.4 -4 2.4 0.1 2.4 2.6 2.4 -2.9 2.4 2.5 2.4 -2.2 2.4 1.8 2.4 0.7 2.4 0.2 2.4 2.7 2.4 -5.7 2.4 1.6 2.4 -0.2 2.4 1.5 2.4 -3.4 2.4 9.3 2.4 -9.4 2.4 8.4 2.4 -7.6 2.4 1.7 2.4 1.4 2.4 -0.1 2.4 -1.1 2.3 -1.5 0.1 0 2.3 1.2 0.1 0.1 1.3 1.9 1.1 1.6 0.3 -0.3 2.1 -2.1 0.3 0.3 2.1 2 2.4 -4.6 2.4 0.1 2.4 7.8 2.4 -8.3 2.4 1 2.4 3.6 2.4 -2.8 2.4 5.2 2.4 -5.5 2.4 2.6 2.4 3.6 2.4 -3.3 2.4 -5.2 2.4 0.8 2.4 0.5 2.4 1.2 2.4 8.8 2.4 -5.8 2.4 -3.8 2.4 -1.3 2.4 1.6 2.4 0.6 2.4 7.4 2.4 -9.4 2.4 0.9 2.4 2.7 2.4 -1.4 2.4 0.2 2.4 0 2.4 -1.9 2.4 1.2 2.4 -0.1 2.4 10.8 2.4 -6.1 2.4 2.9 2.4 -6.7 2.4 -2.4 2.4 -0.5 2.4 0.3 2.4 1.9 2.4 -2 2.4 6.3 2.4 -3.6 2.4 -2.8 2.4 6.9 2.4 2 2.4 -7.7 2.4 7.9 2.4 0.2 2.4 -7.2 2.4 2.1 2.4 2.8 2.4 -5.8 2.4 -1.3 2.4 6.7 2.4 -5.7 2.4 0.8 2.4 -0.3 2.4 -0.2 2.4 -0.4 2.4 0.1 2.4 2.5 2.4 1.8 2.4 5.9 2.4 -8.3 2.4 3.8 0 -0.1 2.4 -4 0 0 1.4 0.5 1 0.4 0.4 0 2 -0.1 0.4 -0.6 2 -2.7 2.4 3.4 0.4 -0.4 2 -1.9 0.4 1.9 0.9 3.9 0.9 3.9 0.2 0.7 2.2 -9.9 0.2 -0.7 2.4 1.7 2.4 0.2 2.4 4.9 2.4 -5.8 2.4 7.1 2.4 -2 2.4 -6.2 2.4 -0.5 2.4 2.8 2.4 7.5 2.4 -0.3 2.4 -7.9 2.4 0.8 2.4 0.2 2.4 2.4 2.4 5 2.4 -5.6 2.4 -5.3 2.4 3.6 2.4 -2.3 2.4 2 2.4 -1.6 2.4 0.5 2.4 0.1 2.4 5.3 2.4 -7.2 2.4 8.8 2.4 -6 2.4 3.1 2.4 0 2.4 -6.6 2.4 0.3 2.4 2.8 2.4 -3 2.4 2.2 2.4 2.8 2.4 -3.6 2.4 1.8 2.4 7.8 2.4 -10.2 2.4 5 2.4 -4.9 2.4 2.6 2.4 -2.7 2.4 1.9 2.4 -2.5 2.4 4.7 2.4 -1.9 0.4 1.2 2 5.4 0.4 -1.5 1.1 -3.9 0.9 -3 0.2 0.1 2.1 1.5 0.3 0.1 2.1 0.6 2.4 -2.2 1.3 1 1.1 1 1.3 -1.4 0.7 -0.8 0.4 -0.5 0.3 0.7 2.1 5.8 0.3 0.6 2.1 5.2 2.4 -12.5 2.4 1.5 2.4 2.3 2.4 -3.8 2.4 10 2.4 -7 2.4 -1.1 2.4 -0.7 2.4 -1.6 2.4 9.7 2.4 -7.7 2.4 10.2 2.4 -9.2 2.4 8.2 2.4 -3.4 2.4 -4.2 2.4 -2.6 2.4 7.5 2.4 -7.9 2.4 -0.7 2.4 6.3 2.4 1.6 2.4 -4.9 2.4 -0.4 2.4 -0.3 2.4 4 2.4 -5.6 0.2 0.5 1.4 4.6 0.8 2.8 1.2 -2.5 1.2 -2.6 0 -0.1 0.8 -0.6 0.6 -0.4 0.8 -0.6 0.2 -0.2 1.5 1.3 0.9 0.8 1.6 2.2 0.8 1.2 0.6 -0.8 1.8 -2.7 2.4 -3.5 2.4 0 2.4 3.1 2.4 -2.7 2.4 1.4 2.4 1.8 2.4 -0.3 2.4 -2.6 2.4 2.3 2.4 -1.4 2.4 1.5 2.4 -0.8 2.4 -0.9 2.4 4 2.4 -4.6 2.4 1.2 2.4 0.9 2.4 -2.1 2.4 2.7 2.4 8.9 2.4 -6.7 2.4 -4.6 2.4 4.9 2.4 -0.1 2.4 -2.3 2.4 2.7 2.4 -4.7 2.4 -0.7 0.4 0.1 2 1.1 0.4 0.2 0.9 0.4 0.9 0.5 0.2 0.1 2.2 6 0.2 0.7 2.4 -9.4 2.4 5.3 2.4 -4.5 2.4 2.3 2.4 6.2 1.9 -2 0.5 -0.6 1.9 -4.1 0.5 -1.2 0.2 0 0.7 -0.2 1.5 -0.5 0.9 0.1 1.5 0.2 2.4 1.4 2.4 -0.1 2.4 -2.1 1.7 -0.4 0.7 -0.2 0.7 0.9 1.7 2.4 0.4 0.7 2 3.8 0.1 -0.1 1.4 -2.6 0.9 -1.6 2.4 2.2 2.4 -2.6 2.4 -3.2 2.4 0.3 2.4 2.1 2.4 0.6 2.4 -1.7 2.4 6.9 2.4 -7.5 2.4 9.3 2.4 -6.3 2.4 5.2 2.4 -8.4 2.4 -0.4 2.4 0.9 2.4 2.7 2.4 6.6 2.4 -4.7 2.4 -5.6 2.4 4.1 2.4 -3.6 2.4 8.7 2.4 -1.5 2.4 -6.8 0.9 0.8 1.5 1.4 0.9 -0.3 0.7 -0.2 0.7 -0.1 0.1 -0.1 2.3 3.7 0.1 0.2 2.4 -2.7 2.4 -2.7 2.4 0.9 2.4 0.8 2.4 -0.4 2.4 10.6 2.4 -8 2.4 -4.1 2.4 9.1 2.4 -8.8 2.4 -1.1 2.4 3.1 2.4 -1.6 2.4 6.4 1.3 -3.3 1.1 -2.8 0.3 0.1 2.1 1.2 0.1 0 2.2 0.2 0.1 0 1.3 -0.8 1.1 -0.8 0.6 1.8 1.8 5.5 0.6 -1.9 0.9 -3 0.9 -3 0 0 2.4 7.6 0 0 2.4 -4.4 2.4 -4.2 2.4 11.3 2.4 -6.2 2.4 -2.2 2.4 -0.6 2.4 1.1 2.4 -0.3 2.4 -0.9 2.4 -0.4 1.3 1 1.1 0.8 1.3 -0.6 0.9 -0.4 0.2 -0.1 0.7 -0.3 1.7 -0.7 0.7 -0.4 1.7 -0.9 2.4 1.3 2.4 -1.4 2.4 0.7 2.4 -0.3 2.4 -0.5 2.4 2.3 2.4 -2.3 2.4 2.8 2.4 6.1 2.4 -6.1 2.4 -2.8 2.4 1.6 2.4 0.4 2.4 9.2 2.4 -10.4 2.4 0.2 2.4 -0.1 2.4 1.8 2.4 -1.8 2.4 7.9 0.9 1 1.5 1.8 0.9 -3.9 1.4 -6 0.1 -0.5 1.3 0.7 1.1 0.5 1.3 -0.3 1.1 -0.4 2.4 -0.5 2.4 5.2 2.4 1.4 2.4 -7.3 2.4 -0.1 2.4 0 0 0 2.4 0.7 0 0 0.9 3.7 0.9 3.8 0.6 2.6 1.2 -3.9 0.6 -1.9 0.6 -2 1.2 -0.8 0.9 -0.7 0.3 -0.2 0.6 0 1.8 0 0.6 0 1.8 0 2.4 0.9 1.4 -0.7 1 -0.4 1.4 0.5 1 0.3 0.4 -0.4 1.4 -1.4 0.6 -0.6 1.8 1.9 0.6 0.6 2.4 4.1 1.8 -4.4 0.6 -1.4 1.8 1.8 0.6 0.7 0.3 -0.2 0.9 -0.5 1.2 -0.7 1.2 0.3 1.2 0.3 2.4 -0.7 2.4 1.1 2.4 0.9 2.4 -3" fill="none" stroke="#dcc26a" stroke-opacity="0.45" stroke-width="1"/>
<path d="M2162 1407.2l0.6 -4.4 1.1 0 0.7 0 0.4 0 2 17.3 0 0.5 -2 -14.5 -0.4 0 -0.7 0 -1.1 0 -0.6 3.6Z" fill="#edc240"/>
<path d="M2246 1423.6l2.3 -10.8 0.1 0 1.3 0 1.1 0 0.3 0 2.1 12.3 0 1.9 -2.1 -0.3 -0.3 0 -1.1 -2.5 -1.3 -2.9 -0.1 0.1 -2.3 2.6Z" fill="#edc240"/>
<path d="M2636.3 1345.9l0.8 0 1.2 0 1.2 0 0 0 0 67.9 0 7.2 -1.2 2.1 -1.2 1.9 -0.8 0.5Z" fill="#edc240"/>
<path d="M2985.1 1375.9l0 0 0.9 0 0.9 0 0.6 13.1 1.2 24.7 0.6 0.4 0.6 -11.9 1.2 -22.3 0.9 0 0.3 0 0.6 0 1.8 33.5 0 0.9 -1.8 -30.8 -0.6 0 -0.3 0 -0.9 0 -1.2 20.5 -0.6 11 -0.6 -0.4 -1.2 -22.9 -0.6 -12.2 -0.9 0 -0.9 0 0 0Z" fill="#edc240"/>
<path d="M3042.4 935l1.7 0 0.7 0 2.1 0 0.3 121.9 1.1 367.4 1.4 -4.1 2.4 -4.6 2.4 13 2.4 -7.2 2.5 -1.6 2.4 8.3 2.4 -0.7 2.4 -0.9 2.5 1.7 1.8 -0.7 0.6 -7.5 1.8 -22.9 0.6 0 0.6 0 1.2 0 0.6 6.6 1.8 22.9 0.7 1.5 0 7.7 -0.7 1.5 -1.8 4.3 -0.6 -2 -1.2 -3.7 -0.6 -1.9 -0.6 0.3 -1.8 0.7 -0.6 -0.4 -1.8 -1.4 -2.5 -1.3 -2.4 1.2 -2.4 9 -2.4 -10.5 -2.5 2.7 -2.4 -2 -2.4 2.8 -2.4 0 -1.4 4.1 -1.1 3.1 -0.3 -1 -2.1 -6.2 -0.7 -0.1 -1.7 -0.2Z" fill="#afd8f8"/>
<path d="M3042.4 1434.8l1.7 0.2 0.7 0.1 2.1 6.2 0.3 1 1.1 -3.1 1.4 -4.1 2.4 0 2.4 -2.8 2.4 2 2.5 -2.7 2.4 10.5 2.4 -9 2.4 -1.2 2.5 1.3 1.8 1.4 0.6 0.4 1.8 -0.7 0.6 -0.3 0.6 1.9 1.2 3.7 0.6 2 1.8 -4.3 0.7 -1.5" fill="none" stroke="#dcc26a" stroke-opacity="0.45" stroke-width="1"/>
<path d="M3042.4 916.3l1.7 0 0.7 0 2.1 0 0.3 126.5 0 14.1 -0.3 -121.9 -2.1 0 -0.7 0 -1.7 0Z" fill="#edc240"/>
<path d="M3071.5 1415.7l1.8 -36.2 0.6 0 0.6 0 1.2 0 0.6 11.2 0 13 -0.6 -6.6 -1.2 0 -0.6 0 -0.6 0 -1.8 22.9Z" fill="#edc240"/>
<path d="M3088.9 947.9l1.8 0 0.6 0 2.2 0 0.2 67.6 1.2 407.4 1.2 -1.3 2.4 2.4 2.4 1 2.4 -2.6 2.4 3.4 2.4 0.5 2.4 -1.4 2.4 -1.1 2.4 -3.2 2.4 6.9 2.4 -3.2 2.4 2.5 2.4 -0.8 2.4 -11.6 1.4 6.5 1 -9.2 1.4 -19.7 1 0 0.3 0 1.3 0 0.8 10.8 1.6 19.4 0.8 -1.4 2.4 6.4 2.4 -1.7 2.4 1.6 2.4 -0.5 2.4 -1 2.4 -9 2.4 6.8 2.4 -3.9 2.4 4.5 2.4 0.9 2.4 -0.6 2.4 -1 2.4 0.7 2.4 2.1 2.4 -1.9 2.2 2.7 0.2 -0.5 2.2 -8.5 0.2 -0.1 0.7 0.1 0.9 0 0.8 1.7 1.6 4.3 0.8 0.4 2.4 2.7 2.4 -0.3 2.4 -2.3 2.4 -0.1 2.4 -0.8 2.4 3.4 2.4 -6 2.4 2.5 2.4 1 2.4 -2.7 2.4 1.3 0.5 0.1 1.9 -17 0.5 -4.9 0.7 0 0.7 0 0.5 4.8 1.9 18.7 0.5 -0.4 2.4 -4.8 2.4 4.9 2.4 1.7 2.4 0.1 2.4 -1.7 0.2 0.2 2.2 -21.9 0.2 -2.6 0.9 0 0.9 0 0.4 3.5 2 20.7 0.4 0.2 2.4 -0.5 2.4 2.2 2.4 -2.5 2.4 1.3 2.4 1.2 2.4 -7.8 2.4 9 2.4 -7.5 2.4 6 2.4 -5.3 2.4 5.6 2.3 -1.1 0.1 -1 2.3 -41.7 0.1 0 1.3 0 0.4 0 0.6 0 0.4 0 1.4 15.7 0.6 0 0.4 0 0.4 0 1.4 0 0.2 2.9 2.2 25.5 0.2 0.1 2.4 -1.4 2.4 -1.1 2.4 -2.4 2.4 -2.1 2.4 6.4 2.4 -0.8 2.4 -1.8 2.4 -7 2.4 7.1 2.4 0.4 2.4 -0.9 2.4 0.9 2.4 2.4 2.4 -8.8 2.4 7.8 2.4 -2.3 2.4 0.4 2.4 -1.3 2.4 4.4 2.4 -3.2 2.4 2.9 2.4 0.1 2.4 -0.9 2.4 -0.7 2.4 -1.9 2.4 3 2.4 -6.4 2.4 6.2 2.4 -1.2 2.4 0.6 2.4 -2.1 2.4 -0.3 2.4 0.8 2.4 2.1 2.4 -11 2.4 10.1 2.4 -2.3 2.4 1.5 2.4 -6.4 2.4 7.3 2.4 -0.7 2.4 -2.9 2.4 2.2 2.4 2.3 2.4 -8.4 2.4 6.5 2.4 -6.7 2.4 6.6 2.4 0.2 2.4 0.9 2.4 -9.5 2.4 10.8 2.4 -3.9 2.4 3.2 1.3 -1.6 1.1 -27.6 1.3 -30.5 1.1 0 0 0 1.1 0 1.3 31.5 1.1 27.4 1.3 1.3 2.4 -1.8 2.4 -1 2.4 -0.7 2.4 0.5 2.4 1.2 2.4 1.4 2.4 -1 2.4 -2.4 2.4 -3.7 2.4 0 2.4 -2.6 2.4 10.1 2.4 -2.8 2.4 1.4 2.4 -0.1 2.4 -4.2 2.4 -5.2 2.4 7.3 1.1 0.7 1.3 -6.8 1.1 -6.5 0.9 0 0.4 0 0.5 0 1.9 8.9 0.5 2.8 1.9 1.6 2.4 0 2.4 3.4 2.4 -3.4 2.4 3.1 2.4 -0.6 2.4 -1.1 2.4 0.5 2.4 -6.8 2.4 8.8 2.4 -3 2.4 -2.7 2.4 2.6 2.4 1.7 2.4 -1 2.4 -2.7 2.4 4.2 2.4 -3 2.4 -0.9 2.4 -5.9 2.4 9.2 2.4 1.9 2.4 -1.7 2.4 0 2.4 -1.3 2.4 -1 2.4 -2.4 2.4 -2.6 2.4 4.5 2.4 1.3 2.4 -7.9 2.4 10.3 2.4 0.6 2.4 -3.5 2.4 2.8 2.4 -3.9 2.4 3.5 2.4 -2.7 2.4 3.4 2.4 0.7 2.4 -1.8 2.4 -1.7 2.4 1.2 2.4 0.7 2.4 -1 1.9 -5.7 0.5 -4.2 1.9 -11.7 0.5 0 0.2 0 0.7 0 1.5 13.6 0.9 7.9 1.5 -1.2 1.4 0.8 1 -38.7 0.4 -17.9 2 0 0.4 0 2 0 0.4 0 1.4 53.6 0.6 1.1 2.4 1 2.4 2.7 2.4 -2.3 2.4 -1.1 2.4 0.8 2.4 1.6 2.4 -6.1 2.4 3.8 2.4 2.4 2.4 0.9 2.4 -8.6 2.4 9.2 0.7 -0.4 1.7 -7.4 0.7 -2.9 0.7 0 0.7 0 0.3 1 2.1 6.1 0.2 -0.3 2.4 1.4 2.4 -5.8 2.4 4.1 2.4 0.5 2.4 -0.2 2.4 3 2.4 -1.6 2.4 -1.2 1.3 -2.5 1.1 -2.2 1.3 4.3 1.1 0.3 0.3 0 1.4 0 0.7 0.1 1.7 1.3 0.7 0.4 2.4 0.4 2.4 0.7 0.9 0.2 1.4 -70.1 0.1 0 2 0 0.4 0 1.7 0 0.7 37.2 0.7 32.8 1.7 -1.5 2.4 1.6 2.4 -1.5 2.4 1.2 2.4 -0.4 2.4 -2.4 2.4 1.6 2.4 -1.7 2.4 3.8 2.4 -6.6 2.4 -4.2 2.4 8.2 2.4 0.5 1.8 -0.9 0.6 -30.6 0.8 -37.1 1.6 0 0.8 0 1.6 0 0.8 0 1.4 67.2 0.2 0 2.4 -0.9 2.4 3.2 2.4 -4.2 2.4 1.8 1.4 0 1 -13.2 1.4 -17.8 0.9 0 0.1 0 0.8 0 1.6 19.4 0.8 10.6 0.6 1 1 -10.9 1.4 -17.1 0.9 0 0.1 0 0.8 0 1.6 17.6 0.8 10.6 1.6 4.3 2.4 -8 2.4 7 2.4 0.4 2.4 0.6 2.4 0.1 0.3 -1.2 2.1 -26.8 0.3 -2.3 0.9 -0.1 0.9 0.1 0.3 3.6 2.1 24.1 0.3 0 2.4 -0.1 2.4 -6.4 2.4 6.3 2.4 2.2 2.4 -0.1 2.4 0.6 2.4 -1.5 2.4 -4.2 2.4 5.3 2.4 -0.3 1.8 -0.1 0.6 -9.1 1.8 -26.9 0.6 0 0.3 0 0.9 0 1.2 17.4 1.2 17.7 1.2 0.4 2.4 -1 2.4 0.8 2.4 -0.3 2.4 -6.9 2.4 2.3 2.4 4.2 2.4 -2.4 0 9.9 -2.4 10.9 -2.4 -8.2 -2.4 -0.9 -2.4 -2.3 -2.4 5.6 -2.4 -5.5 -2.4 1.5 -1.2 0.4 -1.2 0.3 -1.2 2.3 -0.9 1.7 -0.3 0.6 -0.6 -1.5 -1.8 -4.4 -0.6 -0.1 -1.8 -0.2 -2.4 9.7 -2.4 -7.5 -2.4 -3.2 -2.4 3.2 -2.4 -0.4 -2.4 -2.9 -2.4 0 -2.4 0.2 -2.4 0.8 -2.4 1.4 -0.3 -0.2 -2.1 -0.8 -0.3 0.8 -0.9 2.3 -0.9 2.4 -0.3 0.7 -2.1 2.3 -0.3 0.3 -2.4 -7.9 -2.4 9.1 -2.4 -11.6 -2.4 10.2 -2.4 -3.7 -1.6 1 -0.8 0.5 -1.6 0.4 -0.8 0.2 -0.1 -0.3 -0.9 -1.9 -1.4 -3 -1 3.4 -0.6 1.9 -0.8 2.6 -1.6 0.2 -0.8 0.1 -0.1 -0.1 -0.9 -0.9 -1.4 -1.3 -1 0.1 -1.4 0.1 -2.4 -1.4 -2.4 -5.5 -2.4 0.7 -2.4 5.5 -0.2 -0.8 -1.4 -5.3 -0.8 -2.8 -1.6 8.8 -0.8 4.2 -1.6 -6.8 -0.8 -3.2 -0.6 -0.5 -1.8 -1.2 -2.4 0 -2.4 5.4 -2.4 0.2 -2.4 -3.7 -2.4 4.5 -2.4 -6.5 -2.4 2.2 -2.4 5.4 -2.4 -0.4 -2.4 -5 -2.4 3.3 -2.4 -4.8 -1.7 6.7 -0.7 2.6 -0.7 -2.7 -1.7 -6.2 -0.4 1.3 -2 5.6 -0.1 -0.4 -1.4 -4 -0.9 -2.4 -2.4 -1.9 -2.4 2.1 -0.7 1.2 -1.7 2.6 -0.7 -1.3 -1.4 -2.4 -0.3 -0.5 -1.1 1.3 -1.3 1.4 -1.1 -1.4 -1.3 -1.6 -2.4 0.8 -2.4 1 -2.4 -3.2 -2.4 2.6 -2.4 3.3 -2.4 -3 -2.4 -0.9 -2.4 -0.5 -0.2 0 -2.1 -0.1 -0.3 -0.1 -0.7 -0.4 -0.7 -0.4 -0.7 -0.5 -1.7 4.9 -0.7 2.1 -2.4 -3.9 -2.4 0.2 -2.4 -3 -2.4 2.7 -2.4 -3.4 -2.4 1.8 -2.4 -0.1 -2.4 0.4 -2.4 10.3 -2.4 -9 -2.4 -0.7 -2.4 -0.6 -0.6 0.1 -1.4 0.1 -0.4 0 -2 -1.4 -0.4 -0.3 -2 6.2 -0.4 1.4 -1 -2.7 -1.4 -4.2 -1.5 -0.7 -0.9 -0.4 -1.5 0.5 -0.7 0.3 -0.2 0.1 -0.5 0.3 -1.9 1.2 -0.5 0.9 -1.9 3.5 -2.4 -6.4 -2.4 1.5 -2.4 -0.9 -2.4 1.4 -2.4 3.7 -2.4 -3.2 -2.4 -1.5 -2.4 1.9 -2.4 -1.9 -2.4 0.9 -2.4 4.8 -2.4 3.5 -2.4 -7.6 -2.4 -1 -2.4 7.6 -2.4 -8.3 -2.4 -1.6 -2.4 3.4 -2.4 0.1 -2.4 -0.8 -2.4 -2.4 -2.4 7.3 -2.4 -5.2 -2.4 0.4 -2.4 -1.7 -2.4 2.6 -2.4 0 -2.4 -0.8 -2.4 -1.2 -2.4 1.4 -2.4 -2.8 -2.4 0.2 -2.4 10.8 -2.4 -11.3 -2.4 0.8 -2.4 2.4 -2.4 -3 -2.4 0.2 -2.4 6.7 -2.4 -5.6 -2.4 -0.2 -2.4 0.8 -2.4 -1.4 -2.4 6.1 -1.9 -5.1 -0.5 -1.4 -1.9 9.1 -0.5 2.4 -0.4 -1.6 -0.9 -3.6 -1.1 -4.5 -1.3 0.1 -1.1 0 -2.4 7.9 -2.4 -6.9 -2.4 0.5 -2.4 -2.1 -2.4 -1.5 -2.4 10 -2.4 0.5 -2.4 -8.1 -2.4 -0.4 -2.4 -1.8 -2.4 2.2 -2.4 0.8 -2.4 -2.5 -2.4 2.1 -2.4 0.8 -2.4 -3.3 -2.4 2.9 -2.4 -0.4 -1.3 0.4 -1.1 0.3 -1.3 3.6 -1.1 3.1 0 0 -1.1 -0.3 -1.3 -0.4 -1.1 -2.6 -1.3 -3.1 -2.4 8.4 -2.4 -9 -2.4 8.3 -2.4 -0.8 -2.4 -10.6 -2.4 10 -2.4 -8.2 -2.4 -1.1 -2.4 3.4 -2.4 -3.6 -2.4 -0.1 -2.4 4.9 -2.4 -3.1 -2.4 -0.8 -2.4 5.2 -2.4 -4.9 -2.4 6.3 -2.4 0.4 -2.4 -6.6 -2.4 -1.8 -2.4 10.5 -2.4 -9.4 -2.4 -0.7 -2.4 0 -2.4 5 -2.4 -5.5 -2.4 3.6 -2.4 -1 -2.4 0.5 -2.4 -0.9 -2.4 1.1 -2.4 -0.7 -2.4 6.7 -2.4 0.6 -2.4 -1.1 -2.4 -7.7 -2.4 0.7 -2.4 8.3 -2.4 -6.6 -2.4 -2.6 -2.4 8.6 -2.4 -4.2 -2.4 5.7 -2.4 -8 -2.4 -2.3 -2.4 -0.3 -2.4 3.4 -2.4 -0.6 -2.4 0.5 -2.4 2.8 -2.4 -4.1 -2.4 9 -2.4 -3 -2.4 -3.5 -0.2 -0.2 -2.2 -1.8 -0.2 0.5 -1.4 2.6 -0.4 0.8 -0.4 0.6 -0.6 -1.9 -1.4 -4.2 -0.4 -1 -0.6 0 -0.4 -0.1 -1.3 -0.1 -0.1 0.1 -2.3 2.1 -0.1 0 -2.3 -2.2 -2.4 5.9 -2.4 -4.8 -2.4 2.1 -2.4 -0.9 -2.4 -1.2 -2.4 -0.9 -2.4 0.2 -2.4 5.5 -2.4 -2.7 -2.4 -1.8 -2.4 2.1 -0.4 0.8 -2 4 -0.4 0.4 -0.9 1 -0.9 1 -0.2 0.2 -2.2 -7.3 -0.2 -0.8 -2.4 -1.7 -2.4 1.5 -2.4 3.8 -2.4 -6.6 -2.4 2.2 -0.5 -0.2 -1.9 -1.1 -0.5 0.3 -0.7 0.4 -0.7 0.4 -0.5 0.3 -1.9 -0.8 -0.5 -0.3 -2.4 0.5 -2.4 7.3 -2.4 -6.9 -2.4 -1.4 -2.4 7 -2.4 -4.5 -2.4 -1.1 -2.4 -1.3 -2.4 0.3 -2.4 -0.6 -2.4 9.8 -0.8 -2.8 -1.6 -6 -0.8 1.7 -0.9 2 -0.7 1.6 -0.2 -0.3 -2.2 -4 -0.2 0.1 -2.2 0.9 -2.4 -1.9 -2.4 3.3 -2.4 4.5 -2.4 0.4 -2.4 -8.7 -2.4 0.9 -2.4 0 -2.4 0.5 -2.4 0.3 -2.4 -2.6 -2.4 7.4 -2.4 -5.2 -2.4 -2.1 -2.4 0 -2.4 1.9 -0.8 1.5 -1.6 3.2 -0.8 -0.7 -1.3 -1.1 -0.3 -0.3 -1 -1.5 -1.4 -2.2 -1 -0.4 -1.4 -0.5 -2.4 0 -2.4 7.8 -2.4 2.8 -2.4 -3.2 -2.4 -6.1 -2.4 6.3 -2.4 2 -2.4 0.4 -2.4 -3.1 -2.4 -5.8 -2.4 0.4 -2.4 2.2 -2.4 -1.9 -1.2 -0.7 -1.2 -0.7 -0.2 0.6 -2.2 6.2 -0.6 0.5 -1.8 1.5Z" fill="#afd8f8"/>
<path d="M3088.9 1441l1.8 -1.5 0.6 -0.5 2.2 -6.2 0.2 -0.6 1.2 0.7 1.2 0.7 2.4 1.9 2.4 -2.2 2.4 -0.4 2.4 5.8 2.4 3.1 2.4 -0.4 2.4 -2 2.4 -6.3 2.4 6.1 2.4 3.2 2.4 -2.8 2.4 -7.8 2.4 0 1.4 0.5 1 0.4 1.4 2.2 1 1.5 0.3 0.3 1.3 1.1 0.8 0.7 1.6 -3.2 0.8 -1.5 2.4 -1.9 2.4 0 2.4 2.1 2.4 5.2 2.4 -7.4 2.4 2.6 2.4 -0.3 2.4 -0.5 2.4 0 2.4 -0.9 2.4 8.7 2.4 -0.4 2.4 -4.5 2.4 -3.3 2.4 1.9 2.2 -0.9 0.2 -0.1 2.2 4 0.2 0.3 0.7 -1.6 0.9 -2 0.8 -1.7 1.6 6 0.8 2.8 2.4 -9.8 2.4 0.6 2.4 -0.3 2.4 1.3 2.4 1.1 2.4 4.5 2.4 -7 2.4 1.4 2.4 6.9 2.4 -7.3 2.4 -0.5 0.5 0.3 1.9 0.8 0.5 -0.3 0.7 -0.4 0.7 -0.4 0.5 -0.3 1.9 1.1 0.5 0.2 2.4 -2.2 2.4 6.6 2.4 -3.8 2.4 -1.5 2.4 1.7 0.2 0.8 2.2 7.3 0.2 -0.2 0.9 -1 0.9 -1 0.4 -0.4 2 -4 0.4 -0.8 2.4 -2.1 2.4 1.8 2.4 2.7 2.4 -5.5 2.4 -0.2 2.4 0.9 2.4 1.2 2.4 0.9 2.4 -2.1 2.4 4.8 2.4 -5.9 2.3 2.2 0.1 0 2.3 -2.1 0.1 -0.1 1.3 0.1 0.4 0.1 0.6 0 0.4 1 1.4 4.2 0.6 1.9 0.4 -0.6 0.4 -0.8 1.4 -2.6 0.2 -0.5 2.2 1.8 0.2 0.2 2.4 3.5 2.4 3 2.4 -9 2.4 4.1 2.4 -2.8 2.4 -0.5 2.4 0.6 2.4 -3.4 2.4 0.3 2.4 2.3 2.4 8 2.4 -5.7 2.4 4.2 2.4 -8.6 2.4 2.6 2.4 6.6 2.4 -8.3 2.4 -0.7 2.4 7.7 2.4 1.1 2.4 -0.6 2.4 -6.7 2.4 0.7 2.4 -1.1 2.4 0.9 2.4 -0.5 2.4 1 2.4 -3.6 2.4 5.5 2.4 -5 2.4 0 2.4 0.7 2.4 9.4 2.4 -10.5 2.4 1.8 2.4 6.6 2.4 -0.4 2.4 -6.3 2.4 4.9 2.4 -5.2 2.4 0.8 2.4 3.1 2.4 -4.9 2.4 0.1 2.4 3.6 2.4 -3.4 2.4 1.1 2.4 8.2 2.4 -10 2.4 10.6 2.4 0.8 2.4 -8.3 2.4 9 2.4 -8.4 1.3 3.1 1.1 2.6 1.3 0.4 1.1 0.3 0 0 1.1 -3.1 1.3 -3.6 1.1 -0.3 1.3 -0.4 2.4 0.4 2.4 -2.9 2.4 3.3 2.4 -0.8 2.4 -2.1 2.4 2.5 2.4 -0.8 2.4 -2.2 2.4 1.8 2.4 0.4 2.4 8.1 2.4 -0.5 2.4 -10 2.4 1.5 2.4 2.1 2.4 -0.5 2.4 6.9 2.4 -7.9 1.1 0 1.3 -0.1 1.1 4.5 0.9 3.6 0.4 1.6 0.5 -2.4 1.9 -9.1 0.5 1.4 1.9 5.1 2.4 -6.1 2.4 1.4 2.4 -0.8 2.4 0.2 2.4 5.6 2.4 -6.7 2.4 -0.2 2.4 3 2.4 -2.4 2.4 -0.8 2.4 11.3 2.4 -10.8 2.4 -0.2 2.4 2.8 2.4 -1.4 2.4 1.2 2.4 0.8 2.4 0 2.4 -2.6 2.4 1.7 2.4 -0.4 2.4 5.2 2.4 -7.3 2.4 2.4 2.4 0.8 2.4 -0.1 2.4 -3.4 2.4 1.6 2.4 8.3 2.4 -7.6 2.4 1 2.4 7.6 2.4 -3.5 2.4 -4.8 2.4 -0.9 2.4 1.9 2.4 -1.9 2.4 1.5 2.4 3.2 2.4 -3.7 2.4 -1.4 2.4 0.9 2.4 -1.5 2.4 6.4 1.9 -3.5 0.5 -0.9 1.9 -1.2 0.5 -0.3 0.2 -0.1 0.7 -0.3 1.5 -0.5 0.9 0.4 1.5 0.7 1.4 4.2 1 2.7 0.4 -1.4 2 -6.2 0.4 0.3 2 1.4 0.4 0 1.4 -0.1 0.6 -0.1 2.4 0.6 2.4 0.7 2.4 9 2.4 -10.3 2.4 -0.4 2.4 0.1 2.4 -1.8 2.4 3.4 2.4 -2.7 2.4 3 2.4 -0.2 2.4 3.9 0.7 -2.1 1.7 -4.9 0.7 0.5 0.7 0.4 0.7 0.4 0.3 0.1 2.1 0.1 0.2 0 2.4 0.5 2.4 0.9 2.4 3 2.4 -3.3 2.4 -2.6 2.4 3.2 2.4 -1 2.4 -0.8 1.3 1.6 1.1 1.4 1.3 -1.4 1.1 -1.3 0.3 0.5 1.4 2.4 0.7 1.3 1.7 -2.6 0.7 -1.2 2.4 -2.1 2.4 1.9 0.9 2.4 1.4 4 0.1 0.4 2 -5.6 0.4 -1.3 1.7 6.2 0.7 2.7 0.7 -2.6 1.7 -6.7 2.4 4.8 2.4 -3.3 2.4 5 2.4 0.4 2.4 -5.4 2.4 -2.2 2.4 6.5 2.4 -4.5 2.4 3.7 2.4 -0.2 2.4 -5.4 2.4 0 1.8 1.2 0.6 0.5 0.8 3.2 1.6 6.8 0.8 -4.2 1.6 -8.8 0.8 2.8 1.4 5.3 0.2 0.8 2.4 -5.5 2.4 -0.7 2.4 5.5 2.4 1.4 1.4 -0.1 1 -0.1 1.4 1.3 0.9 0.9 0.1 0.1 0.8 -0.1 1.6 -0.2 0.8 -2.6 0.6 -1.9 1 -3.4 1.4 3 0.9 1.9 0.1 0.3 0.8 -0.2 1.6 -0.4 0.8 -0.5 1.6 -1 2.4 3.7 2.4 -10.2 2.4 11.6 2.4 -9.1 2.4 7.9 0.3 -0.3 2.1 -2.3 0.3 -0.7 0.9 -2.4 0.9 -2.3 0.3 -0.8 2.1 0.8 0.3 0.2 2.4 -1.4 2.4 -0.8 2.4 -0.2 2.4 0 2.4 2.9 2.4 0.4 2.4 -3.2 2.4 3.2 2.4 7.5 2.4 -9.7 1.8 0.2 0.6 0.1 1.8 4.4 0.6 1.5 0.3 -0.6 0.9 -1.7 1.2 -2.3 1.2 -0.3 1.2 -0.4 2.4 -1.5 2.4 5.5 2.4 -5.6 2.4 2.3 2.4 0.9 2.4 8.2 2.4 -10.9" fill="none" stroke="#dcc26a" stroke-opacity="0.45" stroke-width="1"/>
<path d="M3088.9 927.9l1.8 0 0.6 0 2.2 0 0.2 70.4 0 17.2 -0.2 -67.6 -2.2 0 -0.6 0 -1.8 0Z" fill="#edc240"/>
<path d="M3129.7 1401.7l1.4 -33.8 1 0 0.3 0 1.3 0 0.8 18.7 0 16.2 -0.8 -10.8 -1.3 0 -0.3 0 -1 0 -1.4 19.7Z" fill="#edc240"/>
<path d="M3175.3 1425l2.2 -26.2 0.2 0 0.7 0 0.9 0 0.8 7.9 0 12.9 -0.8 -1.7 -0.9 0 -0.7 -0.1 -0.2 0.1 -2.2 8.5Z" fill="#edc240"/>
<path d="M3230.5 1400.7l0.2 -2.9 0.9 0 0.9 0 0.4 3.8 0 2.1 -0.4 -3.5 -0.9 0 -0.9 0 -0.2 2.6Z" fill="#edc240"/>
<path d="M3585.6 1365.4l0.4 -27.1 2 0 0.4 0 2 0 0.4 0 0 29.4 -0.4 0 -2 0 -0.4 0 -2 0 -0.4 17.9Z" fill="#edc240"/>
<path d="M3650.3 1413.2l1.3 -5.6 1.1 0 0.3 0 1.4 0 0.7 4.8 0 10.6 -0.7 -0.1 -1.4 0 -0.3 0 -1.1 -0.3 -1.3 -4.3Z" fill="#edc240"/>
<path d="M3703.1 1391.2l0.8 -39.3 1.6 0 0.8 0 1.6 0 0.8 0 0 4 -0.8 0 -1.6 0 -0.8 0 -1.6 0 -0.8 37.1Z" fill="#edc240"/>
<path d="M2078 1505.6l0 0 2.4 0 2.4 0 2.4 0 2.4 0 2.4 0 2.4 0 2.4 0 2.4 0 2.4 0 2.4 0 2.4 0 2.4 0 2.4 0 2.4 0 2.4 0 2.4 0 2.4 0 2.4 0 2.4 0 2.4 0 2.4 0 2.4 0 2.4 0 2.4 0 2.4 0 2.4 0 2.4 0 2.4 0 2.4 0 2.4 0 2.4 0 2.4 0 2.4 0 2.4 0 1.1 0 1.3 -1.8 0.9 -1.2 0.8 0 0.7 0 0.1 0 2.2 3 0.1 0 2.4 0 2.4 0 2.4 0 2.4 0 2.4 0 2.4 0 2.4 0 2.4 0 2.4 0 2.4 0 2.4 0 2.4 0 2.4 0 2.4 0 2.4 0 2.4 0 2.4 0 2.4 0 2.4 0 2.4 0 2.4 0 2.4 0 2.4 0 2.4 0 2.4 0 2.4 0 2.4 0 2.4 0 2.4 0 2.4 0 2.4 0 2.4 0 2.4 0 0.3 0 2.1 -15.1 0.1 -0.9 1.2 0 1.1 0 0.1 0 2.2 16 0.1 0 2.4 0 2.4 0 2.4 0 2.4 0 2.4 0 2.4 0 2.4 0 2.4 0 2.4 0 2.4 0 2.4 0 2.4 0 2.4 0 2.4 0 2.4 0 2.4 0 2.4 0 2.4 0 2.4 0 2.4 0 2.4 0 2.4 0 2.4 0 2.4 0 2.4 0 2.4 0 2.4 0 2.4 0 2.4 0 2.4 0 2.4 0 2.4 0 2.4 0 2.4 0 2.4 0 2.4 0 2.4 0 2.4 0 2.4 0 2.4 0 2.4 0 2.4 0 2.4 0 2.4 0 2.4 0 2.4 0 2.4 0 2.4 0 2.4 0 2.4 0 2.4 0 2.4 0 2.4 0 2.4 0 2.4 0 2.4 0 2.4 0 2.4 0 2.4 0 2.4 0 2.4 0 2.4 0 2.4 0 2.4 0 2.4 0 2.4 0 2.4 0 2.4 0 2.4 0 2.4 0 2.4 0 2.4 0 2.4 0 2.4 0 2.4 0 2.4 0 2.4 0 2.4 0 2.4 0 2.4 0 2.4 0 2.4 0 2.4 0 2.4 0 2.4 0 2.4 0 2.4 0 2.4 0 2.4 0 2.4 0 2.4 0 2.4 0 2.4 0 2.4 0 2.4 0 2.4 0 1.4 0 1 -3 1.2 -4 0.8 0 0.4 0 0.4 0 2 6.2 0.2 0.8 2.2 0 2.4 0 2.4 0 2.4 0 2.4 0 2.4 0 2.4 0 2.4 0 2.4 0 2.4 0 2.4 0 2.4 0 2.4 0 2.4 0 2.4 0 2.4 0 2.4 0 2.4 0 2.4 0 2.4 0 2.4 0 2.4 0 2.4 0 2.4 0 2.4 0 2.4 0 2.3 0 2.4 0 2.4 0 2.4 0 2.4 0 2.4 0 2.4 0 2.4 0 2.4 0 2.4 0 2.4 0 2.4 0 2.4 0 2.4 0 2.4 0 2.4 0 2.4 0 2.4 0 2.4 0 2.4 0 2.4 0 2.4 0 2.4 0 2.4 0 2.4 0 2.4 0 2.4 0 2.4 0 2.4 0 2.4 0 2.4 0 2.4 0 2.4 0 2.4 0 1.5 0 0.9 -10.3 1.3 -13.7 1.1 0 0.5 0 1.6 0 0.3 3.7 1.9 20.3 0.5 0 2.4 0 2.4 0 2.4 0 2.4 0 2.4 0 2.4 0 2.4 0 2.4 0 2.4 0 2.4 0 2.4 0 2.4 0 2.4 0 2.4 0 2.4 0 2.4 0 2.4 0 2.4 0 2.4 0 2.4 0 0.7 0 1.7 -2.4 0.5 -0.6 0.8 0 0.8 0 0.3 0.5 1.9 2.5 0.5 0 2.4 0 2.4 0 2.4 0 2.4 0 2.4 0 2.4 0 2.4 0 0.7 0 1.7 -2.4 0.5 -0.6 0.8 0 0.8 0 0.3 0.5 1.9 2.5 0.5 0 2.4 0 2.4 0 2.4 0 2.4 0 2.4 0 2.4 0 2.4 0 2.4 0 2.4 0 2.4 0 2.4 0 1.7 0 0.7 -0.8 1.5 -1.7 0.8 0 0.1 0 0.7 0 1.7 2 0.5 0.5 1.9 0 2.4 0 2.4 0 2.4 0 2.4 0 2.4 0 2.4 0 2.4 0 2.4 0 2.4 0 2.4 0 2.4 0 2.4 0 2.4 0 2.4 0 2.4 0 2.4 0 2.4 0 2.4 0 2.4 0 2.4 0 2.4 0 2.4 0 2.4 0 2.4 0 2.4 0 2.4 0 2.4 0 2.4 0 2.4 0 2.4 0 2.4 0 2.4 0 2.4 0 2.4 0 2.4 0 2.4 0 2.4 0 2.4 0 2.4 0 2.4 0 2.4 0 2.4 0 1.7 0 0.7 -1.6 1.5 -3.4 0.8 0 0.1 0 0.7 0 1.7 3.9 0.5 1.1 1.9 0 2.4 0 2.4 0 2.4 0 2.4 0 2.4 0 2.4 0 2.4 0 2.4 0 2.4 0 2.4 0 2.4 0 2.4 0 2.4 0 2.4 0 2.4 0 2.4 0 2.4 0 2.4 0 2.4 0 2.4 0 2.4 0 2.4 0 2.4 0 2.4 0 2.4 0 2.4 0 2.4 0 2.4 0 2.4 0 2.4 0 2.4 0 2.4 0 2.4 0 2.4 0 2.4 0 2.4 0 2.4 0 2.4 0 2.4 0 2.4 0 2.4 0 2.4 0 2.4 0 2.4 0 2.4 0 2.4 0 2.4 0 1.3 0 1.1 -3 1.1 -3 0.8 0 0.5 0 0.3 0 1.2 3.3 0.9 0.2 0.1 -0.2 1.2 -3.3 0.8 0 0.3 0 0.5 0 1.9 5.2 0.3 0.8 2.1 0 2.4 0 2.4 0 2.4 0 2.4 0 2.4 0 2.4 0 2.4 0 2.4 0 2.4 0 2.4 0 2.4 0 2.4 0 2.4 0 2.4 0 0 0Z" fill="#4da74d"/>
<path d="M3042.4 1505.6l0 -19 1.1 0 1.3 0 0.3 0 2.1 18.5 0.1 0.5 2.4 0 2.4 0 2.4 0 2.4 0 2.5 0 2.4 0 2.4 0 2.4 0 2.5 0 2.2 0 0.2 -2.5 2 -28.5 0.4 0 0.6 0 1 0 0.8 11.6 1.4 19.4 1.1 0 0 0Z" fill="#4da74d"/>
<path d="M3088.9 1505.6l0 -20 1.3 0 1.1 0 0.5 0 1.9 17.3 0.3 2.7 2.1 0 2.4 0 2.4 0 2.4 0 2.4 0 2.4 0 2.4 0 2.4 0 2.4 0 2.4 0 2.4 0 2.4 0 2.4 0 2.4 0 1.7 0 0.7 -13.1 1.5 -28.9 0.9 0 0.3 0 1.2 0 0.9 16.9 1.3 25.1 1.1 0 2.4 0 2.4 0 2.4 0 2.4 0 2.4 0 2.4 0 2.4 0 2.4 0 2.4 0 2.4 0 2.4 0 2.4 0 2.4 0 2.4 0 2.4 0 1.7 0 0.7 -3.1 1.5 -6.9 0.9 0 0.7 0 1.6 0 0.1 0.3 2.1 9.7 0.3 0 2.4 0 2.4 0 2.4 0 2.4 0 2.4 0 2.4 0 2.4 0 2.4 0 2.4 0 2.4 0 2.4 0 2.4 0 2.4 0 2.4 0 2.4 0 2.4 0 2.4 0 2.4 0 2.4 0 0.5 0 1.9 -4.2 0.3 -0.8 0.8 0 0.8 0 0.5 1 1.7 4 0.7 0 2.4 0 2.4 0 2.4 0 2.4 0 2.4 0 2.4 0 2.4 0 2.4 0 2.4 0 2.4 0 2.4 0 2.4 0 2.4 0 2.3 0 2.4 0 2.4 0 2.4 0 2.4 0 2.4 0 2.4 0 2.4 0 2.4 0 2.4 0 2.4 0 2.4 0 2.4 0 2.4 0 2.4 0 2.4 0 2.4 0 2.4 0 2.4 0 2.4 0 2.4 0 2.4 0 2.4 0 2.4 0 2.4 0 2.4 0 2.4 0 2.4 0 2.4 0 2.4 0 2.4 0 2.4 0 2.4 0 2.4 0 2.4 0 2.4 0 2.4 0 2.4 0 2.4 0 2.4 0 2.4 0 2.4 0 2.4 0 2.4 0 2.4 0 2.4 0 2.4 0 2.4 0 2.4 0 2.4 0 2.4 0 2.4 0 2.4 0 2.4 0 2.4 0 2.4 0 2.4 0 2.4 0 2.4 0 2.4 0 2.4 0 2.4 0 2.4 0 2.4 0 2.4 0 2.4 0 2.4 0 2.4 0 2.4 0 2.4 0 2.4 0 2.4 0 2.4 0 2.4 0 2.4 0 2.4 0 2.4 0 2.4 0 2.4 0 2.4 0 2.4 0 2.4 0 2.4 0 2.4 0 2.4 0 2.4 0 2.4 0 2.4 0 2.4 0 2.4 0 2.4 0 2.4 0 2.4 0 2.4 0 2.4 0 2.4 0 2.4 0 2.4 0 2.4 0 2.4 0 2.4 0 2.4 0 2.4 0 2.4 0 2.4 0 2.4 0 2.4 0 2.4 0 2.4 0 2.4 0 2.4 0 2.4 0 2.4 0 2.4 0 2.4 0 2.4 0 2.4 0 2.4 0 2.4 0 2.4 0 2.4 0 2.4 0 2.4 0 2.4 0 2.4 0 2.4 0 2.4 0 2.4 0 2.4 0 2.4 0 2.4 0 2.4 0 1.2 0 1.2 -15.3 1 -13.7 1.4 0 0.4 0 1.8 0 0.2 2.1 2 26.9 0.4 0 2.4 0 2.4 0 2.4 0 2.4 0 2.4 0 2.4 0 2.4 0 2.4 0 2.4 0 2.4 0 2.4 0 2.4 0 2.4 0 2.4 0 2.3 0 2.4 0 2.4 0 2.4 0 2.4 0 2.4 0 2.4 0 2.4 0 2.4 0 1.3 0 1.1 -10.4 1.1 -9.6 1.3 0 0.3 0 1.6 0 0.5 4.9 1.7 15.1 0.7 0 2.4 0 2.4 0 2.4 0 2.4 0 2.4 0 2.4 0 2.4 0 2.4 0 2.4 0 2.4 0 2.4 0 2.4 0 2.4 0 2.4 0 2.4 0 2.4 0 2.4 0 2.4 0 1.3 0 1.1 -2.1 1.1 -1.9 0.8 0 0.5 0 0.3 0 2.1 3.9 0.1 0.1 2.3 0 2.4 0 1.3 0 1.1 -2.6 1.1 -2.4 0.8 0 0.5 0 0.3 0 2.1 4.8 0.1 0.2 2.2 -4 0.1 0 0.7 0 0.8 0 0.9 1.7 1.3 2.3 1.1 0 2.4 0 2.4 0 2.4 0 2.4 0 2.4 0 2.4 0 2.4 0 2.4 0 2.4 0 2.4 0 2.4 0 2.4 0 2.4 0 2.4 0 2.4 0 2.4 0 2.4 0 2.4 0 2.4 0 2.4 0 2.4 0 2.4 0 2.4 0 2.4 0 2.4 0 2.4 0 2.4 0 2.4 0 2.4 0 2.4 0 2.4 0 2.4 0 2.4 0 0 0Z" fill="#4da74d"/>
<line x1="2078.0" y1="1505.0" x2="3030.7" y2="1505.0" stroke="#b5574e" stroke-width="1.2"/>
<line x1="3042.4" y1="1505.0" x2="3078.8" y2="1505.0" stroke="#b5574e" stroke-width="1.2"/>
<line x1="3088.9" y1="1505.0" x2="3806.3" y2="1505.0" stroke="#b5574e" stroke-width="1.2"/>
<line x1="2077.8" y1="914.6" x2="2077.8" y2="1507" stroke="#222" stroke-width="1.9"/>
<line x1="2077" y1="1450.5" x2="2085.5" y2="1450.5" stroke="#222" stroke-width="2.6"/>
<line x1="2077" y1="1395.4" x2="2085.5" y2="1395.4" stroke="#222" stroke-width="2.6"/>
<line x1="2077" y1="1340.3" x2="2085.5" y2="1340.3" stroke="#222" stroke-width="2.6"/>
<line x1="2077" y1="1285.2" x2="2085.5" y2="1285.2" stroke="#222" stroke-width="2.6"/>
<line x1="2077" y1="1230.1" x2="2085.5" y2="1230.1" stroke="#222" stroke-width="2.6"/>
<line x1="2077" y1="1175.0" x2="2085.5" y2="1175.0" stroke="#222" stroke-width="2.6"/>
<line x1="2077" y1="1119.9" x2="2085.5" y2="1119.9" stroke="#222" stroke-width="2.6"/>
<line x1="2077" y1="1064.8" x2="2085.5" y2="1064.8" stroke="#222" stroke-width="2.6"/>
<line x1="2077" y1="1009.7" x2="2085.5" y2="1009.7" stroke="#222" stroke-width="2.6"/>
<line x1="2077" y1="954.6" x2="2085.5" y2="954.6" stroke="#222" stroke-width="2.6"/>
<line x1="2076.7" y1="1507.1" x2="3806.3" y2="1507.1" stroke="#111" stroke-width="2.6"/>
<g stroke="#222" stroke-width="2.6"><line x1="2124.6" y1="1507" x2="2124.6" y2="1520.5"/><line x1="2175.8" y1="1507" x2="2175.8" y2="1533.3"/><line x1="2227.0" y1="1507" x2="2227.0" y2="1520.5"/><line x1="2278.2" y1="1507" x2="2278.2" y2="1520.5"/><line x1="2329.4" y1="1507" x2="2329.4" y2="1520.5"/><line x1="2380.6" y1="1507" x2="2380.6" y2="1520.5"/><line x1="2431.8" y1="1507" x2="2431.8" y2="1520.5"/><line x1="2483.0" y1="1507" x2="2483.0" y2="1533.3"/><line x1="2534.2" y1="1507" x2="2534.2" y2="1520.5"/><line x1="2585.3" y1="1507" x2="2585.3" y2="1520.5"/><line x1="2636.5" y1="1507" x2="2636.5" y2="1520.5"/><line x1="2687.7" y1="1507" x2="2687.7" y2="1520.5"/><line x1="2738.9" y1="1507" x2="2738.9" y2="1520.5"/><line x1="2790.1" y1="1507" x2="2790.1" y2="1533.3"/><line x1="2841.3" y1="1507" x2="2841.3" y2="1520.5"/><line x1="2892.5" y1="1507" x2="2892.5" y2="1520.5"/><line x1="2943.7" y1="1507" x2="2943.7" y2="1520.5"/><line x1="2994.9" y1="1507" x2="2994.9" y2="1520.5"/><line x1="3046.1" y1="1507" x2="3046.1" y2="1520.5"/><line x1="3097.3" y1="1507" x2="3097.3" y2="1533.3"/><line x1="3148.5" y1="1507" x2="3148.5" y2="1520.5"/><line x1="3199.7" y1="1507" x2="3199.7" y2="1520.5"/><line x1="3250.9" y1="1507" x2="3250.9" y2="1520.5"/><line x1="3302.0" y1="1507" x2="3302.0" y2="1520.5"/><line x1="3353.2" y1="1507" x2="3353.2" y2="1520.5"/><line x1="3404.4" y1="1507" x2="3404.4" y2="1533.3"/><line x1="3455.6" y1="1507" x2="3455.6" y2="1520.5"/><line x1="3506.8" y1="1507" x2="3506.8" y2="1520.5"/><line x1="3558.0" y1="1507" x2="3558.0" y2="1520.5"/><line x1="3609.2" y1="1507" x2="3609.2" y2="1520.5"/><line x1="3660.4" y1="1507" x2="3660.4" y2="1520.5"/><line x1="3711.6" y1="1507" x2="3711.6" y2="1533.3"/><line x1="3762.8" y1="1507" x2="3762.8" y2="1520.5"/></g>
</svg>
<svg class="r" style="left:3770px;top:170px" width="45" height="45" viewBox="3770 170 45 45"><path d="M3785.55 195 V188.6 A5.75 5.75 0 0 1 3797.05 188.6 V190.9" stroke="#1c1c1c" stroke-width="3.5" fill="none"/><rect x="3780.1" y="194.1" width="22.7" height="12.7" rx="2.6" fill="#1c1c1c"/></svg>
<div class="r" style="left:2096.6px;top:226.6px;width:325.7000000000003px;height:123.79999999999998px;background:rgba(255,255,255,0.88);border:1.5px solid #e3e3e3;box-sizing:border-box;border-radius:6px;box-shadow:0 4px 12px rgba(0,0,0,0.13);"></div>
<div class="r" style="left:2109.00px;top:241.00px;width:24.00px;height:24.00px;background:#edc240;"></div>
<div class="t" style="left:2139.50px;top:244.68px;font-size:24px;line-height:24px;color:#333333;font-weight:400;">Received bytes/s</div>
<div class="r" style="left:2109.00px;top:274.00px;width:24.00px;height:24.00px;background:#afd8f8;"></div>
<div class="t" style="left:2139.50px;top:277.68px;font-size:24px;line-height:24px;color:#333333;font-weight:400;">Written bytes/s</div>
<div class="r" style="left:2109.00px;top:307.00px;width:24.00px;height:24.00px;background:#cb4b4b;"></div>
<div class="t" style="left:2139.50px;top:310.68px;font-size:24px;line-height:24px;color:#333333;font-weight:400;">Received header bytes/s</div>
<div class="r" style="left:2096.7px;top:898.5px;width:289.60000000000036px;height:156.5999999999999px;background:rgba(255,255,255,0.88);border:1.5px solid #e3e3e3;box-sizing:border-box;border-radius:6px;box-shadow:0 4px 12px rgba(0,0,0,0.13);"></div>
<div class="r" style="left:2109.00px;top:913.00px;width:24.00px;height:24.00px;background:#edc240;"></div>
<div class="t" style="left:2139.50px;top:916.68px;font-size:24px;line-height:24px;color:#333333;font-weight:400;">Received packages/s</div>
<div class="r" style="left:2109.00px;top:946.00px;width:24.00px;height:24.00px;background:#afd8f8;"></div>
<div class="t" style="left:2139.50px;top:949.68px;font-size:24px;line-height:24px;color:#333333;font-weight:400;">Written packages/s</div>
<div class="r" style="left:2109.00px;top:979.00px;width:24.00px;height:24.00px;background:#cb4b4b;"></div>
<div class="t" style="left:2139.50px;top:982.68px;font-size:24px;line-height:24px;color:#333333;font-weight:400;">Failed packages/s</div>
<div class="r" style="left:2109.00px;top:1012.00px;width:24.00px;height:24.00px;background:#4da74d;"></div>
<div class="t" style="left:2139.50px;top:1015.68px;font-size:24px;line-height:24px;color:#333333;font-weight:400;">Duplicate packages/s</div>
<div class="t" style="right:1825.50px;text-align:right;top:715.21px;font-size:23px;line-height:23px;color:#111;font-weight:400;">50.0 K</div>
<div class="t" style="right:1825.50px;text-align:right;top:607.48px;font-size:23px;line-height:23px;color:#111;font-weight:400;">100 K</div>
<div class="t" style="right:1825.50px;text-align:right;top:499.76px;font-size:23px;line-height:23px;color:#111;font-weight:400;">150 K</div>
<div class="t" style="right:1825.50px;text-align:right;top:392.03px;font-size:23px;line-height:23px;color:#111;font-weight:400;">200 K</div>
<div class="t" style="right:1825.50px;text-align:right;top:284.31px;font-size:23px;line-height:23px;color:#111;font-weight:400;">250 K</div>
<div class="t" style="right:1832.00px;text-align:right;top:1438.18px;font-size:24px;line-height:24px;color:#111;font-weight:400;">50.0</div>
<div class="t" style="right:1832.00px;text-align:right;top:1383.08px;font-size:24px;line-height:24px;color:#111;font-weight:400;">100</div>
<div class="t" style="right:1832.00px;text-align:right;top:1327.98px;font-size:24px;line-height:24px;color:#111;font-weight:400;">150</div>
<div class="t" style="right:1832.00px;text-align:right;top:1272.88px;font-size:24px;line-height:24px;color:#111;font-weight:400;">200</div>
<div class="t" style="right:1832.00px;text-align:right;top:1217.78px;font-size:24px;line-height:24px;color:#111;font-weight:400;">250</div>
<div class="t" style="right:1832.00px;text-align:right;top:1162.68px;font-size:24px;line-height:24px;color:#111;font-weight:400;">300</div>
<div class="t" style="right:1832.00px;text-align:right;top:1107.58px;font-size:24px;line-height:24px;color:#111;font-weight:400;">350</div>
<div class="t" style="right:1832.00px;text-align:right;top:1052.48px;font-size:24px;line-height:24px;color:#111;font-weight:400;">400</div>
<div class="t" style="right:1832.00px;text-align:right;top:997.38px;font-size:24px;line-height:24px;color:#111;font-weight:400;">450</div>
<div class="t" style="right:1832.00px;text-align:right;top:942.28px;font-size:24px;line-height:24px;color:#111;font-weight:400;">500</div>
<div class="t" style="left:1576.00px;width:1200px;text-align:center;top:1544.01px;font-size:25.5px;line-height:25.5px;color:#111;font-weight:400;">08:30:00</div>
<div class="t" style="left:1883.16px;width:1200px;text-align:center;top:1544.01px;font-size:25.5px;line-height:25.5px;color:#111;font-weight:400;">09:00:00</div>
<div class="t" style="left:2190.32px;width:1200px;text-align:center;top:1544.01px;font-size:25.5px;line-height:25.5px;color:#111;font-weight:400;">09:30:00</div>
<div class="t" style="left:2497.48px;width:1200px;text-align:center;top:1544.01px;font-size:25.5px;line-height:25.5px;color:#111;font-weight:400;">10:00:00</div>
<div class="t" style="left:2804.64px;width:1200px;text-align:center;top:1544.01px;font-size:25.5px;line-height:25.5px;color:#111;font-weight:400;">10:30:00</div>
<div class="t" style="left:3111.80px;width:1200px;text-align:center;top:1544.01px;font-size:25.5px;line-height:25.5px;color:#111;font-weight:400;">11:00:00</div>
<div class="t" style="left:1576.00px;width:1200px;text-align:center;top:1583.21px;font-size:25.5px;line-height:25.5px;color:#111;font-weight:400;">2022-08-26</div>
</body></html>
